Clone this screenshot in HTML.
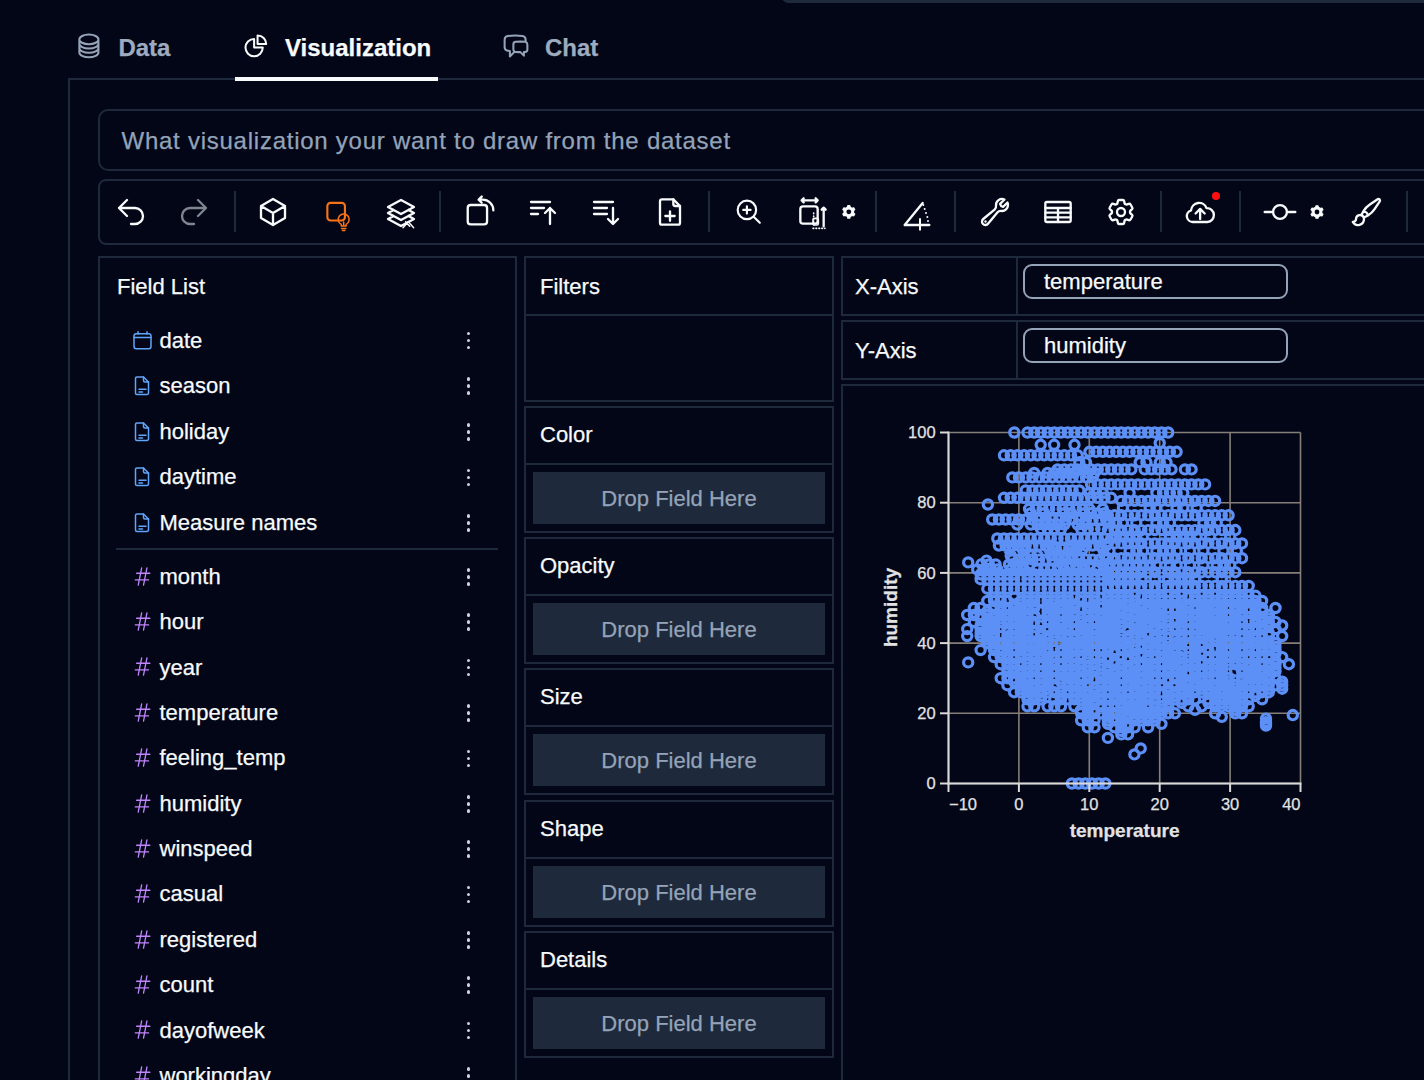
<!DOCTYPE html><html><head><meta charset="utf-8"><style>
html,body{margin:0;padding:0;background:#020617;width:1424px;height:1080px;overflow:hidden;position:relative;font-family:"Liberation Sans",sans-serif}
.t{position:absolute;line-height:1;white-space:nowrap;-webkit-text-stroke:0.25px currentColor}
svg{position:absolute;overflow:visible}
</style></head><body>
<div style="position:absolute;left:780.5px;top:-12px;width:800px;height:15px;box-sizing:border-box;background:#1e293b;border-radius:10px"></div><svg style="left:75.4px;top:32px" width="27.8" height="27.8" viewBox="0 0 24 24" fill="none" stroke="#94a3b8" stroke-width="1.75" stroke-linecap="round" stroke-linejoin="round"><path d="M20.25 6.375c0 2.278-3.694 4.125-8.25 4.125S3.75 8.653 3.75 6.375m16.5 0c0-2.278-3.694-4.125-8.25-4.125S3.75 4.097 3.75 6.375m16.5 0v11.25c0 2.278-3.694 4.125-8.25 4.125s-8.25-1.847-8.25-4.125V6.375m16.5 0v3.75m-16.5-3.75v3.75m16.5 0v3.75C20.25 16.153 16.556 18 12 18s-8.25-1.847-8.25-4.125v-3.75m16.5 0c0 2.278-3.694 4.125-8.25 4.125s-8.25-1.847-8.25-4.125"/></svg><div class="t" style="left:118.4px;top:36.3px;font-size:24px;color:#9eabbf;font-weight:bold;">Data</div><svg style="left:241.9px;top:31.9px" width="27.7" height="27.7" viewBox="0 0 24 24" fill="none" stroke="#f8fafc" stroke-width="1.75" stroke-linejoin="round"><path d="M10.5 6a7.5 7.5 0 1 0 7.5 7.5h-7.5V6Z"/><path d="M13.5 10.5H21A7.5 7.5 0 0 0 13.5 3v7.5Z"/></svg><div class="t" style="left:285px;top:36.3px;font-size:24px;color:#f8fafc;font-weight:bold;">Visualization</div><svg style="left:502.4px;top:31.9px" width="28" height="28" viewBox="0 0 24 24" fill="none" stroke="#94a3b8" stroke-width="1.75" stroke-linecap="round" stroke-linejoin="round"><path d="M20.25 8.511c.884.284 1.5 1.128 1.5 2.097v4.286c0 1.136-.847 2.1-1.98 2.193-.34.027-.68.052-1.02.072v3.091l-3-3c-1.354 0-2.694-.055-4.02-.163a2.115 2.115 0 0 1-.825-.242m9.345-8.334a2.126 2.126 0 0 0-.476-.095 48.64 48.64 0 0 0-8.048 0c-1.131.094-1.976 1.057-1.976 2.192v4.286c0 .837.46 1.58 1.155 1.951m9.345-8.334V6.637c0-1.621-1.152-3.026-2.76-3.235A48.455 48.455 0 0 0 11.25 3c-2.115 0-4.198.137-6.24.402-1.608.209-2.76 1.614-2.76 3.235v6.226c0 1.621 1.152 3.026 2.76 3.235.577.075 1.157.14 1.74.194V21l4.155-4.155"/></svg><div class="t" style="left:545px;top:36.3px;font-size:24px;color:#9eabbf;font-weight:bold;">Chat</div><div style="position:absolute;left:68px;top:78px;width:1400px;height:1100px;box-sizing:border-box;border-left:2px solid #1e293b;border-top:2px solid #1e293b"></div><div style="position:absolute;left:235px;top:77px;width:203px;height:4px;box-sizing:border-box;background:#f8fafc"></div><div style="position:absolute;left:98px;top:109px;width:1400px;height:62px;box-sizing:border-box;border:2px solid #1e293b;border-radius:10px"></div><div class="t" style="left:121.5px;top:128.8px;font-size:24px;color:#94a3b8;font-weight:normal;letter-spacing:0.75px">What visualization your want to draw from the dataset</div><div style="position:absolute;left:98px;top:179px;width:1400px;height:66px;box-sizing:border-box;border:2px solid #1e293b;border-radius:8px"></div><div style="position:absolute;left:98px;top:256px;width:419px;height:900px;box-sizing:border-box;border:2px solid #1e293b"></div><div class="t" style="left:117px;top:275.7px;font-size:22px;color:#f8fafc;font-weight:normal;">Field List</div><div style="position:absolute;left:524px;top:256px;width:310px;height:146px;box-sizing:border-box;border:2px solid #1e293b"></div><div style="position:absolute;left:524px;top:314px;width:310px;height:2px;box-sizing:border-box;background:#1e293b"></div><div class="t" style="left:540px;top:275.7px;font-size:22px;color:#f8fafc;font-weight:normal;">Filters</div><div style="position:absolute;left:524px;top:406px;width:310px;height:127px;box-sizing:border-box;border:2px solid #1e293b"></div><div style="position:absolute;left:524px;top:463px;width:310px;height:2px;box-sizing:border-box;background:#1e293b"></div><div class="t" style="left:540px;top:424.4px;font-size:22px;color:#f8fafc;font-weight:normal;">Color</div><div style="position:absolute;left:533px;top:472px;width:292px;height:52px;box-sizing:border-box;background:#1e293b"></div><div class="t" style="left:533px;top:487.5px;width:292px;text-align:center;font-size:22px;color:#94a3b8">Drop Field Here</div><div style="position:absolute;left:524px;top:537px;width:310px;height:127px;box-sizing:border-box;border:2px solid #1e293b"></div><div style="position:absolute;left:524px;top:594px;width:310px;height:2px;box-sizing:border-box;background:#1e293b"></div><div class="t" style="left:540px;top:555.4px;font-size:22px;color:#f8fafc;font-weight:normal;">Opacity</div><div style="position:absolute;left:533px;top:603px;width:292px;height:52px;box-sizing:border-box;background:#1e293b"></div><div class="t" style="left:533px;top:618.5px;width:292px;text-align:center;font-size:22px;color:#94a3b8">Drop Field Here</div><div style="position:absolute;left:524px;top:668px;width:310px;height:127px;box-sizing:border-box;border:2px solid #1e293b"></div><div style="position:absolute;left:524px;top:725px;width:310px;height:2px;box-sizing:border-box;background:#1e293b"></div><div class="t" style="left:540px;top:686.4px;font-size:22px;color:#f8fafc;font-weight:normal;">Size</div><div style="position:absolute;left:533px;top:734px;width:292px;height:52px;box-sizing:border-box;background:#1e293b"></div><div class="t" style="left:533px;top:749.5px;width:292px;text-align:center;font-size:22px;color:#94a3b8">Drop Field Here</div><div style="position:absolute;left:524px;top:800px;width:310px;height:127px;box-sizing:border-box;border:2px solid #1e293b"></div><div style="position:absolute;left:524px;top:857px;width:310px;height:2px;box-sizing:border-box;background:#1e293b"></div><div class="t" style="left:540px;top:818.4px;font-size:22px;color:#f8fafc;font-weight:normal;">Shape</div><div style="position:absolute;left:533px;top:866px;width:292px;height:52px;box-sizing:border-box;background:#1e293b"></div><div class="t" style="left:533px;top:881.5px;width:292px;text-align:center;font-size:22px;color:#94a3b8">Drop Field Here</div><div style="position:absolute;left:524px;top:931px;width:310px;height:127px;box-sizing:border-box;border:2px solid #1e293b"></div><div style="position:absolute;left:524px;top:988px;width:310px;height:2px;box-sizing:border-box;background:#1e293b"></div><div class="t" style="left:540px;top:949.4px;font-size:22px;color:#f8fafc;font-weight:normal;">Details</div><div style="position:absolute;left:533px;top:997px;width:292px;height:52px;box-sizing:border-box;background:#1e293b"></div><div class="t" style="left:533px;top:1012.5px;width:292px;text-align:center;font-size:22px;color:#94a3b8">Drop Field Here</div><div style="position:absolute;left:841px;top:256px;width:700px;height:60px;box-sizing:border-box;border:2px solid #1e293b"></div><div style="position:absolute;left:1016px;top:256px;width:2px;height:60px;box-sizing:border-box;background:#1e293b"></div><div class="t" style="left:855px;top:276px;font-size:22px;color:#f8fafc;font-weight:normal;">X-Axis</div><div style="position:absolute;left:1023px;top:264px;width:265px;height:35px;box-sizing:border-box;border:2px solid #94a3b8;border-radius:9px"></div><div class="t" style="left:1044px;top:270.5px;font-size:22px;color:#f8fafc;font-weight:normal;">temperature</div><div style="position:absolute;left:841px;top:320px;width:700px;height:60px;box-sizing:border-box;border:2px solid #1e293b"></div><div style="position:absolute;left:1016px;top:320px;width:2px;height:60px;box-sizing:border-box;background:#1e293b"></div><div class="t" style="left:855px;top:340px;font-size:22px;color:#f8fafc;font-weight:normal;">Y-Axis</div><div style="position:absolute;left:1023px;top:328px;width:265px;height:35px;box-sizing:border-box;border:2px solid #94a3b8;border-radius:9px"></div><div class="t" style="left:1044px;top:334.5px;font-size:22px;color:#f8fafc;font-weight:normal;">humidity</div><div style="position:absolute;left:841px;top:384px;width:700px;height:800px;box-sizing:border-box;border:2px solid #1e293b"></div><svg style="left:133px;top:330.5px" width="19" height="19" viewBox="0 0 19 19" fill="none" stroke="#60a5fa" stroke-width="1.5" stroke-linecap="round" stroke-linejoin="round"><rect x="1" y="2.8" width="17" height="15" rx="2.2"/><path d="M1 6.5h17M5 0.8v2.2M14 0.8v2.2"/></svg><div class="t" style="left:159.5px;top:329.5px;font-size:22px;color:#f8fafc;font-weight:normal;">date</div><div style="position:absolute;left:466.6px;top:331.7px;width:3.7px;height:3.7px;border-radius:50%;background:#cbd5e1"></div><div style="position:absolute;left:466.6px;top:338.7px;width:3.7px;height:3.7px;border-radius:50%;background:#cbd5e1"></div><div style="position:absolute;left:466.6px;top:345.7px;width:3.7px;height:3.7px;border-radius:50%;background:#cbd5e1"></div><svg style="left:133.3px;top:376.1px" width="19" height="20" viewBox="0 0 19 20" fill="none" stroke="#60a5fa" stroke-width="1.5" stroke-linecap="round" stroke-linejoin="round"><path d="M4 1h6.5l5 5v11a1.5 1.5 0 0 1-1.5 1.5H4A1.5 1.5 0 0 1 2.5 17V2.5A1.5 1.5 0 0 1 4 1Z"/><path d="M10.5 1v3.5a1.5 1.5 0 0 0 1.5 1.5h3.5M6 13.2h7M6 16h3.5"/></svg><div class="t" style="left:159.5px;top:375.1px;font-size:22px;color:#f8fafc;font-weight:normal;">season</div><div style="position:absolute;left:466.6px;top:377.3px;width:3.7px;height:3.7px;border-radius:50%;background:#cbd5e1"></div><div style="position:absolute;left:466.6px;top:384.3px;width:3.7px;height:3.7px;border-radius:50%;background:#cbd5e1"></div><div style="position:absolute;left:466.6px;top:391.3px;width:3.7px;height:3.7px;border-radius:50%;background:#cbd5e1"></div><svg style="left:133.3px;top:421.7px" width="19" height="20" viewBox="0 0 19 20" fill="none" stroke="#60a5fa" stroke-width="1.5" stroke-linecap="round" stroke-linejoin="round"><path d="M4 1h6.5l5 5v11a1.5 1.5 0 0 1-1.5 1.5H4A1.5 1.5 0 0 1 2.5 17V2.5A1.5 1.5 0 0 1 4 1Z"/><path d="M10.5 1v3.5a1.5 1.5 0 0 0 1.5 1.5h3.5M6 13.2h7M6 16h3.5"/></svg><div class="t" style="left:159.5px;top:420.7px;font-size:22px;color:#f8fafc;font-weight:normal;">holiday</div><div style="position:absolute;left:466.6px;top:422.9px;width:3.7px;height:3.7px;border-radius:50%;background:#cbd5e1"></div><div style="position:absolute;left:466.6px;top:429.9px;width:3.7px;height:3.7px;border-radius:50%;background:#cbd5e1"></div><div style="position:absolute;left:466.6px;top:436.9px;width:3.7px;height:3.7px;border-radius:50%;background:#cbd5e1"></div><svg style="left:133.3px;top:467.3px" width="19" height="20" viewBox="0 0 19 20" fill="none" stroke="#60a5fa" stroke-width="1.5" stroke-linecap="round" stroke-linejoin="round"><path d="M4 1h6.5l5 5v11a1.5 1.5 0 0 1-1.5 1.5H4A1.5 1.5 0 0 1 2.5 17V2.5A1.5 1.5 0 0 1 4 1Z"/><path d="M10.5 1v3.5a1.5 1.5 0 0 0 1.5 1.5h3.5M6 13.2h7M6 16h3.5"/></svg><div class="t" style="left:159.5px;top:466.3px;font-size:22px;color:#f8fafc;font-weight:normal;">daytime</div><div style="position:absolute;left:466.6px;top:468.5px;width:3.7px;height:3.7px;border-radius:50%;background:#cbd5e1"></div><div style="position:absolute;left:466.6px;top:475.5px;width:3.7px;height:3.7px;border-radius:50%;background:#cbd5e1"></div><div style="position:absolute;left:466.6px;top:482.5px;width:3.7px;height:3.7px;border-radius:50%;background:#cbd5e1"></div><svg style="left:133.3px;top:512.9px" width="19" height="20" viewBox="0 0 19 20" fill="none" stroke="#60a5fa" stroke-width="1.5" stroke-linecap="round" stroke-linejoin="round"><path d="M4 1h6.5l5 5v11a1.5 1.5 0 0 1-1.5 1.5H4A1.5 1.5 0 0 1 2.5 17V2.5A1.5 1.5 0 0 1 4 1Z"/><path d="M10.5 1v3.5a1.5 1.5 0 0 0 1.5 1.5h3.5M6 13.2h7M6 16h3.5"/></svg><div class="t" style="left:159.5px;top:511.9px;font-size:22px;color:#f8fafc;font-weight:normal;">Measure names</div><div style="position:absolute;left:466.6px;top:514.0999999999999px;width:3.7px;height:3.7px;border-radius:50%;background:#cbd5e1"></div><div style="position:absolute;left:466.6px;top:521.1px;width:3.7px;height:3.7px;border-radius:50%;background:#cbd5e1"></div><div style="position:absolute;left:466.6px;top:528.1px;width:3.7px;height:3.7px;border-radius:50%;background:#cbd5e1"></div><div style="position:absolute;left:116px;top:548px;width:382px;height:2px;box-sizing:border-box;background:#1e293b"></div><svg style="left:132px;top:565.5999999999999px" width="21.2" height="21.2" viewBox="0 0 24 24" fill="none" stroke="#c084fc" stroke-width="1.5" stroke-linecap="round" stroke-linejoin="round"><path d="M5.25 8.25h15m-16.5 7.5h15m-1.8-13.5-3.9 19.5m-2.1-19.5-3.9 19.5"/></svg><div class="t" style="left:159.5px;top:565.8px;font-size:22px;color:#f8fafc;font-weight:normal;">month</div><div style="position:absolute;left:466.6px;top:568.0px;width:3.7px;height:3.7px;border-radius:50%;background:#cbd5e1"></div><div style="position:absolute;left:466.6px;top:575.0px;width:3.7px;height:3.7px;border-radius:50%;background:#cbd5e1"></div><div style="position:absolute;left:466.6px;top:582.0px;width:3.7px;height:3.7px;border-radius:50%;background:#cbd5e1"></div><svg style="left:132px;top:610.9799999999999px" width="21.2" height="21.2" viewBox="0 0 24 24" fill="none" stroke="#c084fc" stroke-width="1.5" stroke-linecap="round" stroke-linejoin="round"><path d="M5.25 8.25h15m-16.5 7.5h15m-1.8-13.5-3.9 19.5m-2.1-19.5-3.9 19.5"/></svg><div class="t" style="left:159.5px;top:611.18px;font-size:22px;color:#f8fafc;font-weight:normal;">hour</div><div style="position:absolute;left:466.6px;top:613.38px;width:3.7px;height:3.7px;border-radius:50%;background:#cbd5e1"></div><div style="position:absolute;left:466.6px;top:620.38px;width:3.7px;height:3.7px;border-radius:50%;background:#cbd5e1"></div><div style="position:absolute;left:466.6px;top:627.38px;width:3.7px;height:3.7px;border-radius:50%;background:#cbd5e1"></div><svg style="left:132px;top:656.3599999999999px" width="21.2" height="21.2" viewBox="0 0 24 24" fill="none" stroke="#c084fc" stroke-width="1.5" stroke-linecap="round" stroke-linejoin="round"><path d="M5.25 8.25h15m-16.5 7.5h15m-1.8-13.5-3.9 19.5m-2.1-19.5-3.9 19.5"/></svg><div class="t" style="left:159.5px;top:656.56px;font-size:22px;color:#f8fafc;font-weight:normal;">year</div><div style="position:absolute;left:466.6px;top:658.76px;width:3.7px;height:3.7px;border-radius:50%;background:#cbd5e1"></div><div style="position:absolute;left:466.6px;top:665.76px;width:3.7px;height:3.7px;border-radius:50%;background:#cbd5e1"></div><div style="position:absolute;left:466.6px;top:672.76px;width:3.7px;height:3.7px;border-radius:50%;background:#cbd5e1"></div><svg style="left:132px;top:701.7399999999999px" width="21.2" height="21.2" viewBox="0 0 24 24" fill="none" stroke="#c084fc" stroke-width="1.5" stroke-linecap="round" stroke-linejoin="round"><path d="M5.25 8.25h15m-16.5 7.5h15m-1.8-13.5-3.9 19.5m-2.1-19.5-3.9 19.5"/></svg><div class="t" style="left:159.5px;top:701.9399999999999px;font-size:22px;color:#f8fafc;font-weight:normal;">temperature</div><div style="position:absolute;left:466.6px;top:704.14px;width:3.7px;height:3.7px;border-radius:50%;background:#cbd5e1"></div><div style="position:absolute;left:466.6px;top:711.14px;width:3.7px;height:3.7px;border-radius:50%;background:#cbd5e1"></div><div style="position:absolute;left:466.6px;top:718.14px;width:3.7px;height:3.7px;border-radius:50%;background:#cbd5e1"></div><svg style="left:132px;top:747.1199999999999px" width="21.2" height="21.2" viewBox="0 0 24 24" fill="none" stroke="#c084fc" stroke-width="1.5" stroke-linecap="round" stroke-linejoin="round"><path d="M5.25 8.25h15m-16.5 7.5h15m-1.8-13.5-3.9 19.5m-2.1-19.5-3.9 19.5"/></svg><div class="t" style="left:159.5px;top:747.3199999999999px;font-size:22px;color:#f8fafc;font-weight:normal;">feeling_temp</div><div style="position:absolute;left:466.6px;top:749.52px;width:3.7px;height:3.7px;border-radius:50%;background:#cbd5e1"></div><div style="position:absolute;left:466.6px;top:756.52px;width:3.7px;height:3.7px;border-radius:50%;background:#cbd5e1"></div><div style="position:absolute;left:466.6px;top:763.52px;width:3.7px;height:3.7px;border-radius:50%;background:#cbd5e1"></div><svg style="left:132px;top:792.4999999999999px" width="21.2" height="21.2" viewBox="0 0 24 24" fill="none" stroke="#c084fc" stroke-width="1.5" stroke-linecap="round" stroke-linejoin="round"><path d="M5.25 8.25h15m-16.5 7.5h15m-1.8-13.5-3.9 19.5m-2.1-19.5-3.9 19.5"/></svg><div class="t" style="left:159.5px;top:792.6999999999999px;font-size:22px;color:#f8fafc;font-weight:normal;">humidity</div><div style="position:absolute;left:466.6px;top:794.9px;width:3.7px;height:3.7px;border-radius:50%;background:#cbd5e1"></div><div style="position:absolute;left:466.6px;top:801.9px;width:3.7px;height:3.7px;border-radius:50%;background:#cbd5e1"></div><div style="position:absolute;left:466.6px;top:808.9px;width:3.7px;height:3.7px;border-radius:50%;background:#cbd5e1"></div><svg style="left:132px;top:837.8799999999999px" width="21.2" height="21.2" viewBox="0 0 24 24" fill="none" stroke="#c084fc" stroke-width="1.5" stroke-linecap="round" stroke-linejoin="round"><path d="M5.25 8.25h15m-16.5 7.5h15m-1.8-13.5-3.9 19.5m-2.1-19.5-3.9 19.5"/></svg><div class="t" style="left:159.5px;top:838.0799999999999px;font-size:22px;color:#f8fafc;font-weight:normal;">winspeed</div><div style="position:absolute;left:466.6px;top:840.28px;width:3.7px;height:3.7px;border-radius:50%;background:#cbd5e1"></div><div style="position:absolute;left:466.6px;top:847.28px;width:3.7px;height:3.7px;border-radius:50%;background:#cbd5e1"></div><div style="position:absolute;left:466.6px;top:854.28px;width:3.7px;height:3.7px;border-radius:50%;background:#cbd5e1"></div><svg style="left:132px;top:883.26px" width="21.2" height="21.2" viewBox="0 0 24 24" fill="none" stroke="#c084fc" stroke-width="1.5" stroke-linecap="round" stroke-linejoin="round"><path d="M5.25 8.25h15m-16.5 7.5h15m-1.8-13.5-3.9 19.5m-2.1-19.5-3.9 19.5"/></svg><div class="t" style="left:159.5px;top:883.46px;font-size:22px;color:#f8fafc;font-weight:normal;">casual</div><div style="position:absolute;left:466.6px;top:885.6600000000001px;width:3.7px;height:3.7px;border-radius:50%;background:#cbd5e1"></div><div style="position:absolute;left:466.6px;top:892.6600000000001px;width:3.7px;height:3.7px;border-radius:50%;background:#cbd5e1"></div><div style="position:absolute;left:466.6px;top:899.6600000000001px;width:3.7px;height:3.7px;border-radius:50%;background:#cbd5e1"></div><svg style="left:132px;top:928.6399999999999px" width="21.2" height="21.2" viewBox="0 0 24 24" fill="none" stroke="#c084fc" stroke-width="1.5" stroke-linecap="round" stroke-linejoin="round"><path d="M5.25 8.25h15m-16.5 7.5h15m-1.8-13.5-3.9 19.5m-2.1-19.5-3.9 19.5"/></svg><div class="t" style="left:159.5px;top:928.8399999999999px;font-size:22px;color:#f8fafc;font-weight:normal;">registered</div><div style="position:absolute;left:466.6px;top:931.04px;width:3.7px;height:3.7px;border-radius:50%;background:#cbd5e1"></div><div style="position:absolute;left:466.6px;top:938.04px;width:3.7px;height:3.7px;border-radius:50%;background:#cbd5e1"></div><div style="position:absolute;left:466.6px;top:945.04px;width:3.7px;height:3.7px;border-radius:50%;background:#cbd5e1"></div><svg style="left:132px;top:974.02px" width="21.2" height="21.2" viewBox="0 0 24 24" fill="none" stroke="#c084fc" stroke-width="1.5" stroke-linecap="round" stroke-linejoin="round"><path d="M5.25 8.25h15m-16.5 7.5h15m-1.8-13.5-3.9 19.5m-2.1-19.5-3.9 19.5"/></svg><div class="t" style="left:159.5px;top:974.22px;font-size:22px;color:#f8fafc;font-weight:normal;">count</div><div style="position:absolute;left:466.6px;top:976.4200000000001px;width:3.7px;height:3.7px;border-radius:50%;background:#cbd5e1"></div><div style="position:absolute;left:466.6px;top:983.4200000000001px;width:3.7px;height:3.7px;border-radius:50%;background:#cbd5e1"></div><div style="position:absolute;left:466.6px;top:990.4200000000001px;width:3.7px;height:3.7px;border-radius:50%;background:#cbd5e1"></div><svg style="left:132px;top:1019.3999999999999px" width="21.2" height="21.2" viewBox="0 0 24 24" fill="none" stroke="#c084fc" stroke-width="1.5" stroke-linecap="round" stroke-linejoin="round"><path d="M5.25 8.25h15m-16.5 7.5h15m-1.8-13.5-3.9 19.5m-2.1-19.5-3.9 19.5"/></svg><div class="t" style="left:159.5px;top:1019.5999999999999px;font-size:22px;color:#f8fafc;font-weight:normal;">dayofweek</div><div style="position:absolute;left:466.6px;top:1021.8px;width:3.7px;height:3.7px;border-radius:50%;background:#cbd5e1"></div><div style="position:absolute;left:466.6px;top:1028.8px;width:3.7px;height:3.7px;border-radius:50%;background:#cbd5e1"></div><div style="position:absolute;left:466.6px;top:1035.8px;width:3.7px;height:3.7px;border-radius:50%;background:#cbd5e1"></div><svg style="left:132px;top:1064.78px" width="21.2" height="21.2" viewBox="0 0 24 24" fill="none" stroke="#c084fc" stroke-width="1.5" stroke-linecap="round" stroke-linejoin="round"><path d="M5.25 8.25h15m-16.5 7.5h15m-1.8-13.5-3.9 19.5m-2.1-19.5-3.9 19.5"/></svg><div class="t" style="left:159.5px;top:1064.98px;font-size:22px;color:#f8fafc;font-weight:normal;">workingday</div><div style="position:absolute;left:466.6px;top:1067.18px;width:3.7px;height:3.7px;border-radius:50%;background:#cbd5e1"></div><div style="position:absolute;left:466.6px;top:1074.18px;width:3.7px;height:3.7px;border-radius:50%;background:#cbd5e1"></div><div style="position:absolute;left:466.6px;top:1081.18px;width:3.7px;height:3.7px;border-radius:50%;background:#cbd5e1"></div><div style="position:absolute;left:234px;top:191px;width:2px;height:41px;box-sizing:border-box;background:#1e293b"></div><div style="position:absolute;left:439px;top:191px;width:2px;height:41px;box-sizing:border-box;background:#1e293b"></div><div style="position:absolute;left:708px;top:191px;width:2px;height:41px;box-sizing:border-box;background:#1e293b"></div><div style="position:absolute;left:875px;top:191px;width:2px;height:41px;box-sizing:border-box;background:#1e293b"></div><div style="position:absolute;left:954px;top:191px;width:2px;height:41px;box-sizing:border-box;background:#1e293b"></div><div style="position:absolute;left:1160px;top:191px;width:2px;height:41px;box-sizing:border-box;background:#1e293b"></div><div style="position:absolute;left:1239px;top:191px;width:2px;height:41px;box-sizing:border-box;background:#1e293b"></div><div style="position:absolute;left:1406px;top:191px;width:2px;height:41px;box-sizing:border-box;background:#1e293b"></div><svg style="left:115.0px;top:195.9px" width="32" height="32" viewBox="0 0 24 24" fill="none" stroke="#f8fafc" stroke-width="1.75" stroke-linecap="round" stroke-linejoin="round" ><path d="M9 15 3 9m0 0 6-6M3 9h12a6 6 0 0 1 0 12h-3"/></svg><svg style="left:178.0px;top:195.9px" width="32" height="32" viewBox="0 0 24 24" fill="none" stroke="#80868f" stroke-width="1.75" stroke-linecap="round" stroke-linejoin="round" ><path d="m15 15 6-6m0 0-6-6m6 6H9a6 6 0 0 0 0 12h3"/></svg><svg style="left:257.4px;top:195.8px" width="32" height="32" viewBox="0 0 24 24" fill="none" stroke="#f8fafc" stroke-width="1.75" stroke-linecap="round" stroke-linejoin="round" ><path d="m21 7.5-9-5.25L3 7.5m18 0-9 5.25m9-5.25v9l-9 5.25M3 7.5l9 5.25M3 7.5v9l9 5.25m0-9v9"/></svg><svg style="left:322.0px;top:199.0px" width="32" height="32" viewBox="0 0 24 24" fill="none" stroke="#f97316" stroke-width="1.6" stroke-linecap="round" stroke-linejoin="round" ><rect x="4" y="2.9" width="13.2" height="13.2" rx="2.4"/><path d="M14.4 20.3v-1.3a4.1 4.1 0 1 1 3.7 0v1.3ZM14.6 22.2h3.3M15.3 23.6h1.9M16.25 20.3v-3" stroke-width="1.15"/></svg><svg style="left:384.7px;top:197.0px" width="32" height="32" viewBox="0 0 24 24" fill="none" stroke="#f8fafc" stroke-width="1.75" stroke-linecap="round" stroke-linejoin="round" ><path d="M6.429 9.75 2.25 12l4.179 2.25m0-4.5 5.571 3 5.571-3m-11.142 0L2.25 7.5 12 2.25l9.75 5.25-4.179 2.25m0 0L21.75 12l-4.179 2.25m0 0 4.179 2.25L12 21.75 2.25 16.5l4.179-2.25m11.142 0-5.571 3-5.571-3"/><path d="M13.5 23l4-4.5 4 4.5M15.5 18.5l3 3.5" stroke-width="1.1"/></svg><svg style="left:464.0px;top:195.0px" width="32" height="32" viewBox="0 0 24 24" fill="none" stroke="#f8fafc" stroke-width="1.75" stroke-linecap="round" stroke-linejoin="round" ><rect x="2.8" y="7.5" width="14.5" height="14.5" rx="2.2"/><path d="M22 11.5a8 8 0 0 0-8-8h-3m0 0 2.3-2.3m-2.3 2.3 2.3 2.3"/></svg><svg style="left:527.0px;top:196.4px" width="32" height="32" viewBox="0 0 24 24" fill="none" stroke="#f8fafc" stroke-width="1.75" stroke-linecap="round" stroke-linejoin="round" ><path d="M3 4.5h14.25M3 9h9.75M3 13.5h5.25m5.25-.75L17.25 9m0 0L21 12.75M17.25 9v12"/></svg><svg style="left:590.0px;top:196.4px" width="32" height="32" viewBox="0 0 24 24" fill="none" stroke="#f8fafc" stroke-width="1.75" stroke-linecap="round" stroke-linejoin="round" ><path d="M3 4.5h14.25M3 9h9.75M3 13.5h9.75m4.5-4.5v12m0 0-3.75-3.75M17.25 21 21 17.25"/></svg><svg style="left:653.5px;top:195.7px" width="32" height="32" viewBox="0 0 24 24" fill="none" stroke="#f8fafc" stroke-width="1.75" stroke-linecap="round" stroke-linejoin="round" ><path d="M6 2.5h8.5l5 5V20a1.5 1.5 0 0 1-1.5 1.5H6A1.5 1.5 0 0 1 4.5 20V4A1.5 1.5 0 0 1 6 2.5Z"/><path d="M14.5 2.5V6a1.5 1.5 0 0 0 1.5 1.5h3.5M12 11.5v7M8.5 15h7"/></svg><svg style="left:733.65px;top:197.15px" width="29.5" height="29.5" viewBox="0 0 24 24" fill="none" stroke="#f8fafc" stroke-width="1.75" stroke-linecap="round" stroke-linejoin="round" ><path d="m21 21-5.197-5.197m0 0A7.5 7.5 0 1 0 5.196 5.196a7.5 7.5 0 0 0 10.607 10.607ZM10.5 7.5v6m3-3h-6"/></svg><svg style="left:796.7px;top:196.8px" width="32" height="32" viewBox="0 0 24 24" fill="none" stroke="#f8fafc" stroke-width="1.75" stroke-linecap="round" stroke-linejoin="round" ><rect x="2.5" y="7" width="13" height="13" rx="2"/><path d="M3.5 2.5h12M3.5 2.5l1.5-1.5M3.5 2.5 5 4M15.5 2.5 14 1M15.5 2.5 14 4M20 8v14M20 8l-1.5 1.5M20 8l1.5 1.5"/><rect x="12" y="16" width="4" height="5" rx="1" stroke-width="1.2"/><path d="M12 23.5h9M12.5 12v9" stroke-dasharray="0.6 1.6" stroke-width="1.2"/></svg><svg style="left:0;top:0" width="1" height="1"><polygon points="846.47,207.76 847.58,206.91 847.81,205.58 849.79,205.58 850.02,206.91 851.13,207.76 852.43,208.30 853.70,207.84 854.68,209.54 853.64,210.41 853.46,211.80 853.64,213.19 854.68,214.06 853.70,215.76 852.43,215.30 851.13,215.84 850.02,216.69 849.79,218.02 847.81,218.02 847.58,216.69 846.47,215.84 845.17,215.30 843.90,215.76 842.92,214.06 843.96,213.19 844.14,211.80 843.96,210.41 842.92,209.54 843.90,207.84 845.17,208.30" fill="#f8fafc" stroke="#f8fafc" stroke-width="1.3" stroke-linejoin="round"/><circle cx="848.8" cy="211.8" r="2.4" fill="#020617"/></svg><svg style="left:0;top:0" width="1" height="1"><polygon points="1314.67,207.96 1315.78,207.11 1316.01,205.78 1317.99,205.78 1318.22,207.11 1319.33,207.96 1320.63,208.50 1321.90,208.04 1322.88,209.74 1321.84,210.61 1321.66,212.00 1321.84,213.39 1322.88,214.26 1321.90,215.96 1320.63,215.50 1319.33,216.04 1318.22,216.89 1317.99,218.22 1316.01,218.22 1315.78,216.89 1314.67,216.04 1313.37,215.50 1312.10,215.96 1311.12,214.26 1312.16,213.39 1312.34,212.00 1312.16,210.61 1311.12,209.74 1312.10,208.04 1313.37,208.50" fill="#f8fafc" stroke="#f8fafc" stroke-width="1.3" stroke-linejoin="round"/><circle cx="1317" cy="212" r="2.4" fill="#020617"/></svg><svg style="left:900.0px;top:198.8px" width="32" height="32" viewBox="0 0 24 24" fill="none" stroke="#f8fafc" stroke-width="1.75" stroke-linecap="round" stroke-linejoin="round" ><path d="M17 3 3.5 19.5H22" /><path d="M17.5 4.5v0M18.5 7.5v0M19.5 10.5v0M20.5 13.5v0M21 16.5v0M15 15v8" stroke-width="1.5"/></svg><svg style="left:979.3px;top:195.6px" width="32" height="32" viewBox="0 0 24 24" fill="none" stroke="#f8fafc" stroke-width="1.75" stroke-linecap="round" stroke-linejoin="round" ><path d="M21.75 6.75a4.5 4.5 0 0 1-4.884 4.484c-1.076-.091-2.264.071-2.95.904l-7.152 8.684a2.548 2.548 0 1 1-3.586-3.586l8.684-7.152c.833-.686.995-1.874.904-2.95a4.5 4.5 0 0 1 6.336-4.486l-3.276 3.276a3.004 3.004 0 0 0 2.25 2.25l3.276-3.276c.256.565.398 1.192.398 1.852Z"/><path d="M4.867 19.125h.008v.008h-.008v-.008Z"/></svg><svg style="left:1042.3px;top:195.8px" width="32" height="32" viewBox="0 0 24 24" fill="none" stroke="#f8fafc" stroke-width="1.75" stroke-linecap="round" stroke-linejoin="round" ><rect x="2.5" y="4.5" width="19" height="15" rx="1.2"/><path d="M2.5 9h19M2.5 12.5h19M2.5 16h19M12 9v10.5"/></svg><svg style="left:1105.4px;top:195.9px" width="32" height="32" viewBox="0 0 24 24" fill="none" stroke="#f8fafc" stroke-width="1.75" stroke-linecap="round" stroke-linejoin="round" ><path d="M9.594 3.94c.09-.542.56-.94 1.11-.94h2.593c.55 0 1.02.398 1.11.94l.213 1.281c.063.374.313.686.645.87.074.04.147.083.22.127.325.196.72.257 1.075.124l1.217-.456a1.125 1.125 0 0 1 1.37.49l1.296 2.247a1.125 1.125 0 0 1-.26 1.431l-1.003.827c-.293.241-.438.613-.43.992a7.723 7.723 0 0 1 0 .255c-.008.378.137.75.43.991l1.004.827c.424.35.534.955.26 1.43l-1.298 2.247a1.125 1.125 0 0 1-1.369.491l-1.217-.456c-.355-.133-.75-.072-1.076.124a6.47 6.470 0 0 1-.22.128c-.331.183-.581.495-.644.869l-.213 1.281c-.09.543-.56.94-1.11.94h-2.594c-.55 0-1.019-.398-1.11-.94l-.213-1.281c-.062-.374-.312-.686-.644-.87a6.52 6.52 0 0 1-.22-.127c-.325-.196-.72-.257-1.076-.124l-1.217.456a1.125 1.125 0 0 1-1.369-.49l-1.297-2.247a1.125 1.125 0 0 1 .26-1.431l1.004-.827c.292-.24.437-.613.43-.991a6.932 6.932 0 0 1 0-.255c.007-.38-.138-.751-.43-.992l-1.004-.827a1.125 1.125 0 0 1-.26-1.43l1.297-2.247a1.125 1.125 0 0 1 1.37-.491l1.216.456c.356.133.751.072 1.076-.124.072-.044.146-.086.22-.128.332-.183.582-.495.644-.869l.214-1.28Z"/><path d="M15 12a3 3 0 1 1-6 0 3 3 0 0 1 6 0Z"/></svg><svg style="left:1184.4px;top:195.8px" width="32" height="32" viewBox="0 0 24 24" fill="none" stroke="#f8fafc" stroke-width="1.75" stroke-linecap="round" stroke-linejoin="round" ><path d="M6.5 19.5a4.5 4.5 0 0 1-1.2-8.8 6 6 0 0 1 11.6-1.6A5 5 0 0 1 17.5 19.5Z"/><path d="M12.1 17.3V9.8M8.7 13.1l3.4-3.4 3.4 3.4"/></svg><div style="position:absolute;left:1212.3px;top:192.3px;width:8px;height:8px;border-radius:50%;background:#ff1010"></div><svg style="left:1263.8px;top:195.7px" width="32" height="32" viewBox="0 0 24 24" fill="none" stroke="#f8fafc" stroke-width="1.75" stroke-linecap="round" stroke-linejoin="round" ><circle cx="12" cy="12" r="5.2"/><path d="M0.5 12h6.3M17.2 12h6.3"/></svg><svg style="left:1351.3px;top:195.6px" width="32" height="32" viewBox="0 0 24 24" fill="none" stroke="#f8fafc" stroke-width="1.75" stroke-linecap="round" stroke-linejoin="round" ><path d="M9.53 16.122a3 3 0 0 0-5.78 1.128 2.25 2.25 0 0 1-2.4 2.245 4.5 4.5 0 0 0 8.4-2.245c0-.399-.078-.78-.22-1.128Zm0 0a15.998 15.998 0 0 0 3.388-1.62m-5.043-.025a15.994 15.994 0 0 1 1.622-3.395m3.42 3.42a15.995 15.995 0 0 0 4.764-4.648l3.876-5.814a1.151 1.151 0 0 0-1.597-1.597L14.146 6.32a15.996 15.996 0 0 0-4.649 4.763m3.42 3.42a6.776 6.776 0 0 0-3.42-3.42"/></svg><svg style="left:0;top:0" width="1424" height="1080"><line x1="948.5" y1="783.5" x2="1300.5" y2="783.5" stroke="#857f78" stroke-width="1.6"/><line x1="948.5" y1="713.3" x2="1300.5" y2="713.3" stroke="#857f78" stroke-width="1.6"/><line x1="948.5" y1="643.1" x2="1300.5" y2="643.1" stroke="#857f78" stroke-width="1.6"/><line x1="948.5" y1="572.9" x2="1300.5" y2="572.9" stroke="#857f78" stroke-width="1.6"/><line x1="948.5" y1="502.70000000000005" x2="1300.5" y2="502.70000000000005" stroke="#857f78" stroke-width="1.6"/><line x1="948.5" y1="432.5" x2="1300.5" y2="432.5" stroke="#857f78" stroke-width="1.6"/><line x1="948.5" y1="783.5" x2="948.5" y2="432.5" stroke="#857f78" stroke-width="1.6"/><line x1="1018.9" y1="783.5" x2="1018.9" y2="432.5" stroke="#857f78" stroke-width="1.6"/><line x1="1089.3" y1="783.5" x2="1089.3" y2="432.5" stroke="#857f78" stroke-width="1.6"/><line x1="1159.7" y1="783.5" x2="1159.7" y2="432.5" stroke="#857f78" stroke-width="1.6"/><line x1="1230.1" y1="783.5" x2="1230.1" y2="432.5" stroke="#857f78" stroke-width="1.6"/><line x1="1300.5" y1="783.5" x2="1300.5" y2="432.5" stroke="#857f78" stroke-width="1.6"/><path d="M962.6 615.0a4.6 4.6 0 1 0 9.2 0a4.6 4.6 0 1 0-9.2 0M962.6 629.1a4.6 4.6 0 1 0 9.2 0a4.6 4.6 0 1 0-9.2 0M962.6 636.1a4.6 4.6 0 1 0 9.2 0a4.6 4.6 0 1 0-9.2 0M963.6 562.4a4.6 4.6 0 1 0 9.2 0a4.6 4.6 0 1 0-9.2 0M963.6 662.4a4.6 4.6 0 1 0 9.2 0a4.6 4.6 0 1 0-9.2 0M969.3 608.0a4.6 4.6 0 1 0 9.2 0a4.6 4.6 0 1 0-9.2 0M969.3 615.0a4.6 4.6 0 1 0 9.2 0a4.6 4.6 0 1 0-9.2 0M969.3 622.0a4.6 4.6 0 1 0 9.2 0a4.6 4.6 0 1 0-9.2 0M972.6 569.4a4.6 4.6 0 1 0 9.2 0a4.6 4.6 0 1 0-9.2 0M976.0 574.3a4.6 4.6 0 1 0 9.2 0a4.6 4.6 0 1 0-9.2 0M976.0 579.2a4.6 4.6 0 1 0 9.2 0a4.6 4.6 0 1 0-9.2 0M976.0 608.0a4.6 4.6 0 1 0 9.2 0a4.6 4.6 0 1 0-9.2 0M976.0 615.0a4.6 4.6 0 1 0 9.2 0a4.6 4.6 0 1 0-9.2 0M976.0 618.5a4.6 4.6 0 1 0 9.2 0a4.6 4.6 0 1 0-9.2 0M976.0 625.5a4.6 4.6 0 1 0 9.2 0a4.6 4.6 0 1 0-9.2 0M976.0 629.1a4.6 4.6 0 1 0 9.2 0a4.6 4.6 0 1 0-9.2 0M976.0 632.6a4.6 4.6 0 1 0 9.2 0a4.6 4.6 0 1 0-9.2 0M976.0 636.1a4.6 4.6 0 1 0 9.2 0a4.6 4.6 0 1 0-9.2 0M976.0 650.1a4.6 4.6 0 1 0 9.2 0a4.6 4.6 0 1 0-9.2 0M977.0 564.1a4.6 4.6 0 1 0 9.2 0a4.6 4.6 0 1 0-9.2 0M979.3 569.4a4.6 4.6 0 1 0 9.2 0a4.6 4.6 0 1 0-9.2 0M981.9 560.6a4.6 4.6 0 1 0 9.2 0a4.6 4.6 0 1 0-9.2 0M982.7 574.3a4.6 4.6 0 1 0 9.2 0a4.6 4.6 0 1 0-9.2 0M982.7 579.2a4.6 4.6 0 1 0 9.2 0a4.6 4.6 0 1 0-9.2 0M982.7 588.7a4.6 4.6 0 1 0 9.2 0a4.6 4.6 0 1 0-9.2 0M982.7 601.0a4.6 4.6 0 1 0 9.2 0a4.6 4.6 0 1 0-9.2 0M982.7 611.5a4.6 4.6 0 1 0 9.2 0a4.6 4.6 0 1 0-9.2 0M982.7 615.0a4.6 4.6 0 1 0 9.2 0a4.6 4.6 0 1 0-9.2 0M982.7 618.5a4.6 4.6 0 1 0 9.2 0a4.6 4.6 0 1 0-9.2 0M982.7 622.0a4.6 4.6 0 1 0 9.2 0a4.6 4.6 0 1 0-9.2 0M982.7 625.5a4.6 4.6 0 1 0 9.2 0a4.6 4.6 0 1 0-9.2 0M982.7 629.1a4.6 4.6 0 1 0 9.2 0a4.6 4.6 0 1 0-9.2 0M982.7 632.6a4.6 4.6 0 1 0 9.2 0a4.6 4.6 0 1 0-9.2 0M982.7 636.1a4.6 4.6 0 1 0 9.2 0a4.6 4.6 0 1 0-9.2 0M982.7 639.6a4.6 4.6 0 1 0 9.2 0a4.6 4.6 0 1 0-9.2 0M982.7 643.1a4.6 4.6 0 1 0 9.2 0a4.6 4.6 0 1 0-9.2 0M983.3 504.5a4.6 4.6 0 1 0 9.2 0a4.6 4.6 0 1 0-9.2 0M984.3 564.5a4.6 4.6 0 1 0 9.2 0a4.6 4.6 0 1 0-9.2 0M986.0 569.4a4.6 4.6 0 1 0 9.2 0a4.6 4.6 0 1 0-9.2 0M987.6 519.5a4.6 4.6 0 1 0 9.2 0a4.6 4.6 0 1 0-9.2 0M989.4 574.3a4.6 4.6 0 1 0 9.2 0a4.6 4.6 0 1 0-9.2 0M989.4 579.2a4.6 4.6 0 1 0 9.2 0a4.6 4.6 0 1 0-9.2 0M989.4 588.7a4.6 4.6 0 1 0 9.2 0a4.6 4.6 0 1 0-9.2 0M989.4 597.5a4.6 4.6 0 1 0 9.2 0a4.6 4.6 0 1 0-9.2 0M989.4 601.0a4.6 4.6 0 1 0 9.2 0a4.6 4.6 0 1 0-9.2 0M989.4 608.0a4.6 4.6 0 1 0 9.2 0a4.6 4.6 0 1 0-9.2 0M989.4 615.0a4.6 4.6 0 1 0 9.2 0a4.6 4.6 0 1 0-9.2 0M989.4 618.5a4.6 4.6 0 1 0 9.2 0a4.6 4.6 0 1 0-9.2 0M989.4 622.0a4.6 4.6 0 1 0 9.2 0a4.6 4.6 0 1 0-9.2 0M989.4 625.5a4.6 4.6 0 1 0 9.2 0a4.6 4.6 0 1 0-9.2 0M989.4 629.1a4.6 4.6 0 1 0 9.2 0a4.6 4.6 0 1 0-9.2 0M989.4 632.6a4.6 4.6 0 1 0 9.2 0a4.6 4.6 0 1 0-9.2 0M989.4 636.1a4.6 4.6 0 1 0 9.2 0a4.6 4.6 0 1 0-9.2 0M989.4 643.1a4.6 4.6 0 1 0 9.2 0a4.6 4.6 0 1 0-9.2 0M989.4 646.6a4.6 4.6 0 1 0 9.2 0a4.6 4.6 0 1 0-9.2 0M989.4 650.1a4.6 4.6 0 1 0 9.2 0a4.6 4.6 0 1 0-9.2 0M989.4 657.1a4.6 4.6 0 1 0 9.2 0a4.6 4.6 0 1 0-9.2 0M991.0 564.5a4.6 4.6 0 1 0 9.2 0a4.6 4.6 0 1 0-9.2 0M992.7 538.5a4.6 4.6 0 1 0 9.2 0a4.6 4.6 0 1 0-9.2 0M992.7 569.4a4.6 4.6 0 1 0 9.2 0a4.6 4.6 0 1 0-9.2 0M994.3 519.5a4.6 4.6 0 1 0 9.2 0a4.6 4.6 0 1 0-9.2 0M994.3 545.5a4.6 4.6 0 1 0 9.2 0a4.6 4.6 0 1 0-9.2 0M996.1 574.3a4.6 4.6 0 1 0 9.2 0a4.6 4.6 0 1 0-9.2 0M996.1 579.2a4.6 4.6 0 1 0 9.2 0a4.6 4.6 0 1 0-9.2 0M996.1 588.7a4.6 4.6 0 1 0 9.2 0a4.6 4.6 0 1 0-9.2 0M996.1 597.5a4.6 4.6 0 1 0 9.2 0a4.6 4.6 0 1 0-9.2 0M996.1 601.0a4.6 4.6 0 1 0 9.2 0a4.6 4.6 0 1 0-9.2 0M996.1 608.0a4.6 4.6 0 1 0 9.2 0a4.6 4.6 0 1 0-9.2 0M996.1 611.5a4.6 4.6 0 1 0 9.2 0a4.6 4.6 0 1 0-9.2 0M996.1 615.0a4.6 4.6 0 1 0 9.2 0a4.6 4.6 0 1 0-9.2 0M996.1 618.5a4.6 4.6 0 1 0 9.2 0a4.6 4.6 0 1 0-9.2 0M996.1 622.0a4.6 4.6 0 1 0 9.2 0a4.6 4.6 0 1 0-9.2 0M996.1 636.1a4.6 4.6 0 1 0 9.2 0a4.6 4.6 0 1 0-9.2 0M996.1 643.1a4.6 4.6 0 1 0 9.2 0a4.6 4.6 0 1 0-9.2 0M996.1 650.1a4.6 4.6 0 1 0 9.2 0a4.6 4.6 0 1 0-9.2 0M996.1 653.6a4.6 4.6 0 1 0 9.2 0a4.6 4.6 0 1 0-9.2 0M996.1 657.1a4.6 4.6 0 1 0 9.2 0a4.6 4.6 0 1 0-9.2 0M996.1 664.2a4.6 4.6 0 1 0 9.2 0a4.6 4.6 0 1 0-9.2 0M996.1 678.2a4.6 4.6 0 1 0 9.2 0a4.6 4.6 0 1 0-9.2 0M999.4 455.3a4.6 4.6 0 1 0 9.2 0a4.6 4.6 0 1 0-9.2 0M999.4 497.8a4.6 4.6 0 1 0 9.2 0a4.6 4.6 0 1 0-9.2 0M999.4 538.5a4.6 4.6 0 1 0 9.2 0a4.6 4.6 0 1 0-9.2 0M1001.0 519.5a4.6 4.6 0 1 0 9.2 0a4.6 4.6 0 1 0-9.2 0M1001.0 545.5a4.6 4.6 0 1 0 9.2 0a4.6 4.6 0 1 0-9.2 0M1002.8 574.3a4.6 4.6 0 1 0 9.2 0a4.6 4.6 0 1 0-9.2 0M1002.8 579.2a4.6 4.6 0 1 0 9.2 0a4.6 4.6 0 1 0-9.2 0M1002.8 588.7a4.6 4.6 0 1 0 9.2 0a4.6 4.6 0 1 0-9.2 0M1002.8 601.0a4.6 4.6 0 1 0 9.2 0a4.6 4.6 0 1 0-9.2 0M1002.8 608.0a4.6 4.6 0 1 0 9.2 0a4.6 4.6 0 1 0-9.2 0M1002.8 615.0a4.6 4.6 0 1 0 9.2 0a4.6 4.6 0 1 0-9.2 0M1002.8 618.5a4.6 4.6 0 1 0 9.2 0a4.6 4.6 0 1 0-9.2 0M1002.8 622.0a4.6 4.6 0 1 0 9.2 0a4.6 4.6 0 1 0-9.2 0M1002.8 629.1a4.6 4.6 0 1 0 9.2 0a4.6 4.6 0 1 0-9.2 0M1002.8 632.6a4.6 4.6 0 1 0 9.2 0a4.6 4.6 0 1 0-9.2 0M1002.8 636.1a4.6 4.6 0 1 0 9.2 0a4.6 4.6 0 1 0-9.2 0M1002.8 639.6a4.6 4.6 0 1 0 9.2 0a4.6 4.6 0 1 0-9.2 0M1002.8 643.1a4.6 4.6 0 1 0 9.2 0a4.6 4.6 0 1 0-9.2 0M1002.8 646.6a4.6 4.6 0 1 0 9.2 0a4.6 4.6 0 1 0-9.2 0M1002.8 650.1a4.6 4.6 0 1 0 9.2 0a4.6 4.6 0 1 0-9.2 0M1002.8 653.6a4.6 4.6 0 1 0 9.2 0a4.6 4.6 0 1 0-9.2 0M1002.8 657.1a4.6 4.6 0 1 0 9.2 0a4.6 4.6 0 1 0-9.2 0M1002.8 664.2a4.6 4.6 0 1 0 9.2 0a4.6 4.6 0 1 0-9.2 0M1002.8 667.7a4.6 4.6 0 1 0 9.2 0a4.6 4.6 0 1 0-9.2 0M1002.8 671.2a4.6 4.6 0 1 0 9.2 0a4.6 4.6 0 1 0-9.2 0M1002.8 678.2a4.6 4.6 0 1 0 9.2 0a4.6 4.6 0 1 0-9.2 0M1002.8 685.2a4.6 4.6 0 1 0 9.2 0a4.6 4.6 0 1 0-9.2 0M1004.4 549.0a4.6 4.6 0 1 0 9.2 0a4.6 4.6 0 1 0-9.2 0M1004.4 564.5a4.6 4.6 0 1 0 9.2 0a4.6 4.6 0 1 0-9.2 0M1006.1 455.3a4.6 4.6 0 1 0 9.2 0a4.6 4.6 0 1 0-9.2 0M1006.1 497.8a4.6 4.6 0 1 0 9.2 0a4.6 4.6 0 1 0-9.2 0M1006.1 538.5a4.6 4.6 0 1 0 9.2 0a4.6 4.6 0 1 0-9.2 0M1006.1 555.4a4.6 4.6 0 1 0 9.2 0a4.6 4.6 0 1 0-9.2 0M1006.1 569.4a4.6 4.6 0 1 0 9.2 0a4.6 4.6 0 1 0-9.2 0M1007.7 477.4a4.6 4.6 0 1 0 9.2 0a4.6 4.6 0 1 0-9.2 0M1007.7 519.5a4.6 4.6 0 1 0 9.2 0a4.6 4.6 0 1 0-9.2 0M1007.7 545.5a4.6 4.6 0 1 0 9.2 0a4.6 4.6 0 1 0-9.2 0M1007.7 559.6a4.6 4.6 0 1 0 9.2 0a4.6 4.6 0 1 0-9.2 0M1009.5 574.3a4.6 4.6 0 1 0 9.2 0a4.6 4.6 0 1 0-9.2 0M1009.5 579.2a4.6 4.6 0 1 0 9.2 0a4.6 4.6 0 1 0-9.2 0M1009.5 588.7a4.6 4.6 0 1 0 9.2 0a4.6 4.6 0 1 0-9.2 0M1009.5 597.5a4.6 4.6 0 1 0 9.2 0a4.6 4.6 0 1 0-9.2 0M1009.5 604.5a4.6 4.6 0 1 0 9.2 0a4.6 4.6 0 1 0-9.2 0M1009.5 608.0a4.6 4.6 0 1 0 9.2 0a4.6 4.6 0 1 0-9.2 0M1009.5 611.5a4.6 4.6 0 1 0 9.2 0a4.6 4.6 0 1 0-9.2 0M1009.5 615.0a4.6 4.6 0 1 0 9.2 0a4.6 4.6 0 1 0-9.2 0M1009.5 618.5a4.6 4.6 0 1 0 9.2 0a4.6 4.6 0 1 0-9.2 0M1009.5 622.0a4.6 4.6 0 1 0 9.2 0a4.6 4.6 0 1 0-9.2 0M1009.5 629.1a4.6 4.6 0 1 0 9.2 0a4.6 4.6 0 1 0-9.2 0M1009.5 632.6a4.6 4.6 0 1 0 9.2 0a4.6 4.6 0 1 0-9.2 0M1009.5 636.1a4.6 4.6 0 1 0 9.2 0a4.6 4.6 0 1 0-9.2 0M1009.5 643.1a4.6 4.6 0 1 0 9.2 0a4.6 4.6 0 1 0-9.2 0M1009.5 650.1a4.6 4.6 0 1 0 9.2 0a4.6 4.6 0 1 0-9.2 0M1009.5 657.1a4.6 4.6 0 1 0 9.2 0a4.6 4.6 0 1 0-9.2 0M1009.5 664.2a4.6 4.6 0 1 0 9.2 0a4.6 4.6 0 1 0-9.2 0M1009.5 667.7a4.6 4.6 0 1 0 9.2 0a4.6 4.6 0 1 0-9.2 0M1009.5 671.2a4.6 4.6 0 1 0 9.2 0a4.6 4.6 0 1 0-9.2 0M1009.5 678.2a4.6 4.6 0 1 0 9.2 0a4.6 4.6 0 1 0-9.2 0M1009.5 681.7a4.6 4.6 0 1 0 9.2 0a4.6 4.6 0 1 0-9.2 0M1009.5 692.2a4.6 4.6 0 1 0 9.2 0a4.6 4.6 0 1 0-9.2 0M1009.7 432.5a4.6 4.6 0 1 0 9.2 0a4.6 4.6 0 1 0-9.2 0M1011.1 564.5a4.6 4.6 0 1 0 9.2 0a4.6 4.6 0 1 0-9.2 0M1012.8 455.3a4.6 4.6 0 1 0 9.2 0a4.6 4.6 0 1 0-9.2 0M1012.8 497.8a4.6 4.6 0 1 0 9.2 0a4.6 4.6 0 1 0-9.2 0M1012.8 524.5a4.6 4.6 0 1 0 9.2 0a4.6 4.6 0 1 0-9.2 0M1012.8 538.5a4.6 4.6 0 1 0 9.2 0a4.6 4.6 0 1 0-9.2 0M1012.8 569.4a4.6 4.6 0 1 0 9.2 0a4.6 4.6 0 1 0-9.2 0M1014.4 477.4a4.6 4.6 0 1 0 9.2 0a4.6 4.6 0 1 0-9.2 0M1014.4 519.5a4.6 4.6 0 1 0 9.2 0a4.6 4.6 0 1 0-9.2 0M1014.4 545.5a4.6 4.6 0 1 0 9.2 0a4.6 4.6 0 1 0-9.2 0M1014.4 559.6a4.6 4.6 0 1 0 9.2 0a4.6 4.6 0 1 0-9.2 0M1016.2 579.2a4.6 4.6 0 1 0 9.2 0a4.6 4.6 0 1 0-9.2 0M1016.2 588.7a4.6 4.6 0 1 0 9.2 0a4.6 4.6 0 1 0-9.2 0M1016.2 601.0a4.6 4.6 0 1 0 9.2 0a4.6 4.6 0 1 0-9.2 0M1016.2 604.5a4.6 4.6 0 1 0 9.2 0a4.6 4.6 0 1 0-9.2 0M1016.2 608.0a4.6 4.6 0 1 0 9.2 0a4.6 4.6 0 1 0-9.2 0M1016.2 611.5a4.6 4.6 0 1 0 9.2 0a4.6 4.6 0 1 0-9.2 0M1016.2 615.0a4.6 4.6 0 1 0 9.2 0a4.6 4.6 0 1 0-9.2 0M1016.2 618.5a4.6 4.6 0 1 0 9.2 0a4.6 4.6 0 1 0-9.2 0M1016.2 622.0a4.6 4.6 0 1 0 9.2 0a4.6 4.6 0 1 0-9.2 0M1016.2 625.5a4.6 4.6 0 1 0 9.2 0a4.6 4.6 0 1 0-9.2 0M1016.2 629.1a4.6 4.6 0 1 0 9.2 0a4.6 4.6 0 1 0-9.2 0M1016.2 632.6a4.6 4.6 0 1 0 9.2 0a4.6 4.6 0 1 0-9.2 0M1016.2 636.1a4.6 4.6 0 1 0 9.2 0a4.6 4.6 0 1 0-9.2 0M1016.2 639.6a4.6 4.6 0 1 0 9.2 0a4.6 4.6 0 1 0-9.2 0M1016.2 643.1a4.6 4.6 0 1 0 9.2 0a4.6 4.6 0 1 0-9.2 0M1016.2 646.6a4.6 4.6 0 1 0 9.2 0a4.6 4.6 0 1 0-9.2 0M1016.2 650.1a4.6 4.6 0 1 0 9.2 0a4.6 4.6 0 1 0-9.2 0M1016.2 653.6a4.6 4.6 0 1 0 9.2 0a4.6 4.6 0 1 0-9.2 0M1016.2 657.1a4.6 4.6 0 1 0 9.2 0a4.6 4.6 0 1 0-9.2 0M1016.2 664.2a4.6 4.6 0 1 0 9.2 0a4.6 4.6 0 1 0-9.2 0M1016.2 671.2a4.6 4.6 0 1 0 9.2 0a4.6 4.6 0 1 0-9.2 0M1016.2 674.7a4.6 4.6 0 1 0 9.2 0a4.6 4.6 0 1 0-9.2 0M1016.2 678.2a4.6 4.6 0 1 0 9.2 0a4.6 4.6 0 1 0-9.2 0M1016.2 681.7a4.6 4.6 0 1 0 9.2 0a4.6 4.6 0 1 0-9.2 0M1016.2 685.2a4.6 4.6 0 1 0 9.2 0a4.6 4.6 0 1 0-9.2 0M1016.2 688.7a4.6 4.6 0 1 0 9.2 0a4.6 4.6 0 1 0-9.2 0M1016.2 692.2a4.6 4.6 0 1 0 9.2 0a4.6 4.6 0 1 0-9.2 0M1017.8 549.0a4.6 4.6 0 1 0 9.2 0a4.6 4.6 0 1 0-9.2 0M1017.8 564.5a4.6 4.6 0 1 0 9.2 0a4.6 4.6 0 1 0-9.2 0M1019.5 455.3a4.6 4.6 0 1 0 9.2 0a4.6 4.6 0 1 0-9.2 0M1019.5 497.8a4.6 4.6 0 1 0 9.2 0a4.6 4.6 0 1 0-9.2 0M1019.5 538.5a4.6 4.6 0 1 0 9.2 0a4.6 4.6 0 1 0-9.2 0M1019.5 555.4a4.6 4.6 0 1 0 9.2 0a4.6 4.6 0 1 0-9.2 0M1019.5 569.4a4.6 4.6 0 1 0 9.2 0a4.6 4.6 0 1 0-9.2 0M1021.1 477.4a4.6 4.6 0 1 0 9.2 0a4.6 4.6 0 1 0-9.2 0M1021.1 490.4a4.6 4.6 0 1 0 9.2 0a4.6 4.6 0 1 0-9.2 0M1021.1 519.5a4.6 4.6 0 1 0 9.2 0a4.6 4.6 0 1 0-9.2 0M1021.1 545.5a4.6 4.6 0 1 0 9.2 0a4.6 4.6 0 1 0-9.2 0M1021.1 559.6a4.6 4.6 0 1 0 9.2 0a4.6 4.6 0 1 0-9.2 0M1022.9 432.5a4.6 4.6 0 1 0 9.2 0a4.6 4.6 0 1 0-9.2 0M1022.9 574.3a4.6 4.6 0 1 0 9.2 0a4.6 4.6 0 1 0-9.2 0M1022.9 579.2a4.6 4.6 0 1 0 9.2 0a4.6 4.6 0 1 0-9.2 0M1022.9 588.7a4.6 4.6 0 1 0 9.2 0a4.6 4.6 0 1 0-9.2 0M1022.9 597.5a4.6 4.6 0 1 0 9.2 0a4.6 4.6 0 1 0-9.2 0M1022.9 601.0a4.6 4.6 0 1 0 9.2 0a4.6 4.6 0 1 0-9.2 0M1022.9 604.5a4.6 4.6 0 1 0 9.2 0a4.6 4.6 0 1 0-9.2 0M1022.9 608.0a4.6 4.6 0 1 0 9.2 0a4.6 4.6 0 1 0-9.2 0M1022.9 615.0a4.6 4.6 0 1 0 9.2 0a4.6 4.6 0 1 0-9.2 0M1022.9 618.5a4.6 4.6 0 1 0 9.2 0a4.6 4.6 0 1 0-9.2 0M1022.9 622.0a4.6 4.6 0 1 0 9.2 0a4.6 4.6 0 1 0-9.2 0M1022.9 625.5a4.6 4.6 0 1 0 9.2 0a4.6 4.6 0 1 0-9.2 0M1022.9 629.1a4.6 4.6 0 1 0 9.2 0a4.6 4.6 0 1 0-9.2 0M1022.9 632.6a4.6 4.6 0 1 0 9.2 0a4.6 4.6 0 1 0-9.2 0M1022.9 636.1a4.6 4.6 0 1 0 9.2 0a4.6 4.6 0 1 0-9.2 0M1022.9 643.1a4.6 4.6 0 1 0 9.2 0a4.6 4.6 0 1 0-9.2 0M1022.9 646.6a4.6 4.6 0 1 0 9.2 0a4.6 4.6 0 1 0-9.2 0M1022.9 650.1a4.6 4.6 0 1 0 9.2 0a4.6 4.6 0 1 0-9.2 0M1022.9 653.6a4.6 4.6 0 1 0 9.2 0a4.6 4.6 0 1 0-9.2 0M1022.9 664.2a4.6 4.6 0 1 0 9.2 0a4.6 4.6 0 1 0-9.2 0M1022.9 667.7a4.6 4.6 0 1 0 9.2 0a4.6 4.6 0 1 0-9.2 0M1022.9 671.2a4.6 4.6 0 1 0 9.2 0a4.6 4.6 0 1 0-9.2 0M1022.9 678.2a4.6 4.6 0 1 0 9.2 0a4.6 4.6 0 1 0-9.2 0M1022.9 681.7a4.6 4.6 0 1 0 9.2 0a4.6 4.6 0 1 0-9.2 0M1022.9 685.2a4.6 4.6 0 1 0 9.2 0a4.6 4.6 0 1 0-9.2 0M1022.9 688.7a4.6 4.6 0 1 0 9.2 0a4.6 4.6 0 1 0-9.2 0M1022.9 692.2a4.6 4.6 0 1 0 9.2 0a4.6 4.6 0 1 0-9.2 0M1022.9 695.8a4.6 4.6 0 1 0 9.2 0a4.6 4.6 0 1 0-9.2 0M1022.9 699.3a4.6 4.6 0 1 0 9.2 0a4.6 4.6 0 1 0-9.2 0M1022.9 706.3a4.6 4.6 0 1 0 9.2 0a4.6 4.6 0 1 0-9.2 0M1024.5 509.0a4.6 4.6 0 1 0 9.2 0a4.6 4.6 0 1 0-9.2 0M1024.5 564.5a4.6 4.6 0 1 0 9.2 0a4.6 4.6 0 1 0-9.2 0M1026.2 455.3a4.6 4.6 0 1 0 9.2 0a4.6 4.6 0 1 0-9.2 0M1026.2 497.8a4.6 4.6 0 1 0 9.2 0a4.6 4.6 0 1 0-9.2 0M1026.2 513.2a4.6 4.6 0 1 0 9.2 0a4.6 4.6 0 1 0-9.2 0M1026.2 524.5a4.6 4.6 0 1 0 9.2 0a4.6 4.6 0 1 0-9.2 0M1026.2 538.5a4.6 4.6 0 1 0 9.2 0a4.6 4.6 0 1 0-9.2 0M1026.2 555.4a4.6 4.6 0 1 0 9.2 0a4.6 4.6 0 1 0-9.2 0M1027.8 477.4a4.6 4.6 0 1 0 9.2 0a4.6 4.6 0 1 0-9.2 0M1027.8 490.4a4.6 4.6 0 1 0 9.2 0a4.6 4.6 0 1 0-9.2 0M1027.8 519.5a4.6 4.6 0 1 0 9.2 0a4.6 4.6 0 1 0-9.2 0M1027.8 545.5a4.6 4.6 0 1 0 9.2 0a4.6 4.6 0 1 0-9.2 0M1027.8 559.6a4.6 4.6 0 1 0 9.2 0a4.6 4.6 0 1 0-9.2 0M1029.6 432.5a4.6 4.6 0 1 0 9.2 0a4.6 4.6 0 1 0-9.2 0M1029.6 472.9a4.6 4.6 0 1 0 9.2 0a4.6 4.6 0 1 0-9.2 0M1029.6 574.3a4.6 4.6 0 1 0 9.2 0a4.6 4.6 0 1 0-9.2 0M1029.6 579.2a4.6 4.6 0 1 0 9.2 0a4.6 4.6 0 1 0-9.2 0M1029.6 588.7a4.6 4.6 0 1 0 9.2 0a4.6 4.6 0 1 0-9.2 0M1029.6 597.5a4.6 4.6 0 1 0 9.2 0a4.6 4.6 0 1 0-9.2 0M1029.6 601.0a4.6 4.6 0 1 0 9.2 0a4.6 4.6 0 1 0-9.2 0M1029.6 604.5a4.6 4.6 0 1 0 9.2 0a4.6 4.6 0 1 0-9.2 0M1029.6 608.0a4.6 4.6 0 1 0 9.2 0a4.6 4.6 0 1 0-9.2 0M1029.6 615.0a4.6 4.6 0 1 0 9.2 0a4.6 4.6 0 1 0-9.2 0M1029.6 622.0a4.6 4.6 0 1 0 9.2 0a4.6 4.6 0 1 0-9.2 0M1029.6 632.6a4.6 4.6 0 1 0 9.2 0a4.6 4.6 0 1 0-9.2 0M1029.6 636.1a4.6 4.6 0 1 0 9.2 0a4.6 4.6 0 1 0-9.2 0M1029.6 643.1a4.6 4.6 0 1 0 9.2 0a4.6 4.6 0 1 0-9.2 0M1029.6 646.6a4.6 4.6 0 1 0 9.2 0a4.6 4.6 0 1 0-9.2 0M1029.6 650.1a4.6 4.6 0 1 0 9.2 0a4.6 4.6 0 1 0-9.2 0M1029.6 653.6a4.6 4.6 0 1 0 9.2 0a4.6 4.6 0 1 0-9.2 0M1029.6 657.1a4.6 4.6 0 1 0 9.2 0a4.6 4.6 0 1 0-9.2 0M1029.6 664.2a4.6 4.6 0 1 0 9.2 0a4.6 4.6 0 1 0-9.2 0M1029.6 667.7a4.6 4.6 0 1 0 9.2 0a4.6 4.6 0 1 0-9.2 0M1029.6 671.2a4.6 4.6 0 1 0 9.2 0a4.6 4.6 0 1 0-9.2 0M1029.6 678.2a4.6 4.6 0 1 0 9.2 0a4.6 4.6 0 1 0-9.2 0M1029.6 685.2a4.6 4.6 0 1 0 9.2 0a4.6 4.6 0 1 0-9.2 0M1029.6 688.7a4.6 4.6 0 1 0 9.2 0a4.6 4.6 0 1 0-9.2 0M1029.6 692.2a4.6 4.6 0 1 0 9.2 0a4.6 4.6 0 1 0-9.2 0M1029.6 695.8a4.6 4.6 0 1 0 9.2 0a4.6 4.6 0 1 0-9.2 0M1029.6 699.3a4.6 4.6 0 1 0 9.2 0a4.6 4.6 0 1 0-9.2 0M1029.6 706.3a4.6 4.6 0 1 0 9.2 0a4.6 4.6 0 1 0-9.2 0M1031.2 509.0a4.6 4.6 0 1 0 9.2 0a4.6 4.6 0 1 0-9.2 0M1032.9 455.3a4.6 4.6 0 1 0 9.2 0a4.6 4.6 0 1 0-9.2 0M1032.9 497.8a4.6 4.6 0 1 0 9.2 0a4.6 4.6 0 1 0-9.2 0M1032.9 524.5a4.6 4.6 0 1 0 9.2 0a4.6 4.6 0 1 0-9.2 0M1032.9 538.5a4.6 4.6 0 1 0 9.2 0a4.6 4.6 0 1 0-9.2 0M1032.9 555.4a4.6 4.6 0 1 0 9.2 0a4.6 4.6 0 1 0-9.2 0M1032.9 569.4a4.6 4.6 0 1 0 9.2 0a4.6 4.6 0 1 0-9.2 0M1034.5 477.4a4.6 4.6 0 1 0 9.2 0a4.6 4.6 0 1 0-9.2 0M1034.5 490.4a4.6 4.6 0 1 0 9.2 0a4.6 4.6 0 1 0-9.2 0M1034.5 519.5a4.6 4.6 0 1 0 9.2 0a4.6 4.6 0 1 0-9.2 0M1034.5 545.5a4.6 4.6 0 1 0 9.2 0a4.6 4.6 0 1 0-9.2 0M1034.5 559.6a4.6 4.6 0 1 0 9.2 0a4.6 4.6 0 1 0-9.2 0M1036.1 444.8a4.6 4.6 0 1 0 9.2 0a4.6 4.6 0 1 0-9.2 0M1036.3 432.5a4.6 4.6 0 1 0 9.2 0a4.6 4.6 0 1 0-9.2 0M1036.3 529.0a4.6 4.6 0 1 0 9.2 0a4.6 4.6 0 1 0-9.2 0M1036.3 574.3a4.6 4.6 0 1 0 9.2 0a4.6 4.6 0 1 0-9.2 0M1036.3 579.2a4.6 4.6 0 1 0 9.2 0a4.6 4.6 0 1 0-9.2 0M1036.3 588.7a4.6 4.6 0 1 0 9.2 0a4.6 4.6 0 1 0-9.2 0M1036.3 601.0a4.6 4.6 0 1 0 9.2 0a4.6 4.6 0 1 0-9.2 0M1036.3 611.5a4.6 4.6 0 1 0 9.2 0a4.6 4.6 0 1 0-9.2 0M1036.3 622.0a4.6 4.6 0 1 0 9.2 0a4.6 4.6 0 1 0-9.2 0M1036.3 625.5a4.6 4.6 0 1 0 9.2 0a4.6 4.6 0 1 0-9.2 0M1036.3 632.6a4.6 4.6 0 1 0 9.2 0a4.6 4.6 0 1 0-9.2 0M1036.3 636.1a4.6 4.6 0 1 0 9.2 0a4.6 4.6 0 1 0-9.2 0M1036.3 639.6a4.6 4.6 0 1 0 9.2 0a4.6 4.6 0 1 0-9.2 0M1036.3 643.1a4.6 4.6 0 1 0 9.2 0a4.6 4.6 0 1 0-9.2 0M1036.3 646.6a4.6 4.6 0 1 0 9.2 0a4.6 4.6 0 1 0-9.2 0M1036.3 650.1a4.6 4.6 0 1 0 9.2 0a4.6 4.6 0 1 0-9.2 0M1036.3 653.6a4.6 4.6 0 1 0 9.2 0a4.6 4.6 0 1 0-9.2 0M1036.3 657.1a4.6 4.6 0 1 0 9.2 0a4.6 4.6 0 1 0-9.2 0M1036.3 664.2a4.6 4.6 0 1 0 9.2 0a4.6 4.6 0 1 0-9.2 0M1036.3 671.2a4.6 4.6 0 1 0 9.2 0a4.6 4.6 0 1 0-9.2 0M1036.3 678.2a4.6 4.6 0 1 0 9.2 0a4.6 4.6 0 1 0-9.2 0M1036.3 681.7a4.6 4.6 0 1 0 9.2 0a4.6 4.6 0 1 0-9.2 0M1036.3 685.2a4.6 4.6 0 1 0 9.2 0a4.6 4.6 0 1 0-9.2 0M1036.3 692.2a4.6 4.6 0 1 0 9.2 0a4.6 4.6 0 1 0-9.2 0M1036.3 695.8a4.6 4.6 0 1 0 9.2 0a4.6 4.6 0 1 0-9.2 0M1036.3 699.3a4.6 4.6 0 1 0 9.2 0a4.6 4.6 0 1 0-9.2 0M1037.9 509.0a4.6 4.6 0 1 0 9.2 0a4.6 4.6 0 1 0-9.2 0M1039.6 455.3a4.6 4.6 0 1 0 9.2 0a4.6 4.6 0 1 0-9.2 0M1039.6 497.8a4.6 4.6 0 1 0 9.2 0a4.6 4.6 0 1 0-9.2 0M1039.6 513.2a4.6 4.6 0 1 0 9.2 0a4.6 4.6 0 1 0-9.2 0M1039.6 524.5a4.6 4.6 0 1 0 9.2 0a4.6 4.6 0 1 0-9.2 0M1039.6 538.5a4.6 4.6 0 1 0 9.2 0a4.6 4.6 0 1 0-9.2 0M1039.6 569.4a4.6 4.6 0 1 0 9.2 0a4.6 4.6 0 1 0-9.2 0M1041.2 477.4a4.6 4.6 0 1 0 9.2 0a4.6 4.6 0 1 0-9.2 0M1041.2 490.4a4.6 4.6 0 1 0 9.2 0a4.6 4.6 0 1 0-9.2 0M1041.2 519.5a4.6 4.6 0 1 0 9.2 0a4.6 4.6 0 1 0-9.2 0M1041.2 545.5a4.6 4.6 0 1 0 9.2 0a4.6 4.6 0 1 0-9.2 0M1041.2 559.6a4.6 4.6 0 1 0 9.2 0a4.6 4.6 0 1 0-9.2 0M1043.0 432.5a4.6 4.6 0 1 0 9.2 0a4.6 4.6 0 1 0-9.2 0M1043.0 472.9a4.6 4.6 0 1 0 9.2 0a4.6 4.6 0 1 0-9.2 0M1043.0 529.0a4.6 4.6 0 1 0 9.2 0a4.6 4.6 0 1 0-9.2 0M1043.0 574.3a4.6 4.6 0 1 0 9.2 0a4.6 4.6 0 1 0-9.2 0M1043.0 579.2a4.6 4.6 0 1 0 9.2 0a4.6 4.6 0 1 0-9.2 0M1043.0 588.7a4.6 4.6 0 1 0 9.2 0a4.6 4.6 0 1 0-9.2 0M1043.0 597.5a4.6 4.6 0 1 0 9.2 0a4.6 4.6 0 1 0-9.2 0M1043.0 601.0a4.6 4.6 0 1 0 9.2 0a4.6 4.6 0 1 0-9.2 0M1043.0 604.5a4.6 4.6 0 1 0 9.2 0a4.6 4.6 0 1 0-9.2 0M1043.0 608.0a4.6 4.6 0 1 0 9.2 0a4.6 4.6 0 1 0-9.2 0M1043.0 611.5a4.6 4.6 0 1 0 9.2 0a4.6 4.6 0 1 0-9.2 0M1043.0 615.0a4.6 4.6 0 1 0 9.2 0a4.6 4.6 0 1 0-9.2 0M1043.0 622.0a4.6 4.6 0 1 0 9.2 0a4.6 4.6 0 1 0-9.2 0M1043.0 629.1a4.6 4.6 0 1 0 9.2 0a4.6 4.6 0 1 0-9.2 0M1043.0 636.1a4.6 4.6 0 1 0 9.2 0a4.6 4.6 0 1 0-9.2 0M1043.0 639.6a4.6 4.6 0 1 0 9.2 0a4.6 4.6 0 1 0-9.2 0M1043.0 643.1a4.6 4.6 0 1 0 9.2 0a4.6 4.6 0 1 0-9.2 0M1043.0 650.1a4.6 4.6 0 1 0 9.2 0a4.6 4.6 0 1 0-9.2 0M1043.0 653.6a4.6 4.6 0 1 0 9.2 0a4.6 4.6 0 1 0-9.2 0M1043.0 657.1a4.6 4.6 0 1 0 9.2 0a4.6 4.6 0 1 0-9.2 0M1043.0 660.6a4.6 4.6 0 1 0 9.2 0a4.6 4.6 0 1 0-9.2 0M1043.0 664.2a4.6 4.6 0 1 0 9.2 0a4.6 4.6 0 1 0-9.2 0M1043.0 667.7a4.6 4.6 0 1 0 9.2 0a4.6 4.6 0 1 0-9.2 0M1043.0 671.2a4.6 4.6 0 1 0 9.2 0a4.6 4.6 0 1 0-9.2 0M1043.0 674.7a4.6 4.6 0 1 0 9.2 0a4.6 4.6 0 1 0-9.2 0M1043.0 678.2a4.6 4.6 0 1 0 9.2 0a4.6 4.6 0 1 0-9.2 0M1043.0 681.7a4.6 4.6 0 1 0 9.2 0a4.6 4.6 0 1 0-9.2 0M1043.0 685.2a4.6 4.6 0 1 0 9.2 0a4.6 4.6 0 1 0-9.2 0M1043.0 688.7a4.6 4.6 0 1 0 9.2 0a4.6 4.6 0 1 0-9.2 0M1043.0 692.2a4.6 4.6 0 1 0 9.2 0a4.6 4.6 0 1 0-9.2 0M1043.0 706.3a4.6 4.6 0 1 0 9.2 0a4.6 4.6 0 1 0-9.2 0M1044.6 509.0a4.6 4.6 0 1 0 9.2 0a4.6 4.6 0 1 0-9.2 0M1044.6 549.0a4.6 4.6 0 1 0 9.2 0a4.6 4.6 0 1 0-9.2 0M1046.3 455.3a4.6 4.6 0 1 0 9.2 0a4.6 4.6 0 1 0-9.2 0M1046.3 497.8a4.6 4.6 0 1 0 9.2 0a4.6 4.6 0 1 0-9.2 0M1046.3 524.5a4.6 4.6 0 1 0 9.2 0a4.6 4.6 0 1 0-9.2 0M1046.3 538.5a4.6 4.6 0 1 0 9.2 0a4.6 4.6 0 1 0-9.2 0M1046.3 555.4a4.6 4.6 0 1 0 9.2 0a4.6 4.6 0 1 0-9.2 0M1046.3 569.4a4.6 4.6 0 1 0 9.2 0a4.6 4.6 0 1 0-9.2 0M1047.9 477.4a4.6 4.6 0 1 0 9.2 0a4.6 4.6 0 1 0-9.2 0M1047.9 490.4a4.6 4.6 0 1 0 9.2 0a4.6 4.6 0 1 0-9.2 0M1047.9 519.5a4.6 4.6 0 1 0 9.2 0a4.6 4.6 0 1 0-9.2 0M1047.9 545.5a4.6 4.6 0 1 0 9.2 0a4.6 4.6 0 1 0-9.2 0M1047.9 559.6a4.6 4.6 0 1 0 9.2 0a4.6 4.6 0 1 0-9.2 0M1049.5 444.8a4.6 4.6 0 1 0 9.2 0a4.6 4.6 0 1 0-9.2 0M1049.7 432.5a4.6 4.6 0 1 0 9.2 0a4.6 4.6 0 1 0-9.2 0M1049.7 472.9a4.6 4.6 0 1 0 9.2 0a4.6 4.6 0 1 0-9.2 0M1049.7 529.0a4.6 4.6 0 1 0 9.2 0a4.6 4.6 0 1 0-9.2 0M1049.7 574.3a4.6 4.6 0 1 0 9.2 0a4.6 4.6 0 1 0-9.2 0M1049.7 579.2a4.6 4.6 0 1 0 9.2 0a4.6 4.6 0 1 0-9.2 0M1049.7 588.7a4.6 4.6 0 1 0 9.2 0a4.6 4.6 0 1 0-9.2 0M1049.7 601.0a4.6 4.6 0 1 0 9.2 0a4.6 4.6 0 1 0-9.2 0M1049.7 604.5a4.6 4.6 0 1 0 9.2 0a4.6 4.6 0 1 0-9.2 0M1049.7 608.0a4.6 4.6 0 1 0 9.2 0a4.6 4.6 0 1 0-9.2 0M1049.7 611.5a4.6 4.6 0 1 0 9.2 0a4.6 4.6 0 1 0-9.2 0M1049.7 615.0a4.6 4.6 0 1 0 9.2 0a4.6 4.6 0 1 0-9.2 0M1049.7 618.5a4.6 4.6 0 1 0 9.2 0a4.6 4.6 0 1 0-9.2 0M1049.7 622.0a4.6 4.6 0 1 0 9.2 0a4.6 4.6 0 1 0-9.2 0M1049.7 625.5a4.6 4.6 0 1 0 9.2 0a4.6 4.6 0 1 0-9.2 0M1049.7 629.1a4.6 4.6 0 1 0 9.2 0a4.6 4.6 0 1 0-9.2 0M1049.7 632.6a4.6 4.6 0 1 0 9.2 0a4.6 4.6 0 1 0-9.2 0M1049.7 636.1a4.6 4.6 0 1 0 9.2 0a4.6 4.6 0 1 0-9.2 0M1049.7 650.1a4.6 4.6 0 1 0 9.2 0a4.6 4.6 0 1 0-9.2 0M1049.7 657.1a4.6 4.6 0 1 0 9.2 0a4.6 4.6 0 1 0-9.2 0M1049.7 660.6a4.6 4.6 0 1 0 9.2 0a4.6 4.6 0 1 0-9.2 0M1049.7 664.2a4.6 4.6 0 1 0 9.2 0a4.6 4.6 0 1 0-9.2 0M1049.7 671.2a4.6 4.6 0 1 0 9.2 0a4.6 4.6 0 1 0-9.2 0M1049.7 678.2a4.6 4.6 0 1 0 9.2 0a4.6 4.6 0 1 0-9.2 0M1049.7 685.2a4.6 4.6 0 1 0 9.2 0a4.6 4.6 0 1 0-9.2 0M1049.7 692.2a4.6 4.6 0 1 0 9.2 0a4.6 4.6 0 1 0-9.2 0M1049.7 699.3a4.6 4.6 0 1 0 9.2 0a4.6 4.6 0 1 0-9.2 0M1049.7 706.3a4.6 4.6 0 1 0 9.2 0a4.6 4.6 0 1 0-9.2 0M1051.3 509.0a4.6 4.6 0 1 0 9.2 0a4.6 4.6 0 1 0-9.2 0M1051.3 549.0a4.6 4.6 0 1 0 9.2 0a4.6 4.6 0 1 0-9.2 0M1053.0 455.3a4.6 4.6 0 1 0 9.2 0a4.6 4.6 0 1 0-9.2 0M1053.0 469.4a4.6 4.6 0 1 0 9.2 0a4.6 4.6 0 1 0-9.2 0M1053.0 497.8a4.6 4.6 0 1 0 9.2 0a4.6 4.6 0 1 0-9.2 0M1053.0 524.5a4.6 4.6 0 1 0 9.2 0a4.6 4.6 0 1 0-9.2 0M1053.0 538.5a4.6 4.6 0 1 0 9.2 0a4.6 4.6 0 1 0-9.2 0M1053.0 555.4a4.6 4.6 0 1 0 9.2 0a4.6 4.6 0 1 0-9.2 0M1053.0 569.4a4.6 4.6 0 1 0 9.2 0a4.6 4.6 0 1 0-9.2 0M1054.6 477.4a4.6 4.6 0 1 0 9.2 0a4.6 4.6 0 1 0-9.2 0M1054.6 490.4a4.6 4.6 0 1 0 9.2 0a4.6 4.6 0 1 0-9.2 0M1054.6 519.5a4.6 4.6 0 1 0 9.2 0a4.6 4.6 0 1 0-9.2 0M1054.6 559.6a4.6 4.6 0 1 0 9.2 0a4.6 4.6 0 1 0-9.2 0M1056.4 432.5a4.6 4.6 0 1 0 9.2 0a4.6 4.6 0 1 0-9.2 0M1056.4 472.9a4.6 4.6 0 1 0 9.2 0a4.6 4.6 0 1 0-9.2 0M1056.4 529.0a4.6 4.6 0 1 0 9.2 0a4.6 4.6 0 1 0-9.2 0M1056.4 574.3a4.6 4.6 0 1 0 9.2 0a4.6 4.6 0 1 0-9.2 0M1056.4 579.2a4.6 4.6 0 1 0 9.2 0a4.6 4.6 0 1 0-9.2 0M1056.4 588.7a4.6 4.6 0 1 0 9.2 0a4.6 4.6 0 1 0-9.2 0M1056.4 597.5a4.6 4.6 0 1 0 9.2 0a4.6 4.6 0 1 0-9.2 0M1056.4 601.0a4.6 4.6 0 1 0 9.2 0a4.6 4.6 0 1 0-9.2 0M1056.4 604.5a4.6 4.6 0 1 0 9.2 0a4.6 4.6 0 1 0-9.2 0M1056.4 608.0a4.6 4.6 0 1 0 9.2 0a4.6 4.6 0 1 0-9.2 0M1056.4 615.0a4.6 4.6 0 1 0 9.2 0a4.6 4.6 0 1 0-9.2 0M1056.4 622.0a4.6 4.6 0 1 0 9.2 0a4.6 4.6 0 1 0-9.2 0M1056.4 625.5a4.6 4.6 0 1 0 9.2 0a4.6 4.6 0 1 0-9.2 0M1056.4 629.1a4.6 4.6 0 1 0 9.2 0a4.6 4.6 0 1 0-9.2 0M1056.4 632.6a4.6 4.6 0 1 0 9.2 0a4.6 4.6 0 1 0-9.2 0M1056.4 636.1a4.6 4.6 0 1 0 9.2 0a4.6 4.6 0 1 0-9.2 0M1056.4 643.1a4.6 4.6 0 1 0 9.2 0a4.6 4.6 0 1 0-9.2 0M1056.4 650.1a4.6 4.6 0 1 0 9.2 0a4.6 4.6 0 1 0-9.2 0M1056.4 657.1a4.6 4.6 0 1 0 9.2 0a4.6 4.6 0 1 0-9.2 0M1056.4 664.2a4.6 4.6 0 1 0 9.2 0a4.6 4.6 0 1 0-9.2 0M1056.4 671.2a4.6 4.6 0 1 0 9.2 0a4.6 4.6 0 1 0-9.2 0M1056.4 674.7a4.6 4.6 0 1 0 9.2 0a4.6 4.6 0 1 0-9.2 0M1056.4 678.2a4.6 4.6 0 1 0 9.2 0a4.6 4.6 0 1 0-9.2 0M1056.4 681.7a4.6 4.6 0 1 0 9.2 0a4.6 4.6 0 1 0-9.2 0M1056.4 692.2a4.6 4.6 0 1 0 9.2 0a4.6 4.6 0 1 0-9.2 0M1056.4 695.8a4.6 4.6 0 1 0 9.2 0a4.6 4.6 0 1 0-9.2 0M1056.4 699.3a4.6 4.6 0 1 0 9.2 0a4.6 4.6 0 1 0-9.2 0M1056.4 706.3a4.6 4.6 0 1 0 9.2 0a4.6 4.6 0 1 0-9.2 0M1058.0 509.0a4.6 4.6 0 1 0 9.2 0a4.6 4.6 0 1 0-9.2 0M1058.0 549.0a4.6 4.6 0 1 0 9.2 0a4.6 4.6 0 1 0-9.2 0M1058.0 564.5a4.6 4.6 0 1 0 9.2 0a4.6 4.6 0 1 0-9.2 0M1059.7 455.3a4.6 4.6 0 1 0 9.2 0a4.6 4.6 0 1 0-9.2 0M1059.7 469.4a4.6 4.6 0 1 0 9.2 0a4.6 4.6 0 1 0-9.2 0M1059.7 497.8a4.6 4.6 0 1 0 9.2 0a4.6 4.6 0 1 0-9.2 0M1059.7 513.2a4.6 4.6 0 1 0 9.2 0a4.6 4.6 0 1 0-9.2 0M1059.7 524.5a4.6 4.6 0 1 0 9.2 0a4.6 4.6 0 1 0-9.2 0M1059.7 538.5a4.6 4.6 0 1 0 9.2 0a4.6 4.6 0 1 0-9.2 0M1059.7 555.4a4.6 4.6 0 1 0 9.2 0a4.6 4.6 0 1 0-9.2 0M1059.7 569.4a4.6 4.6 0 1 0 9.2 0a4.6 4.6 0 1 0-9.2 0M1061.3 477.4a4.6 4.6 0 1 0 9.2 0a4.6 4.6 0 1 0-9.2 0M1061.3 490.4a4.6 4.6 0 1 0 9.2 0a4.6 4.6 0 1 0-9.2 0M1061.3 519.5a4.6 4.6 0 1 0 9.2 0a4.6 4.6 0 1 0-9.2 0M1061.3 559.6a4.6 4.6 0 1 0 9.2 0a4.6 4.6 0 1 0-9.2 0M1063.1 432.5a4.6 4.6 0 1 0 9.2 0a4.6 4.6 0 1 0-9.2 0M1063.1 472.9a4.6 4.6 0 1 0 9.2 0a4.6 4.6 0 1 0-9.2 0M1063.1 574.3a4.6 4.6 0 1 0 9.2 0a4.6 4.6 0 1 0-9.2 0M1063.1 579.2a4.6 4.6 0 1 0 9.2 0a4.6 4.6 0 1 0-9.2 0M1063.1 588.7a4.6 4.6 0 1 0 9.2 0a4.6 4.6 0 1 0-9.2 0M1063.1 597.5a4.6 4.6 0 1 0 9.2 0a4.6 4.6 0 1 0-9.2 0M1063.1 601.0a4.6 4.6 0 1 0 9.2 0a4.6 4.6 0 1 0-9.2 0M1063.1 604.5a4.6 4.6 0 1 0 9.2 0a4.6 4.6 0 1 0-9.2 0M1063.1 608.0a4.6 4.6 0 1 0 9.2 0a4.6 4.6 0 1 0-9.2 0M1063.1 611.5a4.6 4.6 0 1 0 9.2 0a4.6 4.6 0 1 0-9.2 0M1063.1 615.0a4.6 4.6 0 1 0 9.2 0a4.6 4.6 0 1 0-9.2 0M1063.1 618.5a4.6 4.6 0 1 0 9.2 0a4.6 4.6 0 1 0-9.2 0M1063.1 622.0a4.6 4.6 0 1 0 9.2 0a4.6 4.6 0 1 0-9.2 0M1063.1 625.5a4.6 4.6 0 1 0 9.2 0a4.6 4.6 0 1 0-9.2 0M1063.1 629.1a4.6 4.6 0 1 0 9.2 0a4.6 4.6 0 1 0-9.2 0M1063.1 636.1a4.6 4.6 0 1 0 9.2 0a4.6 4.6 0 1 0-9.2 0M1063.1 639.6a4.6 4.6 0 1 0 9.2 0a4.6 4.6 0 1 0-9.2 0M1063.1 643.1a4.6 4.6 0 1 0 9.2 0a4.6 4.6 0 1 0-9.2 0M1063.1 646.6a4.6 4.6 0 1 0 9.2 0a4.6 4.6 0 1 0-9.2 0M1063.1 650.1a4.6 4.6 0 1 0 9.2 0a4.6 4.6 0 1 0-9.2 0M1063.1 653.6a4.6 4.6 0 1 0 9.2 0a4.6 4.6 0 1 0-9.2 0M1063.1 657.1a4.6 4.6 0 1 0 9.2 0a4.6 4.6 0 1 0-9.2 0M1063.1 660.6a4.6 4.6 0 1 0 9.2 0a4.6 4.6 0 1 0-9.2 0M1063.1 664.2a4.6 4.6 0 1 0 9.2 0a4.6 4.6 0 1 0-9.2 0M1063.1 671.2a4.6 4.6 0 1 0 9.2 0a4.6 4.6 0 1 0-9.2 0M1063.1 674.7a4.6 4.6 0 1 0 9.2 0a4.6 4.6 0 1 0-9.2 0M1063.1 678.2a4.6 4.6 0 1 0 9.2 0a4.6 4.6 0 1 0-9.2 0M1063.1 681.7a4.6 4.6 0 1 0 9.2 0a4.6 4.6 0 1 0-9.2 0M1063.1 685.2a4.6 4.6 0 1 0 9.2 0a4.6 4.6 0 1 0-9.2 0M1063.1 692.2a4.6 4.6 0 1 0 9.2 0a4.6 4.6 0 1 0-9.2 0M1063.1 699.3a4.6 4.6 0 1 0 9.2 0a4.6 4.6 0 1 0-9.2 0M1064.7 509.0a4.6 4.6 0 1 0 9.2 0a4.6 4.6 0 1 0-9.2 0M1064.7 549.0a4.6 4.6 0 1 0 9.2 0a4.6 4.6 0 1 0-9.2 0M1064.7 564.5a4.6 4.6 0 1 0 9.2 0a4.6 4.6 0 1 0-9.2 0M1066.4 455.3a4.6 4.6 0 1 0 9.2 0a4.6 4.6 0 1 0-9.2 0M1066.4 469.4a4.6 4.6 0 1 0 9.2 0a4.6 4.6 0 1 0-9.2 0M1066.4 497.8a4.6 4.6 0 1 0 9.2 0a4.6 4.6 0 1 0-9.2 0M1066.4 513.2a4.6 4.6 0 1 0 9.2 0a4.6 4.6 0 1 0-9.2 0M1066.4 538.5a4.6 4.6 0 1 0 9.2 0a4.6 4.6 0 1 0-9.2 0M1066.4 555.4a4.6 4.6 0 1 0 9.2 0a4.6 4.6 0 1 0-9.2 0M1067.3 783.5a4.6 4.6 0 1 0 9.2 0a4.6 4.6 0 1 0-9.2 0M1068.0 477.4a4.6 4.6 0 1 0 9.2 0a4.6 4.6 0 1 0-9.2 0M1068.0 490.4a4.6 4.6 0 1 0 9.2 0a4.6 4.6 0 1 0-9.2 0M1068.0 519.5a4.6 4.6 0 1 0 9.2 0a4.6 4.6 0 1 0-9.2 0M1068.0 545.5a4.6 4.6 0 1 0 9.2 0a4.6 4.6 0 1 0-9.2 0M1068.0 559.6a4.6 4.6 0 1 0 9.2 0a4.6 4.6 0 1 0-9.2 0M1069.8 432.5a4.6 4.6 0 1 0 9.2 0a4.6 4.6 0 1 0-9.2 0M1069.8 472.9a4.6 4.6 0 1 0 9.2 0a4.6 4.6 0 1 0-9.2 0M1069.8 574.3a4.6 4.6 0 1 0 9.2 0a4.6 4.6 0 1 0-9.2 0M1069.8 579.2a4.6 4.6 0 1 0 9.2 0a4.6 4.6 0 1 0-9.2 0M1069.8 588.7a4.6 4.6 0 1 0 9.2 0a4.6 4.6 0 1 0-9.2 0M1069.8 597.5a4.6 4.6 0 1 0 9.2 0a4.6 4.6 0 1 0-9.2 0M1069.8 604.5a4.6 4.6 0 1 0 9.2 0a4.6 4.6 0 1 0-9.2 0M1069.8 608.0a4.6 4.6 0 1 0 9.2 0a4.6 4.6 0 1 0-9.2 0M1069.8 611.5a4.6 4.6 0 1 0 9.2 0a4.6 4.6 0 1 0-9.2 0M1069.8 615.0a4.6 4.6 0 1 0 9.2 0a4.6 4.6 0 1 0-9.2 0M1069.8 622.0a4.6 4.6 0 1 0 9.2 0a4.6 4.6 0 1 0-9.2 0M1069.8 629.1a4.6 4.6 0 1 0 9.2 0a4.6 4.6 0 1 0-9.2 0M1069.8 636.1a4.6 4.6 0 1 0 9.2 0a4.6 4.6 0 1 0-9.2 0M1069.8 639.6a4.6 4.6 0 1 0 9.2 0a4.6 4.6 0 1 0-9.2 0M1069.8 643.1a4.6 4.6 0 1 0 9.2 0a4.6 4.6 0 1 0-9.2 0M1069.8 646.6a4.6 4.6 0 1 0 9.2 0a4.6 4.6 0 1 0-9.2 0M1069.8 650.1a4.6 4.6 0 1 0 9.2 0a4.6 4.6 0 1 0-9.2 0M1069.8 657.1a4.6 4.6 0 1 0 9.2 0a4.6 4.6 0 1 0-9.2 0M1069.8 660.6a4.6 4.6 0 1 0 9.2 0a4.6 4.6 0 1 0-9.2 0M1069.8 664.2a4.6 4.6 0 1 0 9.2 0a4.6 4.6 0 1 0-9.2 0M1069.8 671.2a4.6 4.6 0 1 0 9.2 0a4.6 4.6 0 1 0-9.2 0M1069.8 674.7a4.6 4.6 0 1 0 9.2 0a4.6 4.6 0 1 0-9.2 0M1069.8 678.2a4.6 4.6 0 1 0 9.2 0a4.6 4.6 0 1 0-9.2 0M1069.8 681.7a4.6 4.6 0 1 0 9.2 0a4.6 4.6 0 1 0-9.2 0M1069.8 685.2a4.6 4.6 0 1 0 9.2 0a4.6 4.6 0 1 0-9.2 0M1069.8 692.2a4.6 4.6 0 1 0 9.2 0a4.6 4.6 0 1 0-9.2 0M1069.8 695.8a4.6 4.6 0 1 0 9.2 0a4.6 4.6 0 1 0-9.2 0M1069.8 699.3a4.6 4.6 0 1 0 9.2 0a4.6 4.6 0 1 0-9.2 0M1069.8 706.3a4.6 4.6 0 1 0 9.2 0a4.6 4.6 0 1 0-9.2 0M1069.9 444.8a4.6 4.6 0 1 0 9.2 0a4.6 4.6 0 1 0-9.2 0M1071.4 509.0a4.6 4.6 0 1 0 9.2 0a4.6 4.6 0 1 0-9.2 0M1071.4 549.0a4.6 4.6 0 1 0 9.2 0a4.6 4.6 0 1 0-9.2 0M1071.4 564.5a4.6 4.6 0 1 0 9.2 0a4.6 4.6 0 1 0-9.2 0M1073.1 455.3a4.6 4.6 0 1 0 9.2 0a4.6 4.6 0 1 0-9.2 0M1073.1 469.4a4.6 4.6 0 1 0 9.2 0a4.6 4.6 0 1 0-9.2 0M1073.1 497.8a4.6 4.6 0 1 0 9.2 0a4.6 4.6 0 1 0-9.2 0M1073.1 524.5a4.6 4.6 0 1 0 9.2 0a4.6 4.6 0 1 0-9.2 0M1073.1 538.5a4.6 4.6 0 1 0 9.2 0a4.6 4.6 0 1 0-9.2 0M1073.1 555.4a4.6 4.6 0 1 0 9.2 0a4.6 4.6 0 1 0-9.2 0M1073.1 569.4a4.6 4.6 0 1 0 9.2 0a4.6 4.6 0 1 0-9.2 0M1074.0 783.5a4.6 4.6 0 1 0 9.2 0a4.6 4.6 0 1 0-9.2 0M1074.7 462.3a4.6 4.6 0 1 0 9.2 0a4.6 4.6 0 1 0-9.2 0M1074.7 477.4a4.6 4.6 0 1 0 9.2 0a4.6 4.6 0 1 0-9.2 0M1074.7 490.4a4.6 4.6 0 1 0 9.2 0a4.6 4.6 0 1 0-9.2 0M1074.7 519.5a4.6 4.6 0 1 0 9.2 0a4.6 4.6 0 1 0-9.2 0M1074.7 545.5a4.6 4.6 0 1 0 9.2 0a4.6 4.6 0 1 0-9.2 0M1074.7 559.6a4.6 4.6 0 1 0 9.2 0a4.6 4.6 0 1 0-9.2 0M1076.5 432.5a4.6 4.6 0 1 0 9.2 0a4.6 4.6 0 1 0-9.2 0M1076.5 529.0a4.6 4.6 0 1 0 9.2 0a4.6 4.6 0 1 0-9.2 0M1076.5 574.3a4.6 4.6 0 1 0 9.2 0a4.6 4.6 0 1 0-9.2 0M1076.5 579.2a4.6 4.6 0 1 0 9.2 0a4.6 4.6 0 1 0-9.2 0M1076.5 588.7a4.6 4.6 0 1 0 9.2 0a4.6 4.6 0 1 0-9.2 0M1076.5 597.5a4.6 4.6 0 1 0 9.2 0a4.6 4.6 0 1 0-9.2 0M1076.5 601.0a4.6 4.6 0 1 0 9.2 0a4.6 4.6 0 1 0-9.2 0M1076.5 608.0a4.6 4.6 0 1 0 9.2 0a4.6 4.6 0 1 0-9.2 0M1076.5 618.5a4.6 4.6 0 1 0 9.2 0a4.6 4.6 0 1 0-9.2 0M1076.5 622.0a4.6 4.6 0 1 0 9.2 0a4.6 4.6 0 1 0-9.2 0M1076.5 625.5a4.6 4.6 0 1 0 9.2 0a4.6 4.6 0 1 0-9.2 0M1076.5 629.1a4.6 4.6 0 1 0 9.2 0a4.6 4.6 0 1 0-9.2 0M1076.5 632.6a4.6 4.6 0 1 0 9.2 0a4.6 4.6 0 1 0-9.2 0M1076.5 636.1a4.6 4.6 0 1 0 9.2 0a4.6 4.6 0 1 0-9.2 0M1076.5 643.1a4.6 4.6 0 1 0 9.2 0a4.6 4.6 0 1 0-9.2 0M1076.5 646.6a4.6 4.6 0 1 0 9.2 0a4.6 4.6 0 1 0-9.2 0M1076.5 650.1a4.6 4.6 0 1 0 9.2 0a4.6 4.6 0 1 0-9.2 0M1076.5 657.1a4.6 4.6 0 1 0 9.2 0a4.6 4.6 0 1 0-9.2 0M1076.5 664.2a4.6 4.6 0 1 0 9.2 0a4.6 4.6 0 1 0-9.2 0M1076.5 667.7a4.6 4.6 0 1 0 9.2 0a4.6 4.6 0 1 0-9.2 0M1076.5 671.2a4.6 4.6 0 1 0 9.2 0a4.6 4.6 0 1 0-9.2 0M1076.5 678.2a4.6 4.6 0 1 0 9.2 0a4.6 4.6 0 1 0-9.2 0M1076.5 685.2a4.6 4.6 0 1 0 9.2 0a4.6 4.6 0 1 0-9.2 0M1076.5 688.7a4.6 4.6 0 1 0 9.2 0a4.6 4.6 0 1 0-9.2 0M1076.5 692.2a4.6 4.6 0 1 0 9.2 0a4.6 4.6 0 1 0-9.2 0M1076.5 695.8a4.6 4.6 0 1 0 9.2 0a4.6 4.6 0 1 0-9.2 0M1076.5 699.3a4.6 4.6 0 1 0 9.2 0a4.6 4.6 0 1 0-9.2 0M1076.5 709.8a4.6 4.6 0 1 0 9.2 0a4.6 4.6 0 1 0-9.2 0M1076.5 713.3a4.6 4.6 0 1 0 9.2 0a4.6 4.6 0 1 0-9.2 0M1076.5 720.3a4.6 4.6 0 1 0 9.2 0a4.6 4.6 0 1 0-9.2 0M1078.1 509.0a4.6 4.6 0 1 0 9.2 0a4.6 4.6 0 1 0-9.2 0M1078.1 549.0a4.6 4.6 0 1 0 9.2 0a4.6 4.6 0 1 0-9.2 0M1078.1 564.5a4.6 4.6 0 1 0 9.2 0a4.6 4.6 0 1 0-9.2 0M1079.8 469.4a4.6 4.6 0 1 0 9.2 0a4.6 4.6 0 1 0-9.2 0M1079.8 497.8a4.6 4.6 0 1 0 9.2 0a4.6 4.6 0 1 0-9.2 0M1079.8 513.2a4.6 4.6 0 1 0 9.2 0a4.6 4.6 0 1 0-9.2 0M1079.8 524.5a4.6 4.6 0 1 0 9.2 0a4.6 4.6 0 1 0-9.2 0M1079.8 538.5a4.6 4.6 0 1 0 9.2 0a4.6 4.6 0 1 0-9.2 0M1079.8 569.4a4.6 4.6 0 1 0 9.2 0a4.6 4.6 0 1 0-9.2 0M1080.7 783.5a4.6 4.6 0 1 0 9.2 0a4.6 4.6 0 1 0-9.2 0M1081.4 462.3a4.6 4.6 0 1 0 9.2 0a4.6 4.6 0 1 0-9.2 0M1081.4 477.4a4.6 4.6 0 1 0 9.2 0a4.6 4.6 0 1 0-9.2 0M1081.4 519.5a4.6 4.6 0 1 0 9.2 0a4.6 4.6 0 1 0-9.2 0M1081.4 545.5a4.6 4.6 0 1 0 9.2 0a4.6 4.6 0 1 0-9.2 0M1081.4 559.6a4.6 4.6 0 1 0 9.2 0a4.6 4.6 0 1 0-9.2 0M1083.2 432.5a4.6 4.6 0 1 0 9.2 0a4.6 4.6 0 1 0-9.2 0M1083.2 472.9a4.6 4.6 0 1 0 9.2 0a4.6 4.6 0 1 0-9.2 0M1083.2 529.0a4.6 4.6 0 1 0 9.2 0a4.6 4.6 0 1 0-9.2 0M1083.2 574.3a4.6 4.6 0 1 0 9.2 0a4.6 4.6 0 1 0-9.2 0M1083.2 579.2a4.6 4.6 0 1 0 9.2 0a4.6 4.6 0 1 0-9.2 0M1083.2 588.7a4.6 4.6 0 1 0 9.2 0a4.6 4.6 0 1 0-9.2 0M1083.2 601.0a4.6 4.6 0 1 0 9.2 0a4.6 4.6 0 1 0-9.2 0M1083.2 608.0a4.6 4.6 0 1 0 9.2 0a4.6 4.6 0 1 0-9.2 0M1083.2 611.5a4.6 4.6 0 1 0 9.2 0a4.6 4.6 0 1 0-9.2 0M1083.2 615.0a4.6 4.6 0 1 0 9.2 0a4.6 4.6 0 1 0-9.2 0M1083.2 622.0a4.6 4.6 0 1 0 9.2 0a4.6 4.6 0 1 0-9.2 0M1083.2 625.5a4.6 4.6 0 1 0 9.2 0a4.6 4.6 0 1 0-9.2 0M1083.2 629.1a4.6 4.6 0 1 0 9.2 0a4.6 4.6 0 1 0-9.2 0M1083.2 632.6a4.6 4.6 0 1 0 9.2 0a4.6 4.6 0 1 0-9.2 0M1083.2 636.1a4.6 4.6 0 1 0 9.2 0a4.6 4.6 0 1 0-9.2 0M1083.2 639.6a4.6 4.6 0 1 0 9.2 0a4.6 4.6 0 1 0-9.2 0M1083.2 643.1a4.6 4.6 0 1 0 9.2 0a4.6 4.6 0 1 0-9.2 0M1083.2 646.6a4.6 4.6 0 1 0 9.2 0a4.6 4.6 0 1 0-9.2 0M1083.2 650.1a4.6 4.6 0 1 0 9.2 0a4.6 4.6 0 1 0-9.2 0M1083.2 653.6a4.6 4.6 0 1 0 9.2 0a4.6 4.6 0 1 0-9.2 0M1083.2 657.1a4.6 4.6 0 1 0 9.2 0a4.6 4.6 0 1 0-9.2 0M1083.2 667.7a4.6 4.6 0 1 0 9.2 0a4.6 4.6 0 1 0-9.2 0M1083.2 671.2a4.6 4.6 0 1 0 9.2 0a4.6 4.6 0 1 0-9.2 0M1083.2 674.7a4.6 4.6 0 1 0 9.2 0a4.6 4.6 0 1 0-9.2 0M1083.2 678.2a4.6 4.6 0 1 0 9.2 0a4.6 4.6 0 1 0-9.2 0M1083.2 685.2a4.6 4.6 0 1 0 9.2 0a4.6 4.6 0 1 0-9.2 0M1083.2 692.2a4.6 4.6 0 1 0 9.2 0a4.6 4.6 0 1 0-9.2 0M1083.2 695.8a4.6 4.6 0 1 0 9.2 0a4.6 4.6 0 1 0-9.2 0M1083.2 699.3a4.6 4.6 0 1 0 9.2 0a4.6 4.6 0 1 0-9.2 0M1083.2 702.8a4.6 4.6 0 1 0 9.2 0a4.6 4.6 0 1 0-9.2 0M1083.2 706.3a4.6 4.6 0 1 0 9.2 0a4.6 4.6 0 1 0-9.2 0M1083.2 709.8a4.6 4.6 0 1 0 9.2 0a4.6 4.6 0 1 0-9.2 0M1083.2 713.3a4.6 4.6 0 1 0 9.2 0a4.6 4.6 0 1 0-9.2 0M1083.2 716.8a4.6 4.6 0 1 0 9.2 0a4.6 4.6 0 1 0-9.2 0M1083.2 720.3a4.6 4.6 0 1 0 9.2 0a4.6 4.6 0 1 0-9.2 0M1083.2 727.3a4.6 4.6 0 1 0 9.2 0a4.6 4.6 0 1 0-9.2 0M1084.8 451.8a4.6 4.6 0 1 0 9.2 0a4.6 4.6 0 1 0-9.2 0M1084.8 492.9a4.6 4.6 0 1 0 9.2 0a4.6 4.6 0 1 0-9.2 0M1084.8 509.0a4.6 4.6 0 1 0 9.2 0a4.6 4.6 0 1 0-9.2 0M1084.8 564.5a4.6 4.6 0 1 0 9.2 0a4.6 4.6 0 1 0-9.2 0M1086.5 469.4a4.6 4.6 0 1 0 9.2 0a4.6 4.6 0 1 0-9.2 0M1086.5 484.4a4.6 4.6 0 1 0 9.2 0a4.6 4.6 0 1 0-9.2 0M1086.5 497.8a4.6 4.6 0 1 0 9.2 0a4.6 4.6 0 1 0-9.2 0M1086.5 513.2a4.6 4.6 0 1 0 9.2 0a4.6 4.6 0 1 0-9.2 0M1086.5 538.5a4.6 4.6 0 1 0 9.2 0a4.6 4.6 0 1 0-9.2 0M1087.4 783.5a4.6 4.6 0 1 0 9.2 0a4.6 4.6 0 1 0-9.2 0M1088.1 477.4a4.6 4.6 0 1 0 9.2 0a4.6 4.6 0 1 0-9.2 0M1088.1 519.5a4.6 4.6 0 1 0 9.2 0a4.6 4.6 0 1 0-9.2 0M1088.1 545.5a4.6 4.6 0 1 0 9.2 0a4.6 4.6 0 1 0-9.2 0M1088.1 559.6a4.6 4.6 0 1 0 9.2 0a4.6 4.6 0 1 0-9.2 0M1089.9 432.5a4.6 4.6 0 1 0 9.2 0a4.6 4.6 0 1 0-9.2 0M1089.9 472.9a4.6 4.6 0 1 0 9.2 0a4.6 4.6 0 1 0-9.2 0M1089.9 529.0a4.6 4.6 0 1 0 9.2 0a4.6 4.6 0 1 0-9.2 0M1089.9 574.3a4.6 4.6 0 1 0 9.2 0a4.6 4.6 0 1 0-9.2 0M1089.9 579.2a4.6 4.6 0 1 0 9.2 0a4.6 4.6 0 1 0-9.2 0M1089.9 588.7a4.6 4.6 0 1 0 9.2 0a4.6 4.6 0 1 0-9.2 0M1089.9 597.5a4.6 4.6 0 1 0 9.2 0a4.6 4.6 0 1 0-9.2 0M1089.9 601.0a4.6 4.6 0 1 0 9.2 0a4.6 4.6 0 1 0-9.2 0M1089.9 604.5a4.6 4.6 0 1 0 9.2 0a4.6 4.6 0 1 0-9.2 0M1089.9 608.0a4.6 4.6 0 1 0 9.2 0a4.6 4.6 0 1 0-9.2 0M1089.9 611.5a4.6 4.6 0 1 0 9.2 0a4.6 4.6 0 1 0-9.2 0M1089.9 615.0a4.6 4.6 0 1 0 9.2 0a4.6 4.6 0 1 0-9.2 0M1089.9 622.0a4.6 4.6 0 1 0 9.2 0a4.6 4.6 0 1 0-9.2 0M1089.9 629.1a4.6 4.6 0 1 0 9.2 0a4.6 4.6 0 1 0-9.2 0M1089.9 632.6a4.6 4.6 0 1 0 9.2 0a4.6 4.6 0 1 0-9.2 0M1089.9 636.1a4.6 4.6 0 1 0 9.2 0a4.6 4.6 0 1 0-9.2 0M1089.9 643.1a4.6 4.6 0 1 0 9.2 0a4.6 4.6 0 1 0-9.2 0M1089.9 650.1a4.6 4.6 0 1 0 9.2 0a4.6 4.6 0 1 0-9.2 0M1089.9 657.1a4.6 4.6 0 1 0 9.2 0a4.6 4.6 0 1 0-9.2 0M1089.9 664.2a4.6 4.6 0 1 0 9.2 0a4.6 4.6 0 1 0-9.2 0M1089.9 667.7a4.6 4.6 0 1 0 9.2 0a4.6 4.6 0 1 0-9.2 0M1089.9 671.2a4.6 4.6 0 1 0 9.2 0a4.6 4.6 0 1 0-9.2 0M1089.9 678.2a4.6 4.6 0 1 0 9.2 0a4.6 4.6 0 1 0-9.2 0M1089.9 688.7a4.6 4.6 0 1 0 9.2 0a4.6 4.6 0 1 0-9.2 0M1089.9 692.2a4.6 4.6 0 1 0 9.2 0a4.6 4.6 0 1 0-9.2 0M1089.9 695.8a4.6 4.6 0 1 0 9.2 0a4.6 4.6 0 1 0-9.2 0M1089.9 699.3a4.6 4.6 0 1 0 9.2 0a4.6 4.6 0 1 0-9.2 0M1089.9 702.8a4.6 4.6 0 1 0 9.2 0a4.6 4.6 0 1 0-9.2 0M1089.9 709.8a4.6 4.6 0 1 0 9.2 0a4.6 4.6 0 1 0-9.2 0M1089.9 713.3a4.6 4.6 0 1 0 9.2 0a4.6 4.6 0 1 0-9.2 0M1089.9 720.3a4.6 4.6 0 1 0 9.2 0a4.6 4.6 0 1 0-9.2 0M1089.9 727.3a4.6 4.6 0 1 0 9.2 0a4.6 4.6 0 1 0-9.2 0M1091.5 451.8a4.6 4.6 0 1 0 9.2 0a4.6 4.6 0 1 0-9.2 0M1091.5 492.9a4.6 4.6 0 1 0 9.2 0a4.6 4.6 0 1 0-9.2 0M1093.2 469.4a4.6 4.6 0 1 0 9.2 0a4.6 4.6 0 1 0-9.2 0M1093.2 484.4a4.6 4.6 0 1 0 9.2 0a4.6 4.6 0 1 0-9.2 0M1093.2 497.8a4.6 4.6 0 1 0 9.2 0a4.6 4.6 0 1 0-9.2 0M1093.2 513.2a4.6 4.6 0 1 0 9.2 0a4.6 4.6 0 1 0-9.2 0M1093.2 538.5a4.6 4.6 0 1 0 9.2 0a4.6 4.6 0 1 0-9.2 0M1093.2 569.4a4.6 4.6 0 1 0 9.2 0a4.6 4.6 0 1 0-9.2 0M1094.1 783.5a4.6 4.6 0 1 0 9.2 0a4.6 4.6 0 1 0-9.2 0M1094.8 519.5a4.6 4.6 0 1 0 9.2 0a4.6 4.6 0 1 0-9.2 0M1094.8 545.5a4.6 4.6 0 1 0 9.2 0a4.6 4.6 0 1 0-9.2 0M1094.8 559.6a4.6 4.6 0 1 0 9.2 0a4.6 4.6 0 1 0-9.2 0M1096.6 432.5a4.6 4.6 0 1 0 9.2 0a4.6 4.6 0 1 0-9.2 0M1096.6 529.0a4.6 4.6 0 1 0 9.2 0a4.6 4.6 0 1 0-9.2 0M1096.6 574.3a4.6 4.6 0 1 0 9.2 0a4.6 4.6 0 1 0-9.2 0M1096.6 579.2a4.6 4.6 0 1 0 9.2 0a4.6 4.6 0 1 0-9.2 0M1096.6 588.7a4.6 4.6 0 1 0 9.2 0a4.6 4.6 0 1 0-9.2 0M1096.6 604.5a4.6 4.6 0 1 0 9.2 0a4.6 4.6 0 1 0-9.2 0M1096.6 608.0a4.6 4.6 0 1 0 9.2 0a4.6 4.6 0 1 0-9.2 0M1096.6 615.0a4.6 4.6 0 1 0 9.2 0a4.6 4.6 0 1 0-9.2 0M1096.6 618.5a4.6 4.6 0 1 0 9.2 0a4.6 4.6 0 1 0-9.2 0M1096.6 622.0a4.6 4.6 0 1 0 9.2 0a4.6 4.6 0 1 0-9.2 0M1096.6 625.5a4.6 4.6 0 1 0 9.2 0a4.6 4.6 0 1 0-9.2 0M1096.6 629.1a4.6 4.6 0 1 0 9.2 0a4.6 4.6 0 1 0-9.2 0M1096.6 632.6a4.6 4.6 0 1 0 9.2 0a4.6 4.6 0 1 0-9.2 0M1096.6 636.1a4.6 4.6 0 1 0 9.2 0a4.6 4.6 0 1 0-9.2 0M1096.6 639.6a4.6 4.6 0 1 0 9.2 0a4.6 4.6 0 1 0-9.2 0M1096.6 643.1a4.6 4.6 0 1 0 9.2 0a4.6 4.6 0 1 0-9.2 0M1096.6 650.1a4.6 4.6 0 1 0 9.2 0a4.6 4.6 0 1 0-9.2 0M1096.6 657.1a4.6 4.6 0 1 0 9.2 0a4.6 4.6 0 1 0-9.2 0M1096.6 660.6a4.6 4.6 0 1 0 9.2 0a4.6 4.6 0 1 0-9.2 0M1096.6 664.2a4.6 4.6 0 1 0 9.2 0a4.6 4.6 0 1 0-9.2 0M1096.6 674.7a4.6 4.6 0 1 0 9.2 0a4.6 4.6 0 1 0-9.2 0M1096.6 678.2a4.6 4.6 0 1 0 9.2 0a4.6 4.6 0 1 0-9.2 0M1096.6 681.7a4.6 4.6 0 1 0 9.2 0a4.6 4.6 0 1 0-9.2 0M1096.6 685.2a4.6 4.6 0 1 0 9.2 0a4.6 4.6 0 1 0-9.2 0M1096.6 692.2a4.6 4.6 0 1 0 9.2 0a4.6 4.6 0 1 0-9.2 0M1096.6 695.8a4.6 4.6 0 1 0 9.2 0a4.6 4.6 0 1 0-9.2 0M1096.6 699.3a4.6 4.6 0 1 0 9.2 0a4.6 4.6 0 1 0-9.2 0M1096.6 706.3a4.6 4.6 0 1 0 9.2 0a4.6 4.6 0 1 0-9.2 0M1096.6 713.3a4.6 4.6 0 1 0 9.2 0a4.6 4.6 0 1 0-9.2 0M1098.2 451.8a4.6 4.6 0 1 0 9.2 0a4.6 4.6 0 1 0-9.2 0M1098.2 492.9a4.6 4.6 0 1 0 9.2 0a4.6 4.6 0 1 0-9.2 0M1098.2 509.0a4.6 4.6 0 1 0 9.2 0a4.6 4.6 0 1 0-9.2 0M1098.2 549.0a4.6 4.6 0 1 0 9.2 0a4.6 4.6 0 1 0-9.2 0M1098.2 564.5a4.6 4.6 0 1 0 9.2 0a4.6 4.6 0 1 0-9.2 0M1099.9 469.4a4.6 4.6 0 1 0 9.2 0a4.6 4.6 0 1 0-9.2 0M1099.9 484.4a4.6 4.6 0 1 0 9.2 0a4.6 4.6 0 1 0-9.2 0M1099.9 497.8a4.6 4.6 0 1 0 9.2 0a4.6 4.6 0 1 0-9.2 0M1099.9 513.2a4.6 4.6 0 1 0 9.2 0a4.6 4.6 0 1 0-9.2 0M1099.9 538.5a4.6 4.6 0 1 0 9.2 0a4.6 4.6 0 1 0-9.2 0M1099.9 555.4a4.6 4.6 0 1 0 9.2 0a4.6 4.6 0 1 0-9.2 0M1099.9 569.4a4.6 4.6 0 1 0 9.2 0a4.6 4.6 0 1 0-9.2 0M1100.8 783.5a4.6 4.6 0 1 0 9.2 0a4.6 4.6 0 1 0-9.2 0M1101.5 519.5a4.6 4.6 0 1 0 9.2 0a4.6 4.6 0 1 0-9.2 0M1101.5 545.5a4.6 4.6 0 1 0 9.2 0a4.6 4.6 0 1 0-9.2 0M1101.5 559.6a4.6 4.6 0 1 0 9.2 0a4.6 4.6 0 1 0-9.2 0M1103.3 432.5a4.6 4.6 0 1 0 9.2 0a4.6 4.6 0 1 0-9.2 0M1103.3 515.3a4.6 4.6 0 1 0 9.2 0a4.6 4.6 0 1 0-9.2 0M1103.3 530.1a4.6 4.6 0 1 0 9.2 0a4.6 4.6 0 1 0-9.2 0M1103.3 543.4a4.6 4.6 0 1 0 9.2 0a4.6 4.6 0 1 0-9.2 0M1103.3 558.2a4.6 4.6 0 1 0 9.2 0a4.6 4.6 0 1 0-9.2 0M1103.3 572.2a4.6 4.6 0 1 0 9.2 0a4.6 4.6 0 1 0-9.2 0M1103.3 574.3a4.6 4.6 0 1 0 9.2 0a4.6 4.6 0 1 0-9.2 0M1103.3 579.2a4.6 4.6 0 1 0 9.2 0a4.6 4.6 0 1 0-9.2 0M1103.3 585.9a4.6 4.6 0 1 0 9.2 0a4.6 4.6 0 1 0-9.2 0M1103.3 588.7a4.6 4.6 0 1 0 9.2 0a4.6 4.6 0 1 0-9.2 0M1103.3 595.7a4.6 4.6 0 1 0 9.2 0a4.6 4.6 0 1 0-9.2 0M1103.3 597.5a4.6 4.6 0 1 0 9.2 0a4.6 4.6 0 1 0-9.2 0M1103.3 601.0a4.6 4.6 0 1 0 9.2 0a4.6 4.6 0 1 0-9.2 0M1103.3 604.5a4.6 4.6 0 1 0 9.2 0a4.6 4.6 0 1 0-9.2 0M1103.3 608.0a4.6 4.6 0 1 0 9.2 0a4.6 4.6 0 1 0-9.2 0M1103.3 611.5a4.6 4.6 0 1 0 9.2 0a4.6 4.6 0 1 0-9.2 0M1103.3 615.0a4.6 4.6 0 1 0 9.2 0a4.6 4.6 0 1 0-9.2 0M1103.3 618.5a4.6 4.6 0 1 0 9.2 0a4.6 4.6 0 1 0-9.2 0M1103.3 622.0a4.6 4.6 0 1 0 9.2 0a4.6 4.6 0 1 0-9.2 0M1103.3 625.5a4.6 4.6 0 1 0 9.2 0a4.6 4.6 0 1 0-9.2 0M1103.3 629.1a4.6 4.6 0 1 0 9.2 0a4.6 4.6 0 1 0-9.2 0M1103.3 632.6a4.6 4.6 0 1 0 9.2 0a4.6 4.6 0 1 0-9.2 0M1103.3 636.1a4.6 4.6 0 1 0 9.2 0a4.6 4.6 0 1 0-9.2 0M1103.3 639.6a4.6 4.6 0 1 0 9.2 0a4.6 4.6 0 1 0-9.2 0M1103.3 643.1a4.6 4.6 0 1 0 9.2 0a4.6 4.6 0 1 0-9.2 0M1103.3 646.6a4.6 4.6 0 1 0 9.2 0a4.6 4.6 0 1 0-9.2 0M1103.3 650.1a4.6 4.6 0 1 0 9.2 0a4.6 4.6 0 1 0-9.2 0M1103.3 657.1a4.6 4.6 0 1 0 9.2 0a4.6 4.6 0 1 0-9.2 0M1103.3 660.6a4.6 4.6 0 1 0 9.2 0a4.6 4.6 0 1 0-9.2 0M1103.3 667.7a4.6 4.6 0 1 0 9.2 0a4.6 4.6 0 1 0-9.2 0M1103.3 671.2a4.6 4.6 0 1 0 9.2 0a4.6 4.6 0 1 0-9.2 0M1103.3 674.7a4.6 4.6 0 1 0 9.2 0a4.6 4.6 0 1 0-9.2 0M1103.3 678.2a4.6 4.6 0 1 0 9.2 0a4.6 4.6 0 1 0-9.2 0M1103.3 681.7a4.6 4.6 0 1 0 9.2 0a4.6 4.6 0 1 0-9.2 0M1103.3 685.2a4.6 4.6 0 1 0 9.2 0a4.6 4.6 0 1 0-9.2 0M1103.3 692.2a4.6 4.6 0 1 0 9.2 0a4.6 4.6 0 1 0-9.2 0M1103.3 699.3a4.6 4.6 0 1 0 9.2 0a4.6 4.6 0 1 0-9.2 0M1103.3 706.3a4.6 4.6 0 1 0 9.2 0a4.6 4.6 0 1 0-9.2 0M1103.3 713.3a4.6 4.6 0 1 0 9.2 0a4.6 4.6 0 1 0-9.2 0M1103.3 716.8a4.6 4.6 0 1 0 9.2 0a4.6 4.6 0 1 0-9.2 0M1103.3 720.3a4.6 4.6 0 1 0 9.2 0a4.6 4.6 0 1 0-9.2 0M1103.3 723.8a4.6 4.6 0 1 0 9.2 0a4.6 4.6 0 1 0-9.2 0M1103.3 737.9a4.6 4.6 0 1 0 9.2 0a4.6 4.6 0 1 0-9.2 0M1104.9 451.8a4.6 4.6 0 1 0 9.2 0a4.6 4.6 0 1 0-9.2 0M1104.9 522.7a4.6 4.6 0 1 0 9.2 0a4.6 4.6 0 1 0-9.2 0M1104.9 550.8a4.6 4.6 0 1 0 9.2 0a4.6 4.6 0 1 0-9.2 0M1104.9 564.5a4.6 4.6 0 1 0 9.2 0a4.6 4.6 0 1 0-9.2 0M1104.9 565.2a4.6 4.6 0 1 0 9.2 0a4.6 4.6 0 1 0-9.2 0M1106.6 469.4a4.6 4.6 0 1 0 9.2 0a4.6 4.6 0 1 0-9.2 0M1106.6 484.4a4.6 4.6 0 1 0 9.2 0a4.6 4.6 0 1 0-9.2 0M1106.6 497.8a4.6 4.6 0 1 0 9.2 0a4.6 4.6 0 1 0-9.2 0M1106.6 538.5a4.6 4.6 0 1 0 9.2 0a4.6 4.6 0 1 0-9.2 0M1108.2 559.6a4.6 4.6 0 1 0 9.2 0a4.6 4.6 0 1 0-9.2 0M1110.0 432.5a4.6 4.6 0 1 0 9.2 0a4.6 4.6 0 1 0-9.2 0M1110.0 515.3a4.6 4.6 0 1 0 9.2 0a4.6 4.6 0 1 0-9.2 0M1110.0 530.1a4.6 4.6 0 1 0 9.2 0a4.6 4.6 0 1 0-9.2 0M1110.0 543.4a4.6 4.6 0 1 0 9.2 0a4.6 4.6 0 1 0-9.2 0M1110.0 558.2a4.6 4.6 0 1 0 9.2 0a4.6 4.6 0 1 0-9.2 0M1110.0 572.2a4.6 4.6 0 1 0 9.2 0a4.6 4.6 0 1 0-9.2 0M1110.0 579.2a4.6 4.6 0 1 0 9.2 0a4.6 4.6 0 1 0-9.2 0M1110.0 585.9a4.6 4.6 0 1 0 9.2 0a4.6 4.6 0 1 0-9.2 0M1110.0 595.7a4.6 4.6 0 1 0 9.2 0a4.6 4.6 0 1 0-9.2 0M1110.0 597.5a4.6 4.6 0 1 0 9.2 0a4.6 4.6 0 1 0-9.2 0M1110.0 601.0a4.6 4.6 0 1 0 9.2 0a4.6 4.6 0 1 0-9.2 0M1110.0 604.5a4.6 4.6 0 1 0 9.2 0a4.6 4.6 0 1 0-9.2 0M1110.0 608.0a4.6 4.6 0 1 0 9.2 0a4.6 4.6 0 1 0-9.2 0M1110.0 611.5a4.6 4.6 0 1 0 9.2 0a4.6 4.6 0 1 0-9.2 0M1110.0 615.0a4.6 4.6 0 1 0 9.2 0a4.6 4.6 0 1 0-9.2 0M1110.0 618.5a4.6 4.6 0 1 0 9.2 0a4.6 4.6 0 1 0-9.2 0M1110.0 622.0a4.6 4.6 0 1 0 9.2 0a4.6 4.6 0 1 0-9.2 0M1110.0 625.5a4.6 4.6 0 1 0 9.2 0a4.6 4.6 0 1 0-9.2 0M1110.0 629.1a4.6 4.6 0 1 0 9.2 0a4.6 4.6 0 1 0-9.2 0M1110.0 632.6a4.6 4.6 0 1 0 9.2 0a4.6 4.6 0 1 0-9.2 0M1110.0 636.1a4.6 4.6 0 1 0 9.2 0a4.6 4.6 0 1 0-9.2 0M1110.0 639.6a4.6 4.6 0 1 0 9.2 0a4.6 4.6 0 1 0-9.2 0M1110.0 643.1a4.6 4.6 0 1 0 9.2 0a4.6 4.6 0 1 0-9.2 0M1110.0 650.1a4.6 4.6 0 1 0 9.2 0a4.6 4.6 0 1 0-9.2 0M1110.0 653.6a4.6 4.6 0 1 0 9.2 0a4.6 4.6 0 1 0-9.2 0M1110.0 660.6a4.6 4.6 0 1 0 9.2 0a4.6 4.6 0 1 0-9.2 0M1110.0 664.2a4.6 4.6 0 1 0 9.2 0a4.6 4.6 0 1 0-9.2 0M1110.0 671.2a4.6 4.6 0 1 0 9.2 0a4.6 4.6 0 1 0-9.2 0M1110.0 674.7a4.6 4.6 0 1 0 9.2 0a4.6 4.6 0 1 0-9.2 0M1110.0 678.2a4.6 4.6 0 1 0 9.2 0a4.6 4.6 0 1 0-9.2 0M1110.0 681.7a4.6 4.6 0 1 0 9.2 0a4.6 4.6 0 1 0-9.2 0M1110.0 685.2a4.6 4.6 0 1 0 9.2 0a4.6 4.6 0 1 0-9.2 0M1110.0 688.7a4.6 4.6 0 1 0 9.2 0a4.6 4.6 0 1 0-9.2 0M1110.0 692.2a4.6 4.6 0 1 0 9.2 0a4.6 4.6 0 1 0-9.2 0M1110.0 695.8a4.6 4.6 0 1 0 9.2 0a4.6 4.6 0 1 0-9.2 0M1110.0 699.3a4.6 4.6 0 1 0 9.2 0a4.6 4.6 0 1 0-9.2 0M1110.0 706.3a4.6 4.6 0 1 0 9.2 0a4.6 4.6 0 1 0-9.2 0M1110.0 713.3a4.6 4.6 0 1 0 9.2 0a4.6 4.6 0 1 0-9.2 0M1110.0 720.3a4.6 4.6 0 1 0 9.2 0a4.6 4.6 0 1 0-9.2 0M1110.0 727.3a4.6 4.6 0 1 0 9.2 0a4.6 4.6 0 1 0-9.2 0M1111.6 451.8a4.6 4.6 0 1 0 9.2 0a4.6 4.6 0 1 0-9.2 0M1111.6 522.7a4.6 4.6 0 1 0 9.2 0a4.6 4.6 0 1 0-9.2 0M1111.6 536.7a4.6 4.6 0 1 0 9.2 0a4.6 4.6 0 1 0-9.2 0M1111.6 565.2a4.6 4.6 0 1 0 9.2 0a4.6 4.6 0 1 0-9.2 0M1113.3 469.4a4.6 4.6 0 1 0 9.2 0a4.6 4.6 0 1 0-9.2 0M1113.3 484.4a4.6 4.6 0 1 0 9.2 0a4.6 4.6 0 1 0-9.2 0M1116.7 432.5a4.6 4.6 0 1 0 9.2 0a4.6 4.6 0 1 0-9.2 0M1116.7 500.9a4.6 4.6 0 1 0 9.2 0a4.6 4.6 0 1 0-9.2 0M1116.7 515.3a4.6 4.6 0 1 0 9.2 0a4.6 4.6 0 1 0-9.2 0M1116.7 530.1a4.6 4.6 0 1 0 9.2 0a4.6 4.6 0 1 0-9.2 0M1116.7 543.4a4.6 4.6 0 1 0 9.2 0a4.6 4.6 0 1 0-9.2 0M1116.7 558.2a4.6 4.6 0 1 0 9.2 0a4.6 4.6 0 1 0-9.2 0M1116.7 572.2a4.6 4.6 0 1 0 9.2 0a4.6 4.6 0 1 0-9.2 0M1116.7 579.2a4.6 4.6 0 1 0 9.2 0a4.6 4.6 0 1 0-9.2 0M1116.7 585.9a4.6 4.6 0 1 0 9.2 0a4.6 4.6 0 1 0-9.2 0M1116.7 595.7a4.6 4.6 0 1 0 9.2 0a4.6 4.6 0 1 0-9.2 0M1116.7 597.5a4.6 4.6 0 1 0 9.2 0a4.6 4.6 0 1 0-9.2 0M1116.7 601.0a4.6 4.6 0 1 0 9.2 0a4.6 4.6 0 1 0-9.2 0M1116.7 604.5a4.6 4.6 0 1 0 9.2 0a4.6 4.6 0 1 0-9.2 0M1116.7 608.0a4.6 4.6 0 1 0 9.2 0a4.6 4.6 0 1 0-9.2 0M1116.7 611.5a4.6 4.6 0 1 0 9.2 0a4.6 4.6 0 1 0-9.2 0M1116.7 618.5a4.6 4.6 0 1 0 9.2 0a4.6 4.6 0 1 0-9.2 0M1116.7 622.0a4.6 4.6 0 1 0 9.2 0a4.6 4.6 0 1 0-9.2 0M1116.7 625.5a4.6 4.6 0 1 0 9.2 0a4.6 4.6 0 1 0-9.2 0M1116.7 636.1a4.6 4.6 0 1 0 9.2 0a4.6 4.6 0 1 0-9.2 0M1116.7 639.6a4.6 4.6 0 1 0 9.2 0a4.6 4.6 0 1 0-9.2 0M1116.7 643.1a4.6 4.6 0 1 0 9.2 0a4.6 4.6 0 1 0-9.2 0M1116.7 650.1a4.6 4.6 0 1 0 9.2 0a4.6 4.6 0 1 0-9.2 0M1116.7 657.1a4.6 4.6 0 1 0 9.2 0a4.6 4.6 0 1 0-9.2 0M1116.7 664.2a4.6 4.6 0 1 0 9.2 0a4.6 4.6 0 1 0-9.2 0M1116.7 667.7a4.6 4.6 0 1 0 9.2 0a4.6 4.6 0 1 0-9.2 0M1116.7 671.2a4.6 4.6 0 1 0 9.2 0a4.6 4.6 0 1 0-9.2 0M1116.7 678.2a4.6 4.6 0 1 0 9.2 0a4.6 4.6 0 1 0-9.2 0M1116.7 685.2a4.6 4.6 0 1 0 9.2 0a4.6 4.6 0 1 0-9.2 0M1116.7 692.2a4.6 4.6 0 1 0 9.2 0a4.6 4.6 0 1 0-9.2 0M1116.7 695.8a4.6 4.6 0 1 0 9.2 0a4.6 4.6 0 1 0-9.2 0M1116.7 699.3a4.6 4.6 0 1 0 9.2 0a4.6 4.6 0 1 0-9.2 0M1116.7 702.8a4.6 4.6 0 1 0 9.2 0a4.6 4.6 0 1 0-9.2 0M1116.7 706.3a4.6 4.6 0 1 0 9.2 0a4.6 4.6 0 1 0-9.2 0M1116.7 713.3a4.6 4.6 0 1 0 9.2 0a4.6 4.6 0 1 0-9.2 0M1116.7 716.8a4.6 4.6 0 1 0 9.2 0a4.6 4.6 0 1 0-9.2 0M1116.7 720.3a4.6 4.6 0 1 0 9.2 0a4.6 4.6 0 1 0-9.2 0M1116.7 723.8a4.6 4.6 0 1 0 9.2 0a4.6 4.6 0 1 0-9.2 0M1116.7 727.3a4.6 4.6 0 1 0 9.2 0a4.6 4.6 0 1 0-9.2 0M1116.7 730.9a4.6 4.6 0 1 0 9.2 0a4.6 4.6 0 1 0-9.2 0M1116.7 734.4a4.6 4.6 0 1 0 9.2 0a4.6 4.6 0 1 0-9.2 0M1118.3 451.8a4.6 4.6 0 1 0 9.2 0a4.6 4.6 0 1 0-9.2 0M1118.3 507.6a4.6 4.6 0 1 0 9.2 0a4.6 4.6 0 1 0-9.2 0M1118.3 522.7a4.6 4.6 0 1 0 9.2 0a4.6 4.6 0 1 0-9.2 0M1118.3 536.7a4.6 4.6 0 1 0 9.2 0a4.6 4.6 0 1 0-9.2 0M1118.3 565.2a4.6 4.6 0 1 0 9.2 0a4.6 4.6 0 1 0-9.2 0M1120.0 469.4a4.6 4.6 0 1 0 9.2 0a4.6 4.6 0 1 0-9.2 0M1120.0 484.4a4.6 4.6 0 1 0 9.2 0a4.6 4.6 0 1 0-9.2 0M1123.4 432.5a4.6 4.6 0 1 0 9.2 0a4.6 4.6 0 1 0-9.2 0M1123.4 500.9a4.6 4.6 0 1 0 9.2 0a4.6 4.6 0 1 0-9.2 0M1123.4 515.3a4.6 4.6 0 1 0 9.2 0a4.6 4.6 0 1 0-9.2 0M1123.4 530.1a4.6 4.6 0 1 0 9.2 0a4.6 4.6 0 1 0-9.2 0M1123.4 543.4a4.6 4.6 0 1 0 9.2 0a4.6 4.6 0 1 0-9.2 0M1123.4 558.2a4.6 4.6 0 1 0 9.2 0a4.6 4.6 0 1 0-9.2 0M1123.4 572.2a4.6 4.6 0 1 0 9.2 0a4.6 4.6 0 1 0-9.2 0M1123.4 579.2a4.6 4.6 0 1 0 9.2 0a4.6 4.6 0 1 0-9.2 0M1123.4 585.9a4.6 4.6 0 1 0 9.2 0a4.6 4.6 0 1 0-9.2 0M1123.4 595.7a4.6 4.6 0 1 0 9.2 0a4.6 4.6 0 1 0-9.2 0M1123.4 597.5a4.6 4.6 0 1 0 9.2 0a4.6 4.6 0 1 0-9.2 0M1123.4 601.0a4.6 4.6 0 1 0 9.2 0a4.6 4.6 0 1 0-9.2 0M1123.4 604.5a4.6 4.6 0 1 0 9.2 0a4.6 4.6 0 1 0-9.2 0M1123.4 611.5a4.6 4.6 0 1 0 9.2 0a4.6 4.6 0 1 0-9.2 0M1123.4 615.0a4.6 4.6 0 1 0 9.2 0a4.6 4.6 0 1 0-9.2 0M1123.4 618.5a4.6 4.6 0 1 0 9.2 0a4.6 4.6 0 1 0-9.2 0M1123.4 622.0a4.6 4.6 0 1 0 9.2 0a4.6 4.6 0 1 0-9.2 0M1123.4 629.1a4.6 4.6 0 1 0 9.2 0a4.6 4.6 0 1 0-9.2 0M1123.4 636.1a4.6 4.6 0 1 0 9.2 0a4.6 4.6 0 1 0-9.2 0M1123.4 639.6a4.6 4.6 0 1 0 9.2 0a4.6 4.6 0 1 0-9.2 0M1123.4 643.1a4.6 4.6 0 1 0 9.2 0a4.6 4.6 0 1 0-9.2 0M1123.4 646.6a4.6 4.6 0 1 0 9.2 0a4.6 4.6 0 1 0-9.2 0M1123.4 650.1a4.6 4.6 0 1 0 9.2 0a4.6 4.6 0 1 0-9.2 0M1123.4 657.1a4.6 4.6 0 1 0 9.2 0a4.6 4.6 0 1 0-9.2 0M1123.4 660.6a4.6 4.6 0 1 0 9.2 0a4.6 4.6 0 1 0-9.2 0M1123.4 667.7a4.6 4.6 0 1 0 9.2 0a4.6 4.6 0 1 0-9.2 0M1123.4 671.2a4.6 4.6 0 1 0 9.2 0a4.6 4.6 0 1 0-9.2 0M1123.4 674.7a4.6 4.6 0 1 0 9.2 0a4.6 4.6 0 1 0-9.2 0M1123.4 678.2a4.6 4.6 0 1 0 9.2 0a4.6 4.6 0 1 0-9.2 0M1123.4 681.7a4.6 4.6 0 1 0 9.2 0a4.6 4.6 0 1 0-9.2 0M1123.4 685.2a4.6 4.6 0 1 0 9.2 0a4.6 4.6 0 1 0-9.2 0M1123.4 692.2a4.6 4.6 0 1 0 9.2 0a4.6 4.6 0 1 0-9.2 0M1123.4 699.3a4.6 4.6 0 1 0 9.2 0a4.6 4.6 0 1 0-9.2 0M1123.4 702.8a4.6 4.6 0 1 0 9.2 0a4.6 4.6 0 1 0-9.2 0M1123.4 706.3a4.6 4.6 0 1 0 9.2 0a4.6 4.6 0 1 0-9.2 0M1123.4 709.8a4.6 4.6 0 1 0 9.2 0a4.6 4.6 0 1 0-9.2 0M1123.4 713.3a4.6 4.6 0 1 0 9.2 0a4.6 4.6 0 1 0-9.2 0M1123.4 716.8a4.6 4.6 0 1 0 9.2 0a4.6 4.6 0 1 0-9.2 0M1123.4 723.8a4.6 4.6 0 1 0 9.2 0a4.6 4.6 0 1 0-9.2 0M1123.4 727.3a4.6 4.6 0 1 0 9.2 0a4.6 4.6 0 1 0-9.2 0M1123.4 734.4a4.6 4.6 0 1 0 9.2 0a4.6 4.6 0 1 0-9.2 0M1125.0 451.8a4.6 4.6 0 1 0 9.2 0a4.6 4.6 0 1 0-9.2 0M1125.0 492.9a4.6 4.6 0 1 0 9.2 0a4.6 4.6 0 1 0-9.2 0M1125.0 536.7a4.6 4.6 0 1 0 9.2 0a4.6 4.6 0 1 0-9.2 0M1125.0 550.8a4.6 4.6 0 1 0 9.2 0a4.6 4.6 0 1 0-9.2 0M1125.0 565.2a4.6 4.6 0 1 0 9.2 0a4.6 4.6 0 1 0-9.2 0M1126.7 469.4a4.6 4.6 0 1 0 9.2 0a4.6 4.6 0 1 0-9.2 0M1126.7 484.4a4.6 4.6 0 1 0 9.2 0a4.6 4.6 0 1 0-9.2 0M1129.8 754.4a4.6 4.6 0 1 0 9.2 0a4.6 4.6 0 1 0-9.2 0M1130.1 432.5a4.6 4.6 0 1 0 9.2 0a4.6 4.6 0 1 0-9.2 0M1130.1 500.9a4.6 4.6 0 1 0 9.2 0a4.6 4.6 0 1 0-9.2 0M1130.1 515.3a4.6 4.6 0 1 0 9.2 0a4.6 4.6 0 1 0-9.2 0M1130.1 530.1a4.6 4.6 0 1 0 9.2 0a4.6 4.6 0 1 0-9.2 0M1130.1 543.4a4.6 4.6 0 1 0 9.2 0a4.6 4.6 0 1 0-9.2 0M1130.1 558.2a4.6 4.6 0 1 0 9.2 0a4.6 4.6 0 1 0-9.2 0M1130.1 572.2a4.6 4.6 0 1 0 9.2 0a4.6 4.6 0 1 0-9.2 0M1130.1 579.2a4.6 4.6 0 1 0 9.2 0a4.6 4.6 0 1 0-9.2 0M1130.1 585.9a4.6 4.6 0 1 0 9.2 0a4.6 4.6 0 1 0-9.2 0M1130.1 595.7a4.6 4.6 0 1 0 9.2 0a4.6 4.6 0 1 0-9.2 0M1130.1 601.0a4.6 4.6 0 1 0 9.2 0a4.6 4.6 0 1 0-9.2 0M1130.1 604.5a4.6 4.6 0 1 0 9.2 0a4.6 4.6 0 1 0-9.2 0M1130.1 608.0a4.6 4.6 0 1 0 9.2 0a4.6 4.6 0 1 0-9.2 0M1130.1 611.5a4.6 4.6 0 1 0 9.2 0a4.6 4.6 0 1 0-9.2 0M1130.1 615.0a4.6 4.6 0 1 0 9.2 0a4.6 4.6 0 1 0-9.2 0M1130.1 622.0a4.6 4.6 0 1 0 9.2 0a4.6 4.6 0 1 0-9.2 0M1130.1 625.5a4.6 4.6 0 1 0 9.2 0a4.6 4.6 0 1 0-9.2 0M1130.1 629.1a4.6 4.6 0 1 0 9.2 0a4.6 4.6 0 1 0-9.2 0M1130.1 632.6a4.6 4.6 0 1 0 9.2 0a4.6 4.6 0 1 0-9.2 0M1130.1 636.1a4.6 4.6 0 1 0 9.2 0a4.6 4.6 0 1 0-9.2 0M1130.1 646.6a4.6 4.6 0 1 0 9.2 0a4.6 4.6 0 1 0-9.2 0M1130.1 650.1a4.6 4.6 0 1 0 9.2 0a4.6 4.6 0 1 0-9.2 0M1130.1 653.6a4.6 4.6 0 1 0 9.2 0a4.6 4.6 0 1 0-9.2 0M1130.1 657.1a4.6 4.6 0 1 0 9.2 0a4.6 4.6 0 1 0-9.2 0M1130.1 664.2a4.6 4.6 0 1 0 9.2 0a4.6 4.6 0 1 0-9.2 0M1130.1 667.7a4.6 4.6 0 1 0 9.2 0a4.6 4.6 0 1 0-9.2 0M1130.1 671.2a4.6 4.6 0 1 0 9.2 0a4.6 4.6 0 1 0-9.2 0M1130.1 674.7a4.6 4.6 0 1 0 9.2 0a4.6 4.6 0 1 0-9.2 0M1130.1 678.2a4.6 4.6 0 1 0 9.2 0a4.6 4.6 0 1 0-9.2 0M1130.1 681.7a4.6 4.6 0 1 0 9.2 0a4.6 4.6 0 1 0-9.2 0M1130.1 685.2a4.6 4.6 0 1 0 9.2 0a4.6 4.6 0 1 0-9.2 0M1130.1 688.7a4.6 4.6 0 1 0 9.2 0a4.6 4.6 0 1 0-9.2 0M1130.1 692.2a4.6 4.6 0 1 0 9.2 0a4.6 4.6 0 1 0-9.2 0M1130.1 699.3a4.6 4.6 0 1 0 9.2 0a4.6 4.6 0 1 0-9.2 0M1130.1 702.8a4.6 4.6 0 1 0 9.2 0a4.6 4.6 0 1 0-9.2 0M1130.1 706.3a4.6 4.6 0 1 0 9.2 0a4.6 4.6 0 1 0-9.2 0M1130.1 709.8a4.6 4.6 0 1 0 9.2 0a4.6 4.6 0 1 0-9.2 0M1130.1 713.3a4.6 4.6 0 1 0 9.2 0a4.6 4.6 0 1 0-9.2 0M1130.1 716.8a4.6 4.6 0 1 0 9.2 0a4.6 4.6 0 1 0-9.2 0M1130.1 720.3a4.6 4.6 0 1 0 9.2 0a4.6 4.6 0 1 0-9.2 0M1130.1 727.3a4.6 4.6 0 1 0 9.2 0a4.6 4.6 0 1 0-9.2 0M1131.7 451.8a4.6 4.6 0 1 0 9.2 0a4.6 4.6 0 1 0-9.2 0M1131.7 522.7a4.6 4.6 0 1 0 9.2 0a4.6 4.6 0 1 0-9.2 0M1131.7 536.7a4.6 4.6 0 1 0 9.2 0a4.6 4.6 0 1 0-9.2 0M1131.7 550.8a4.6 4.6 0 1 0 9.2 0a4.6 4.6 0 1 0-9.2 0M1131.7 565.2a4.6 4.6 0 1 0 9.2 0a4.6 4.6 0 1 0-9.2 0M1133.4 484.4a4.6 4.6 0 1 0 9.2 0a4.6 4.6 0 1 0-9.2 0M1135.1 462.3a4.6 4.6 0 1 0 9.2 0a4.6 4.6 0 1 0-9.2 0M1136.1 748.4a4.6 4.6 0 1 0 9.2 0a4.6 4.6 0 1 0-9.2 0M1136.8 432.5a4.6 4.6 0 1 0 9.2 0a4.6 4.6 0 1 0-9.2 0M1136.8 500.9a4.6 4.6 0 1 0 9.2 0a4.6 4.6 0 1 0-9.2 0M1136.8 515.3a4.6 4.6 0 1 0 9.2 0a4.6 4.6 0 1 0-9.2 0M1136.8 530.1a4.6 4.6 0 1 0 9.2 0a4.6 4.6 0 1 0-9.2 0M1136.8 543.4a4.6 4.6 0 1 0 9.2 0a4.6 4.6 0 1 0-9.2 0M1136.8 558.2a4.6 4.6 0 1 0 9.2 0a4.6 4.6 0 1 0-9.2 0M1136.8 572.2a4.6 4.6 0 1 0 9.2 0a4.6 4.6 0 1 0-9.2 0M1136.8 579.2a4.6 4.6 0 1 0 9.2 0a4.6 4.6 0 1 0-9.2 0M1136.8 585.9a4.6 4.6 0 1 0 9.2 0a4.6 4.6 0 1 0-9.2 0M1136.8 595.7a4.6 4.6 0 1 0 9.2 0a4.6 4.6 0 1 0-9.2 0M1136.8 597.5a4.6 4.6 0 1 0 9.2 0a4.6 4.6 0 1 0-9.2 0M1136.8 604.5a4.6 4.6 0 1 0 9.2 0a4.6 4.6 0 1 0-9.2 0M1136.8 608.0a4.6 4.6 0 1 0 9.2 0a4.6 4.6 0 1 0-9.2 0M1136.8 611.5a4.6 4.6 0 1 0 9.2 0a4.6 4.6 0 1 0-9.2 0M1136.8 615.0a4.6 4.6 0 1 0 9.2 0a4.6 4.6 0 1 0-9.2 0M1136.8 618.5a4.6 4.6 0 1 0 9.2 0a4.6 4.6 0 1 0-9.2 0M1136.8 622.0a4.6 4.6 0 1 0 9.2 0a4.6 4.6 0 1 0-9.2 0M1136.8 625.5a4.6 4.6 0 1 0 9.2 0a4.6 4.6 0 1 0-9.2 0M1136.8 629.1a4.6 4.6 0 1 0 9.2 0a4.6 4.6 0 1 0-9.2 0M1136.8 632.6a4.6 4.6 0 1 0 9.2 0a4.6 4.6 0 1 0-9.2 0M1136.8 636.1a4.6 4.6 0 1 0 9.2 0a4.6 4.6 0 1 0-9.2 0M1136.8 639.6a4.6 4.6 0 1 0 9.2 0a4.6 4.6 0 1 0-9.2 0M1136.8 646.6a4.6 4.6 0 1 0 9.2 0a4.6 4.6 0 1 0-9.2 0M1136.8 653.6a4.6 4.6 0 1 0 9.2 0a4.6 4.6 0 1 0-9.2 0M1136.8 657.1a4.6 4.6 0 1 0 9.2 0a4.6 4.6 0 1 0-9.2 0M1136.8 664.2a4.6 4.6 0 1 0 9.2 0a4.6 4.6 0 1 0-9.2 0M1136.8 671.2a4.6 4.6 0 1 0 9.2 0a4.6 4.6 0 1 0-9.2 0M1136.8 674.7a4.6 4.6 0 1 0 9.2 0a4.6 4.6 0 1 0-9.2 0M1136.8 678.2a4.6 4.6 0 1 0 9.2 0a4.6 4.6 0 1 0-9.2 0M1136.8 685.2a4.6 4.6 0 1 0 9.2 0a4.6 4.6 0 1 0-9.2 0M1136.8 688.7a4.6 4.6 0 1 0 9.2 0a4.6 4.6 0 1 0-9.2 0M1136.8 692.2a4.6 4.6 0 1 0 9.2 0a4.6 4.6 0 1 0-9.2 0M1136.8 695.8a4.6 4.6 0 1 0 9.2 0a4.6 4.6 0 1 0-9.2 0M1136.8 699.3a4.6 4.6 0 1 0 9.2 0a4.6 4.6 0 1 0-9.2 0M1136.8 702.8a4.6 4.6 0 1 0 9.2 0a4.6 4.6 0 1 0-9.2 0M1136.8 706.3a4.6 4.6 0 1 0 9.2 0a4.6 4.6 0 1 0-9.2 0M1136.8 709.8a4.6 4.6 0 1 0 9.2 0a4.6 4.6 0 1 0-9.2 0M1136.8 713.3a4.6 4.6 0 1 0 9.2 0a4.6 4.6 0 1 0-9.2 0M1136.8 716.8a4.6 4.6 0 1 0 9.2 0a4.6 4.6 0 1 0-9.2 0M1136.8 720.3a4.6 4.6 0 1 0 9.2 0a4.6 4.6 0 1 0-9.2 0M1138.4 451.8a4.6 4.6 0 1 0 9.2 0a4.6 4.6 0 1 0-9.2 0M1138.4 536.7a4.6 4.6 0 1 0 9.2 0a4.6 4.6 0 1 0-9.2 0M1138.4 550.8a4.6 4.6 0 1 0 9.2 0a4.6 4.6 0 1 0-9.2 0M1138.4 565.2a4.6 4.6 0 1 0 9.2 0a4.6 4.6 0 1 0-9.2 0M1140.1 469.4a4.6 4.6 0 1 0 9.2 0a4.6 4.6 0 1 0-9.2 0M1140.1 484.4a4.6 4.6 0 1 0 9.2 0a4.6 4.6 0 1 0-9.2 0M1141.8 462.3a4.6 4.6 0 1 0 9.2 0a4.6 4.6 0 1 0-9.2 0M1143.5 432.5a4.6 4.6 0 1 0 9.2 0a4.6 4.6 0 1 0-9.2 0M1143.5 500.9a4.6 4.6 0 1 0 9.2 0a4.6 4.6 0 1 0-9.2 0M1143.5 515.3a4.6 4.6 0 1 0 9.2 0a4.6 4.6 0 1 0-9.2 0M1143.5 530.1a4.6 4.6 0 1 0 9.2 0a4.6 4.6 0 1 0-9.2 0M1143.5 543.4a4.6 4.6 0 1 0 9.2 0a4.6 4.6 0 1 0-9.2 0M1143.5 558.2a4.6 4.6 0 1 0 9.2 0a4.6 4.6 0 1 0-9.2 0M1143.5 572.2a4.6 4.6 0 1 0 9.2 0a4.6 4.6 0 1 0-9.2 0M1143.5 585.9a4.6 4.6 0 1 0 9.2 0a4.6 4.6 0 1 0-9.2 0M1143.5 595.7a4.6 4.6 0 1 0 9.2 0a4.6 4.6 0 1 0-9.2 0M1143.5 597.5a4.6 4.6 0 1 0 9.2 0a4.6 4.6 0 1 0-9.2 0M1143.5 601.0a4.6 4.6 0 1 0 9.2 0a4.6 4.6 0 1 0-9.2 0M1143.5 608.0a4.6 4.6 0 1 0 9.2 0a4.6 4.6 0 1 0-9.2 0M1143.5 611.5a4.6 4.6 0 1 0 9.2 0a4.6 4.6 0 1 0-9.2 0M1143.5 615.0a4.6 4.6 0 1 0 9.2 0a4.6 4.6 0 1 0-9.2 0M1143.5 618.5a4.6 4.6 0 1 0 9.2 0a4.6 4.6 0 1 0-9.2 0M1143.5 622.0a4.6 4.6 0 1 0 9.2 0a4.6 4.6 0 1 0-9.2 0M1143.5 625.5a4.6 4.6 0 1 0 9.2 0a4.6 4.6 0 1 0-9.2 0M1143.5 632.6a4.6 4.6 0 1 0 9.2 0a4.6 4.6 0 1 0-9.2 0M1143.5 636.1a4.6 4.6 0 1 0 9.2 0a4.6 4.6 0 1 0-9.2 0M1143.5 643.1a4.6 4.6 0 1 0 9.2 0a4.6 4.6 0 1 0-9.2 0M1143.5 646.6a4.6 4.6 0 1 0 9.2 0a4.6 4.6 0 1 0-9.2 0M1143.5 650.1a4.6 4.6 0 1 0 9.2 0a4.6 4.6 0 1 0-9.2 0M1143.5 657.1a4.6 4.6 0 1 0 9.2 0a4.6 4.6 0 1 0-9.2 0M1143.5 660.6a4.6 4.6 0 1 0 9.2 0a4.6 4.6 0 1 0-9.2 0M1143.5 664.2a4.6 4.6 0 1 0 9.2 0a4.6 4.6 0 1 0-9.2 0M1143.5 667.7a4.6 4.6 0 1 0 9.2 0a4.6 4.6 0 1 0-9.2 0M1143.5 671.2a4.6 4.6 0 1 0 9.2 0a4.6 4.6 0 1 0-9.2 0M1143.5 674.7a4.6 4.6 0 1 0 9.2 0a4.6 4.6 0 1 0-9.2 0M1143.5 678.2a4.6 4.6 0 1 0 9.2 0a4.6 4.6 0 1 0-9.2 0M1143.5 681.7a4.6 4.6 0 1 0 9.2 0a4.6 4.6 0 1 0-9.2 0M1143.5 685.2a4.6 4.6 0 1 0 9.2 0a4.6 4.6 0 1 0-9.2 0M1143.5 692.2a4.6 4.6 0 1 0 9.2 0a4.6 4.6 0 1 0-9.2 0M1143.5 695.8a4.6 4.6 0 1 0 9.2 0a4.6 4.6 0 1 0-9.2 0M1143.5 699.3a4.6 4.6 0 1 0 9.2 0a4.6 4.6 0 1 0-9.2 0M1143.5 706.3a4.6 4.6 0 1 0 9.2 0a4.6 4.6 0 1 0-9.2 0M1143.5 713.3a4.6 4.6 0 1 0 9.2 0a4.6 4.6 0 1 0-9.2 0M1143.5 716.8a4.6 4.6 0 1 0 9.2 0a4.6 4.6 0 1 0-9.2 0M1143.5 720.3a4.6 4.6 0 1 0 9.2 0a4.6 4.6 0 1 0-9.2 0M1143.5 727.3a4.6 4.6 0 1 0 9.2 0a4.6 4.6 0 1 0-9.2 0M1145.1 451.8a4.6 4.6 0 1 0 9.2 0a4.6 4.6 0 1 0-9.2 0M1145.1 507.6a4.6 4.6 0 1 0 9.2 0a4.6 4.6 0 1 0-9.2 0M1145.1 565.2a4.6 4.6 0 1 0 9.2 0a4.6 4.6 0 1 0-9.2 0M1146.8 469.4a4.6 4.6 0 1 0 9.2 0a4.6 4.6 0 1 0-9.2 0M1146.8 484.4a4.6 4.6 0 1 0 9.2 0a4.6 4.6 0 1 0-9.2 0M1150.2 432.5a4.6 4.6 0 1 0 9.2 0a4.6 4.6 0 1 0-9.2 0M1150.2 500.9a4.6 4.6 0 1 0 9.2 0a4.6 4.6 0 1 0-9.2 0M1150.2 515.3a4.6 4.6 0 1 0 9.2 0a4.6 4.6 0 1 0-9.2 0M1150.2 530.1a4.6 4.6 0 1 0 9.2 0a4.6 4.6 0 1 0-9.2 0M1150.2 543.4a4.6 4.6 0 1 0 9.2 0a4.6 4.6 0 1 0-9.2 0M1150.2 558.2a4.6 4.6 0 1 0 9.2 0a4.6 4.6 0 1 0-9.2 0M1150.2 572.2a4.6 4.6 0 1 0 9.2 0a4.6 4.6 0 1 0-9.2 0M1150.2 579.2a4.6 4.6 0 1 0 9.2 0a4.6 4.6 0 1 0-9.2 0M1150.2 585.9a4.6 4.6 0 1 0 9.2 0a4.6 4.6 0 1 0-9.2 0M1150.2 595.7a4.6 4.6 0 1 0 9.2 0a4.6 4.6 0 1 0-9.2 0M1150.2 597.5a4.6 4.6 0 1 0 9.2 0a4.6 4.6 0 1 0-9.2 0M1150.2 601.0a4.6 4.6 0 1 0 9.2 0a4.6 4.6 0 1 0-9.2 0M1150.2 604.5a4.6 4.6 0 1 0 9.2 0a4.6 4.6 0 1 0-9.2 0M1150.2 608.0a4.6 4.6 0 1 0 9.2 0a4.6 4.6 0 1 0-9.2 0M1150.2 611.5a4.6 4.6 0 1 0 9.2 0a4.6 4.6 0 1 0-9.2 0M1150.2 615.0a4.6 4.6 0 1 0 9.2 0a4.6 4.6 0 1 0-9.2 0M1150.2 618.5a4.6 4.6 0 1 0 9.2 0a4.6 4.6 0 1 0-9.2 0M1150.2 622.0a4.6 4.6 0 1 0 9.2 0a4.6 4.6 0 1 0-9.2 0M1150.2 625.5a4.6 4.6 0 1 0 9.2 0a4.6 4.6 0 1 0-9.2 0M1150.2 629.1a4.6 4.6 0 1 0 9.2 0a4.6 4.6 0 1 0-9.2 0M1150.2 636.1a4.6 4.6 0 1 0 9.2 0a4.6 4.6 0 1 0-9.2 0M1150.2 639.6a4.6 4.6 0 1 0 9.2 0a4.6 4.6 0 1 0-9.2 0M1150.2 643.1a4.6 4.6 0 1 0 9.2 0a4.6 4.6 0 1 0-9.2 0M1150.2 646.6a4.6 4.6 0 1 0 9.2 0a4.6 4.6 0 1 0-9.2 0M1150.2 650.1a4.6 4.6 0 1 0 9.2 0a4.6 4.6 0 1 0-9.2 0M1150.2 657.1a4.6 4.6 0 1 0 9.2 0a4.6 4.6 0 1 0-9.2 0M1150.2 664.2a4.6 4.6 0 1 0 9.2 0a4.6 4.6 0 1 0-9.2 0M1150.2 667.7a4.6 4.6 0 1 0 9.2 0a4.6 4.6 0 1 0-9.2 0M1150.2 671.2a4.6 4.6 0 1 0 9.2 0a4.6 4.6 0 1 0-9.2 0M1150.2 678.2a4.6 4.6 0 1 0 9.2 0a4.6 4.6 0 1 0-9.2 0M1150.2 685.2a4.6 4.6 0 1 0 9.2 0a4.6 4.6 0 1 0-9.2 0M1150.2 688.7a4.6 4.6 0 1 0 9.2 0a4.6 4.6 0 1 0-9.2 0M1150.2 692.2a4.6 4.6 0 1 0 9.2 0a4.6 4.6 0 1 0-9.2 0M1150.2 699.3a4.6 4.6 0 1 0 9.2 0a4.6 4.6 0 1 0-9.2 0M1150.2 702.8a4.6 4.6 0 1 0 9.2 0a4.6 4.6 0 1 0-9.2 0M1150.2 706.3a4.6 4.6 0 1 0 9.2 0a4.6 4.6 0 1 0-9.2 0M1150.2 713.3a4.6 4.6 0 1 0 9.2 0a4.6 4.6 0 1 0-9.2 0M1150.2 716.8a4.6 4.6 0 1 0 9.2 0a4.6 4.6 0 1 0-9.2 0M1150.2 720.3a4.6 4.6 0 1 0 9.2 0a4.6 4.6 0 1 0-9.2 0M1151.8 451.8a4.6 4.6 0 1 0 9.2 0a4.6 4.6 0 1 0-9.2 0M1151.8 492.9a4.6 4.6 0 1 0 9.2 0a4.6 4.6 0 1 0-9.2 0M1151.8 507.6a4.6 4.6 0 1 0 9.2 0a4.6 4.6 0 1 0-9.2 0M1151.8 522.7a4.6 4.6 0 1 0 9.2 0a4.6 4.6 0 1 0-9.2 0M1151.8 550.8a4.6 4.6 0 1 0 9.2 0a4.6 4.6 0 1 0-9.2 0M1151.8 565.2a4.6 4.6 0 1 0 9.2 0a4.6 4.6 0 1 0-9.2 0M1153.5 469.4a4.6 4.6 0 1 0 9.2 0a4.6 4.6 0 1 0-9.2 0M1153.5 484.4a4.6 4.6 0 1 0 9.2 0a4.6 4.6 0 1 0-9.2 0M1155.1 443.0a4.6 4.6 0 1 0 9.2 0a4.6 4.6 0 1 0-9.2 0M1155.2 462.3a4.6 4.6 0 1 0 9.2 0a4.6 4.6 0 1 0-9.2 0M1156.9 432.5a4.6 4.6 0 1 0 9.2 0a4.6 4.6 0 1 0-9.2 0M1156.9 500.9a4.6 4.6 0 1 0 9.2 0a4.6 4.6 0 1 0-9.2 0M1156.9 515.3a4.6 4.6 0 1 0 9.2 0a4.6 4.6 0 1 0-9.2 0M1156.9 530.1a4.6 4.6 0 1 0 9.2 0a4.6 4.6 0 1 0-9.2 0M1156.9 543.4a4.6 4.6 0 1 0 9.2 0a4.6 4.6 0 1 0-9.2 0M1156.9 558.2a4.6 4.6 0 1 0 9.2 0a4.6 4.6 0 1 0-9.2 0M1156.9 572.2a4.6 4.6 0 1 0 9.2 0a4.6 4.6 0 1 0-9.2 0M1156.9 585.9a4.6 4.6 0 1 0 9.2 0a4.6 4.6 0 1 0-9.2 0M1156.9 595.7a4.6 4.6 0 1 0 9.2 0a4.6 4.6 0 1 0-9.2 0M1156.9 597.5a4.6 4.6 0 1 0 9.2 0a4.6 4.6 0 1 0-9.2 0M1156.9 601.0a4.6 4.6 0 1 0 9.2 0a4.6 4.6 0 1 0-9.2 0M1156.9 608.0a4.6 4.6 0 1 0 9.2 0a4.6 4.6 0 1 0-9.2 0M1156.9 611.5a4.6 4.6 0 1 0 9.2 0a4.6 4.6 0 1 0-9.2 0M1156.9 615.0a4.6 4.6 0 1 0 9.2 0a4.6 4.6 0 1 0-9.2 0M1156.9 618.5a4.6 4.6 0 1 0 9.2 0a4.6 4.6 0 1 0-9.2 0M1156.9 622.0a4.6 4.6 0 1 0 9.2 0a4.6 4.6 0 1 0-9.2 0M1156.9 629.1a4.6 4.6 0 1 0 9.2 0a4.6 4.6 0 1 0-9.2 0M1156.9 632.6a4.6 4.6 0 1 0 9.2 0a4.6 4.6 0 1 0-9.2 0M1156.9 636.1a4.6 4.6 0 1 0 9.2 0a4.6 4.6 0 1 0-9.2 0M1156.9 643.1a4.6 4.6 0 1 0 9.2 0a4.6 4.6 0 1 0-9.2 0M1156.9 650.1a4.6 4.6 0 1 0 9.2 0a4.6 4.6 0 1 0-9.2 0M1156.9 653.6a4.6 4.6 0 1 0 9.2 0a4.6 4.6 0 1 0-9.2 0M1156.9 657.1a4.6 4.6 0 1 0 9.2 0a4.6 4.6 0 1 0-9.2 0M1156.9 664.2a4.6 4.6 0 1 0 9.2 0a4.6 4.6 0 1 0-9.2 0M1156.9 671.2a4.6 4.6 0 1 0 9.2 0a4.6 4.6 0 1 0-9.2 0M1156.9 678.2a4.6 4.6 0 1 0 9.2 0a4.6 4.6 0 1 0-9.2 0M1156.9 685.2a4.6 4.6 0 1 0 9.2 0a4.6 4.6 0 1 0-9.2 0M1156.9 692.2a4.6 4.6 0 1 0 9.2 0a4.6 4.6 0 1 0-9.2 0M1156.9 706.3a4.6 4.6 0 1 0 9.2 0a4.6 4.6 0 1 0-9.2 0M1156.9 709.8a4.6 4.6 0 1 0 9.2 0a4.6 4.6 0 1 0-9.2 0M1156.9 713.3a4.6 4.6 0 1 0 9.2 0a4.6 4.6 0 1 0-9.2 0M1156.9 723.8a4.6 4.6 0 1 0 9.2 0a4.6 4.6 0 1 0-9.2 0M1158.5 451.8a4.6 4.6 0 1 0 9.2 0a4.6 4.6 0 1 0-9.2 0M1158.5 492.9a4.6 4.6 0 1 0 9.2 0a4.6 4.6 0 1 0-9.2 0M1158.5 522.7a4.6 4.6 0 1 0 9.2 0a4.6 4.6 0 1 0-9.2 0M1158.5 550.8a4.6 4.6 0 1 0 9.2 0a4.6 4.6 0 1 0-9.2 0M1160.2 469.4a4.6 4.6 0 1 0 9.2 0a4.6 4.6 0 1 0-9.2 0M1160.2 484.4a4.6 4.6 0 1 0 9.2 0a4.6 4.6 0 1 0-9.2 0M1161.9 462.3a4.6 4.6 0 1 0 9.2 0a4.6 4.6 0 1 0-9.2 0M1163.6 432.5a4.6 4.6 0 1 0 9.2 0a4.6 4.6 0 1 0-9.2 0M1163.6 500.9a4.6 4.6 0 1 0 9.2 0a4.6 4.6 0 1 0-9.2 0M1163.6 515.3a4.6 4.6 0 1 0 9.2 0a4.6 4.6 0 1 0-9.2 0M1163.6 530.1a4.6 4.6 0 1 0 9.2 0a4.6 4.6 0 1 0-9.2 0M1163.6 543.4a4.6 4.6 0 1 0 9.2 0a4.6 4.6 0 1 0-9.2 0M1163.6 558.2a4.6 4.6 0 1 0 9.2 0a4.6 4.6 0 1 0-9.2 0M1163.6 572.2a4.6 4.6 0 1 0 9.2 0a4.6 4.6 0 1 0-9.2 0M1163.6 579.2a4.6 4.6 0 1 0 9.2 0a4.6 4.6 0 1 0-9.2 0M1163.6 585.9a4.6 4.6 0 1 0 9.2 0a4.6 4.6 0 1 0-9.2 0M1163.6 595.7a4.6 4.6 0 1 0 9.2 0a4.6 4.6 0 1 0-9.2 0M1163.6 601.0a4.6 4.6 0 1 0 9.2 0a4.6 4.6 0 1 0-9.2 0M1163.6 608.0a4.6 4.6 0 1 0 9.2 0a4.6 4.6 0 1 0-9.2 0M1163.6 611.5a4.6 4.6 0 1 0 9.2 0a4.6 4.6 0 1 0-9.2 0M1163.6 622.0a4.6 4.6 0 1 0 9.2 0a4.6 4.6 0 1 0-9.2 0M1163.6 625.5a4.6 4.6 0 1 0 9.2 0a4.6 4.6 0 1 0-9.2 0M1163.6 629.1a4.6 4.6 0 1 0 9.2 0a4.6 4.6 0 1 0-9.2 0M1163.6 643.1a4.6 4.6 0 1 0 9.2 0a4.6 4.6 0 1 0-9.2 0M1163.6 646.6a4.6 4.6 0 1 0 9.2 0a4.6 4.6 0 1 0-9.2 0M1163.6 650.1a4.6 4.6 0 1 0 9.2 0a4.6 4.6 0 1 0-9.2 0M1163.6 653.6a4.6 4.6 0 1 0 9.2 0a4.6 4.6 0 1 0-9.2 0M1163.6 657.1a4.6 4.6 0 1 0 9.2 0a4.6 4.6 0 1 0-9.2 0M1163.6 660.6a4.6 4.6 0 1 0 9.2 0a4.6 4.6 0 1 0-9.2 0M1163.6 664.2a4.6 4.6 0 1 0 9.2 0a4.6 4.6 0 1 0-9.2 0M1163.6 667.7a4.6 4.6 0 1 0 9.2 0a4.6 4.6 0 1 0-9.2 0M1163.6 671.2a4.6 4.6 0 1 0 9.2 0a4.6 4.6 0 1 0-9.2 0M1163.6 678.2a4.6 4.6 0 1 0 9.2 0a4.6 4.6 0 1 0-9.2 0M1163.6 681.7a4.6 4.6 0 1 0 9.2 0a4.6 4.6 0 1 0-9.2 0M1163.6 688.7a4.6 4.6 0 1 0 9.2 0a4.6 4.6 0 1 0-9.2 0M1163.6 692.2a4.6 4.6 0 1 0 9.2 0a4.6 4.6 0 1 0-9.2 0M1163.6 695.8a4.6 4.6 0 1 0 9.2 0a4.6 4.6 0 1 0-9.2 0M1163.6 699.3a4.6 4.6 0 1 0 9.2 0a4.6 4.6 0 1 0-9.2 0M1163.6 702.8a4.6 4.6 0 1 0 9.2 0a4.6 4.6 0 1 0-9.2 0M1163.6 706.3a4.6 4.6 0 1 0 9.2 0a4.6 4.6 0 1 0-9.2 0M1163.6 713.3a4.6 4.6 0 1 0 9.2 0a4.6 4.6 0 1 0-9.2 0M1165.3 451.8a4.6 4.6 0 1 0 9.2 0a4.6 4.6 0 1 0-9.2 0M1165.3 492.9a4.6 4.6 0 1 0 9.2 0a4.6 4.6 0 1 0-9.2 0M1165.3 522.7a4.6 4.6 0 1 0 9.2 0a4.6 4.6 0 1 0-9.2 0M1165.3 536.7a4.6 4.6 0 1 0 9.2 0a4.6 4.6 0 1 0-9.2 0M1165.3 550.8a4.6 4.6 0 1 0 9.2 0a4.6 4.6 0 1 0-9.2 0M1165.3 565.2a4.6 4.6 0 1 0 9.2 0a4.6 4.6 0 1 0-9.2 0M1166.9 469.4a4.6 4.6 0 1 0 9.2 0a4.6 4.6 0 1 0-9.2 0M1166.9 484.4a4.6 4.6 0 1 0 9.2 0a4.6 4.6 0 1 0-9.2 0M1170.3 500.9a4.6 4.6 0 1 0 9.2 0a4.6 4.6 0 1 0-9.2 0M1170.3 515.3a4.6 4.6 0 1 0 9.2 0a4.6 4.6 0 1 0-9.2 0M1170.3 530.1a4.6 4.6 0 1 0 9.2 0a4.6 4.6 0 1 0-9.2 0M1170.3 543.4a4.6 4.6 0 1 0 9.2 0a4.6 4.6 0 1 0-9.2 0M1170.3 558.2a4.6 4.6 0 1 0 9.2 0a4.6 4.6 0 1 0-9.2 0M1170.3 572.2a4.6 4.6 0 1 0 9.2 0a4.6 4.6 0 1 0-9.2 0M1170.3 579.2a4.6 4.6 0 1 0 9.2 0a4.6 4.6 0 1 0-9.2 0M1170.3 585.9a4.6 4.6 0 1 0 9.2 0a4.6 4.6 0 1 0-9.2 0M1170.3 595.7a4.6 4.6 0 1 0 9.2 0a4.6 4.6 0 1 0-9.2 0M1170.3 597.5a4.6 4.6 0 1 0 9.2 0a4.6 4.6 0 1 0-9.2 0M1170.3 601.0a4.6 4.6 0 1 0 9.2 0a4.6 4.6 0 1 0-9.2 0M1170.3 608.0a4.6 4.6 0 1 0 9.2 0a4.6 4.6 0 1 0-9.2 0M1170.3 611.5a4.6 4.6 0 1 0 9.2 0a4.6 4.6 0 1 0-9.2 0M1170.3 618.5a4.6 4.6 0 1 0 9.2 0a4.6 4.6 0 1 0-9.2 0M1170.3 622.0a4.6 4.6 0 1 0 9.2 0a4.6 4.6 0 1 0-9.2 0M1170.3 629.1a4.6 4.6 0 1 0 9.2 0a4.6 4.6 0 1 0-9.2 0M1170.3 636.1a4.6 4.6 0 1 0 9.2 0a4.6 4.6 0 1 0-9.2 0M1170.3 639.6a4.6 4.6 0 1 0 9.2 0a4.6 4.6 0 1 0-9.2 0M1170.3 643.1a4.6 4.6 0 1 0 9.2 0a4.6 4.6 0 1 0-9.2 0M1170.3 650.1a4.6 4.6 0 1 0 9.2 0a4.6 4.6 0 1 0-9.2 0M1170.3 653.6a4.6 4.6 0 1 0 9.2 0a4.6 4.6 0 1 0-9.2 0M1170.3 657.1a4.6 4.6 0 1 0 9.2 0a4.6 4.6 0 1 0-9.2 0M1170.3 660.6a4.6 4.6 0 1 0 9.2 0a4.6 4.6 0 1 0-9.2 0M1170.3 664.2a4.6 4.6 0 1 0 9.2 0a4.6 4.6 0 1 0-9.2 0M1170.3 667.7a4.6 4.6 0 1 0 9.2 0a4.6 4.6 0 1 0-9.2 0M1170.3 671.2a4.6 4.6 0 1 0 9.2 0a4.6 4.6 0 1 0-9.2 0M1170.3 678.2a4.6 4.6 0 1 0 9.2 0a4.6 4.6 0 1 0-9.2 0M1170.3 685.2a4.6 4.6 0 1 0 9.2 0a4.6 4.6 0 1 0-9.2 0M1170.3 692.2a4.6 4.6 0 1 0 9.2 0a4.6 4.6 0 1 0-9.2 0M1170.3 695.8a4.6 4.6 0 1 0 9.2 0a4.6 4.6 0 1 0-9.2 0M1170.3 699.3a4.6 4.6 0 1 0 9.2 0a4.6 4.6 0 1 0-9.2 0M1170.3 713.3a4.6 4.6 0 1 0 9.2 0a4.6 4.6 0 1 0-9.2 0M1172.0 451.8a4.6 4.6 0 1 0 9.2 0a4.6 4.6 0 1 0-9.2 0M1172.0 492.9a4.6 4.6 0 1 0 9.2 0a4.6 4.6 0 1 0-9.2 0M1172.0 507.6a4.6 4.6 0 1 0 9.2 0a4.6 4.6 0 1 0-9.2 0M1172.0 536.7a4.6 4.6 0 1 0 9.2 0a4.6 4.6 0 1 0-9.2 0M1172.0 550.8a4.6 4.6 0 1 0 9.2 0a4.6 4.6 0 1 0-9.2 0M1172.0 565.2a4.6 4.6 0 1 0 9.2 0a4.6 4.6 0 1 0-9.2 0M1173.6 484.4a4.6 4.6 0 1 0 9.2 0a4.6 4.6 0 1 0-9.2 0M1177.0 500.9a4.6 4.6 0 1 0 9.2 0a4.6 4.6 0 1 0-9.2 0M1177.0 515.3a4.6 4.6 0 1 0 9.2 0a4.6 4.6 0 1 0-9.2 0M1177.0 530.1a4.6 4.6 0 1 0 9.2 0a4.6 4.6 0 1 0-9.2 0M1177.0 543.4a4.6 4.6 0 1 0 9.2 0a4.6 4.6 0 1 0-9.2 0M1177.0 558.2a4.6 4.6 0 1 0 9.2 0a4.6 4.6 0 1 0-9.2 0M1177.0 572.2a4.6 4.6 0 1 0 9.2 0a4.6 4.6 0 1 0-9.2 0M1177.0 579.2a4.6 4.6 0 1 0 9.2 0a4.6 4.6 0 1 0-9.2 0M1177.0 585.9a4.6 4.6 0 1 0 9.2 0a4.6 4.6 0 1 0-9.2 0M1177.0 595.7a4.6 4.6 0 1 0 9.2 0a4.6 4.6 0 1 0-9.2 0M1177.0 601.0a4.6 4.6 0 1 0 9.2 0a4.6 4.6 0 1 0-9.2 0M1177.0 604.5a4.6 4.6 0 1 0 9.2 0a4.6 4.6 0 1 0-9.2 0M1177.0 608.0a4.6 4.6 0 1 0 9.2 0a4.6 4.6 0 1 0-9.2 0M1177.0 611.5a4.6 4.6 0 1 0 9.2 0a4.6 4.6 0 1 0-9.2 0M1177.0 615.0a4.6 4.6 0 1 0 9.2 0a4.6 4.6 0 1 0-9.2 0M1177.0 618.5a4.6 4.6 0 1 0 9.2 0a4.6 4.6 0 1 0-9.2 0M1177.0 622.0a4.6 4.6 0 1 0 9.2 0a4.6 4.6 0 1 0-9.2 0M1177.0 625.5a4.6 4.6 0 1 0 9.2 0a4.6 4.6 0 1 0-9.2 0M1177.0 629.1a4.6 4.6 0 1 0 9.2 0a4.6 4.6 0 1 0-9.2 0M1177.0 636.1a4.6 4.6 0 1 0 9.2 0a4.6 4.6 0 1 0-9.2 0M1177.0 639.6a4.6 4.6 0 1 0 9.2 0a4.6 4.6 0 1 0-9.2 0M1177.0 643.1a4.6 4.6 0 1 0 9.2 0a4.6 4.6 0 1 0-9.2 0M1177.0 650.1a4.6 4.6 0 1 0 9.2 0a4.6 4.6 0 1 0-9.2 0M1177.0 653.6a4.6 4.6 0 1 0 9.2 0a4.6 4.6 0 1 0-9.2 0M1177.0 657.1a4.6 4.6 0 1 0 9.2 0a4.6 4.6 0 1 0-9.2 0M1177.0 664.2a4.6 4.6 0 1 0 9.2 0a4.6 4.6 0 1 0-9.2 0M1177.0 667.7a4.6 4.6 0 1 0 9.2 0a4.6 4.6 0 1 0-9.2 0M1177.0 671.2a4.6 4.6 0 1 0 9.2 0a4.6 4.6 0 1 0-9.2 0M1177.0 674.7a4.6 4.6 0 1 0 9.2 0a4.6 4.6 0 1 0-9.2 0M1177.0 678.2a4.6 4.6 0 1 0 9.2 0a4.6 4.6 0 1 0-9.2 0M1177.0 681.7a4.6 4.6 0 1 0 9.2 0a4.6 4.6 0 1 0-9.2 0M1177.0 685.2a4.6 4.6 0 1 0 9.2 0a4.6 4.6 0 1 0-9.2 0M1177.0 688.7a4.6 4.6 0 1 0 9.2 0a4.6 4.6 0 1 0-9.2 0M1177.0 692.2a4.6 4.6 0 1 0 9.2 0a4.6 4.6 0 1 0-9.2 0M1177.0 699.3a4.6 4.6 0 1 0 9.2 0a4.6 4.6 0 1 0-9.2 0M1177.0 702.8a4.6 4.6 0 1 0 9.2 0a4.6 4.6 0 1 0-9.2 0M1178.7 492.9a4.6 4.6 0 1 0 9.2 0a4.6 4.6 0 1 0-9.2 0M1178.7 507.6a4.6 4.6 0 1 0 9.2 0a4.6 4.6 0 1 0-9.2 0M1178.7 536.7a4.6 4.6 0 1 0 9.2 0a4.6 4.6 0 1 0-9.2 0M1180.3 469.4a4.6 4.6 0 1 0 9.2 0a4.6 4.6 0 1 0-9.2 0M1180.3 484.4a4.6 4.6 0 1 0 9.2 0a4.6 4.6 0 1 0-9.2 0M1183.7 500.9a4.6 4.6 0 1 0 9.2 0a4.6 4.6 0 1 0-9.2 0M1183.7 515.3a4.6 4.6 0 1 0 9.2 0a4.6 4.6 0 1 0-9.2 0M1183.7 530.1a4.6 4.6 0 1 0 9.2 0a4.6 4.6 0 1 0-9.2 0M1183.7 543.4a4.6 4.6 0 1 0 9.2 0a4.6 4.6 0 1 0-9.2 0M1183.7 558.2a4.6 4.6 0 1 0 9.2 0a4.6 4.6 0 1 0-9.2 0M1183.7 572.2a4.6 4.6 0 1 0 9.2 0a4.6 4.6 0 1 0-9.2 0M1183.7 579.2a4.6 4.6 0 1 0 9.2 0a4.6 4.6 0 1 0-9.2 0M1183.7 585.9a4.6 4.6 0 1 0 9.2 0a4.6 4.6 0 1 0-9.2 0M1183.7 595.7a4.6 4.6 0 1 0 9.2 0a4.6 4.6 0 1 0-9.2 0M1183.7 597.5a4.6 4.6 0 1 0 9.2 0a4.6 4.6 0 1 0-9.2 0M1183.7 604.5a4.6 4.6 0 1 0 9.2 0a4.6 4.6 0 1 0-9.2 0M1183.7 608.0a4.6 4.6 0 1 0 9.2 0a4.6 4.6 0 1 0-9.2 0M1183.7 611.5a4.6 4.6 0 1 0 9.2 0a4.6 4.6 0 1 0-9.2 0M1183.7 615.0a4.6 4.6 0 1 0 9.2 0a4.6 4.6 0 1 0-9.2 0M1183.7 622.0a4.6 4.6 0 1 0 9.2 0a4.6 4.6 0 1 0-9.2 0M1183.7 629.1a4.6 4.6 0 1 0 9.2 0a4.6 4.6 0 1 0-9.2 0M1183.7 636.1a4.6 4.6 0 1 0 9.2 0a4.6 4.6 0 1 0-9.2 0M1183.7 643.1a4.6 4.6 0 1 0 9.2 0a4.6 4.6 0 1 0-9.2 0M1183.7 657.1a4.6 4.6 0 1 0 9.2 0a4.6 4.6 0 1 0-9.2 0M1183.7 660.6a4.6 4.6 0 1 0 9.2 0a4.6 4.6 0 1 0-9.2 0M1183.7 664.2a4.6 4.6 0 1 0 9.2 0a4.6 4.6 0 1 0-9.2 0M1183.7 671.2a4.6 4.6 0 1 0 9.2 0a4.6 4.6 0 1 0-9.2 0M1183.7 674.7a4.6 4.6 0 1 0 9.2 0a4.6 4.6 0 1 0-9.2 0M1183.7 681.7a4.6 4.6 0 1 0 9.2 0a4.6 4.6 0 1 0-9.2 0M1183.7 685.2a4.6 4.6 0 1 0 9.2 0a4.6 4.6 0 1 0-9.2 0M1183.7 688.7a4.6 4.6 0 1 0 9.2 0a4.6 4.6 0 1 0-9.2 0M1183.7 692.2a4.6 4.6 0 1 0 9.2 0a4.6 4.6 0 1 0-9.2 0M1183.7 695.8a4.6 4.6 0 1 0 9.2 0a4.6 4.6 0 1 0-9.2 0M1183.7 699.3a4.6 4.6 0 1 0 9.2 0a4.6 4.6 0 1 0-9.2 0M1183.7 706.3a4.6 4.6 0 1 0 9.2 0a4.6 4.6 0 1 0-9.2 0M1185.4 536.7a4.6 4.6 0 1 0 9.2 0a4.6 4.6 0 1 0-9.2 0M1185.4 550.8a4.6 4.6 0 1 0 9.2 0a4.6 4.6 0 1 0-9.2 0M1185.4 565.2a4.6 4.6 0 1 0 9.2 0a4.6 4.6 0 1 0-9.2 0M1187.0 469.4a4.6 4.6 0 1 0 9.2 0a4.6 4.6 0 1 0-9.2 0M1187.0 484.4a4.6 4.6 0 1 0 9.2 0a4.6 4.6 0 1 0-9.2 0M1190.4 500.9a4.6 4.6 0 1 0 9.2 0a4.6 4.6 0 1 0-9.2 0M1190.4 515.3a4.6 4.6 0 1 0 9.2 0a4.6 4.6 0 1 0-9.2 0M1190.4 530.1a4.6 4.6 0 1 0 9.2 0a4.6 4.6 0 1 0-9.2 0M1190.4 543.4a4.6 4.6 0 1 0 9.2 0a4.6 4.6 0 1 0-9.2 0M1190.4 558.2a4.6 4.6 0 1 0 9.2 0a4.6 4.6 0 1 0-9.2 0M1190.4 572.2a4.6 4.6 0 1 0 9.2 0a4.6 4.6 0 1 0-9.2 0M1190.4 579.2a4.6 4.6 0 1 0 9.2 0a4.6 4.6 0 1 0-9.2 0M1190.4 585.9a4.6 4.6 0 1 0 9.2 0a4.6 4.6 0 1 0-9.2 0M1190.4 595.7a4.6 4.6 0 1 0 9.2 0a4.6 4.6 0 1 0-9.2 0M1190.4 597.5a4.6 4.6 0 1 0 9.2 0a4.6 4.6 0 1 0-9.2 0M1190.4 601.0a4.6 4.6 0 1 0 9.2 0a4.6 4.6 0 1 0-9.2 0M1190.4 608.0a4.6 4.6 0 1 0 9.2 0a4.6 4.6 0 1 0-9.2 0M1190.4 615.0a4.6 4.6 0 1 0 9.2 0a4.6 4.6 0 1 0-9.2 0M1190.4 618.5a4.6 4.6 0 1 0 9.2 0a4.6 4.6 0 1 0-9.2 0M1190.4 622.0a4.6 4.6 0 1 0 9.2 0a4.6 4.6 0 1 0-9.2 0M1190.4 629.1a4.6 4.6 0 1 0 9.2 0a4.6 4.6 0 1 0-9.2 0M1190.4 632.6a4.6 4.6 0 1 0 9.2 0a4.6 4.6 0 1 0-9.2 0M1190.4 636.1a4.6 4.6 0 1 0 9.2 0a4.6 4.6 0 1 0-9.2 0M1190.4 643.1a4.6 4.6 0 1 0 9.2 0a4.6 4.6 0 1 0-9.2 0M1190.4 646.6a4.6 4.6 0 1 0 9.2 0a4.6 4.6 0 1 0-9.2 0M1190.4 650.1a4.6 4.6 0 1 0 9.2 0a4.6 4.6 0 1 0-9.2 0M1190.4 653.6a4.6 4.6 0 1 0 9.2 0a4.6 4.6 0 1 0-9.2 0M1190.4 657.1a4.6 4.6 0 1 0 9.2 0a4.6 4.6 0 1 0-9.2 0M1190.4 660.6a4.6 4.6 0 1 0 9.2 0a4.6 4.6 0 1 0-9.2 0M1190.4 664.2a4.6 4.6 0 1 0 9.2 0a4.6 4.6 0 1 0-9.2 0M1190.4 671.2a4.6 4.6 0 1 0 9.2 0a4.6 4.6 0 1 0-9.2 0M1190.4 674.7a4.6 4.6 0 1 0 9.2 0a4.6 4.6 0 1 0-9.2 0M1190.4 678.2a4.6 4.6 0 1 0 9.2 0a4.6 4.6 0 1 0-9.2 0M1190.4 681.7a4.6 4.6 0 1 0 9.2 0a4.6 4.6 0 1 0-9.2 0M1190.4 685.2a4.6 4.6 0 1 0 9.2 0a4.6 4.6 0 1 0-9.2 0M1190.4 692.2a4.6 4.6 0 1 0 9.2 0a4.6 4.6 0 1 0-9.2 0M1190.4 699.3a4.6 4.6 0 1 0 9.2 0a4.6 4.6 0 1 0-9.2 0M1190.4 709.8a4.6 4.6 0 1 0 9.2 0a4.6 4.6 0 1 0-9.2 0M1192.1 507.6a4.6 4.6 0 1 0 9.2 0a4.6 4.6 0 1 0-9.2 0M1192.1 536.7a4.6 4.6 0 1 0 9.2 0a4.6 4.6 0 1 0-9.2 0M1193.7 484.4a4.6 4.6 0 1 0 9.2 0a4.6 4.6 0 1 0-9.2 0M1197.1 500.9a4.6 4.6 0 1 0 9.2 0a4.6 4.6 0 1 0-9.2 0M1197.1 515.3a4.6 4.6 0 1 0 9.2 0a4.6 4.6 0 1 0-9.2 0M1197.1 530.1a4.6 4.6 0 1 0 9.2 0a4.6 4.6 0 1 0-9.2 0M1197.1 543.4a4.6 4.6 0 1 0 9.2 0a4.6 4.6 0 1 0-9.2 0M1197.1 558.2a4.6 4.6 0 1 0 9.2 0a4.6 4.6 0 1 0-9.2 0M1197.1 572.2a4.6 4.6 0 1 0 9.2 0a4.6 4.6 0 1 0-9.2 0M1197.1 585.9a4.6 4.6 0 1 0 9.2 0a4.6 4.6 0 1 0-9.2 0M1197.1 595.7a4.6 4.6 0 1 0 9.2 0a4.6 4.6 0 1 0-9.2 0M1197.1 601.0a4.6 4.6 0 1 0 9.2 0a4.6 4.6 0 1 0-9.2 0M1197.1 604.5a4.6 4.6 0 1 0 9.2 0a4.6 4.6 0 1 0-9.2 0M1197.1 608.0a4.6 4.6 0 1 0 9.2 0a4.6 4.6 0 1 0-9.2 0M1197.1 611.5a4.6 4.6 0 1 0 9.2 0a4.6 4.6 0 1 0-9.2 0M1197.1 615.0a4.6 4.6 0 1 0 9.2 0a4.6 4.6 0 1 0-9.2 0M1197.1 618.5a4.6 4.6 0 1 0 9.2 0a4.6 4.6 0 1 0-9.2 0M1197.1 622.0a4.6 4.6 0 1 0 9.2 0a4.6 4.6 0 1 0-9.2 0M1197.1 625.5a4.6 4.6 0 1 0 9.2 0a4.6 4.6 0 1 0-9.2 0M1197.1 629.1a4.6 4.6 0 1 0 9.2 0a4.6 4.6 0 1 0-9.2 0M1197.1 632.6a4.6 4.6 0 1 0 9.2 0a4.6 4.6 0 1 0-9.2 0M1197.1 636.1a4.6 4.6 0 1 0 9.2 0a4.6 4.6 0 1 0-9.2 0M1197.1 643.1a4.6 4.6 0 1 0 9.2 0a4.6 4.6 0 1 0-9.2 0M1197.1 646.6a4.6 4.6 0 1 0 9.2 0a4.6 4.6 0 1 0-9.2 0M1197.1 653.6a4.6 4.6 0 1 0 9.2 0a4.6 4.6 0 1 0-9.2 0M1197.1 660.6a4.6 4.6 0 1 0 9.2 0a4.6 4.6 0 1 0-9.2 0M1197.1 664.2a4.6 4.6 0 1 0 9.2 0a4.6 4.6 0 1 0-9.2 0M1197.1 671.2a4.6 4.6 0 1 0 9.2 0a4.6 4.6 0 1 0-9.2 0M1197.1 678.2a4.6 4.6 0 1 0 9.2 0a4.6 4.6 0 1 0-9.2 0M1197.1 681.7a4.6 4.6 0 1 0 9.2 0a4.6 4.6 0 1 0-9.2 0M1197.1 685.2a4.6 4.6 0 1 0 9.2 0a4.6 4.6 0 1 0-9.2 0M1197.1 688.7a4.6 4.6 0 1 0 9.2 0a4.6 4.6 0 1 0-9.2 0M1197.1 692.2a4.6 4.6 0 1 0 9.2 0a4.6 4.6 0 1 0-9.2 0M1197.1 706.3a4.6 4.6 0 1 0 9.2 0a4.6 4.6 0 1 0-9.2 0M1198.8 522.7a4.6 4.6 0 1 0 9.2 0a4.6 4.6 0 1 0-9.2 0M1198.8 550.8a4.6 4.6 0 1 0 9.2 0a4.6 4.6 0 1 0-9.2 0M1198.8 565.2a4.6 4.6 0 1 0 9.2 0a4.6 4.6 0 1 0-9.2 0M1200.5 484.4a4.6 4.6 0 1 0 9.2 0a4.6 4.6 0 1 0-9.2 0M1203.8 500.9a4.6 4.6 0 1 0 9.2 0a4.6 4.6 0 1 0-9.2 0M1203.8 515.3a4.6 4.6 0 1 0 9.2 0a4.6 4.6 0 1 0-9.2 0M1203.8 530.1a4.6 4.6 0 1 0 9.2 0a4.6 4.6 0 1 0-9.2 0M1203.8 543.4a4.6 4.6 0 1 0 9.2 0a4.6 4.6 0 1 0-9.2 0M1203.8 558.2a4.6 4.6 0 1 0 9.2 0a4.6 4.6 0 1 0-9.2 0M1203.8 572.2a4.6 4.6 0 1 0 9.2 0a4.6 4.6 0 1 0-9.2 0M1203.8 585.9a4.6 4.6 0 1 0 9.2 0a4.6 4.6 0 1 0-9.2 0M1203.8 595.7a4.6 4.6 0 1 0 9.2 0a4.6 4.6 0 1 0-9.2 0M1203.8 597.5a4.6 4.6 0 1 0 9.2 0a4.6 4.6 0 1 0-9.2 0M1203.8 601.0a4.6 4.6 0 1 0 9.2 0a4.6 4.6 0 1 0-9.2 0M1203.8 604.5a4.6 4.6 0 1 0 9.2 0a4.6 4.6 0 1 0-9.2 0M1203.8 608.0a4.6 4.6 0 1 0 9.2 0a4.6 4.6 0 1 0-9.2 0M1203.8 611.5a4.6 4.6 0 1 0 9.2 0a4.6 4.6 0 1 0-9.2 0M1203.8 615.0a4.6 4.6 0 1 0 9.2 0a4.6 4.6 0 1 0-9.2 0M1203.8 618.5a4.6 4.6 0 1 0 9.2 0a4.6 4.6 0 1 0-9.2 0M1203.8 622.0a4.6 4.6 0 1 0 9.2 0a4.6 4.6 0 1 0-9.2 0M1203.8 625.5a4.6 4.6 0 1 0 9.2 0a4.6 4.6 0 1 0-9.2 0M1203.8 629.1a4.6 4.6 0 1 0 9.2 0a4.6 4.6 0 1 0-9.2 0M1203.8 632.6a4.6 4.6 0 1 0 9.2 0a4.6 4.6 0 1 0-9.2 0M1203.8 636.1a4.6 4.6 0 1 0 9.2 0a4.6 4.6 0 1 0-9.2 0M1203.8 639.6a4.6 4.6 0 1 0 9.2 0a4.6 4.6 0 1 0-9.2 0M1203.8 643.1a4.6 4.6 0 1 0 9.2 0a4.6 4.6 0 1 0-9.2 0M1203.8 650.1a4.6 4.6 0 1 0 9.2 0a4.6 4.6 0 1 0-9.2 0M1203.8 657.1a4.6 4.6 0 1 0 9.2 0a4.6 4.6 0 1 0-9.2 0M1203.8 664.2a4.6 4.6 0 1 0 9.2 0a4.6 4.6 0 1 0-9.2 0M1203.8 667.7a4.6 4.6 0 1 0 9.2 0a4.6 4.6 0 1 0-9.2 0M1203.8 671.2a4.6 4.6 0 1 0 9.2 0a4.6 4.6 0 1 0-9.2 0M1203.8 678.2a4.6 4.6 0 1 0 9.2 0a4.6 4.6 0 1 0-9.2 0M1203.8 681.7a4.6 4.6 0 1 0 9.2 0a4.6 4.6 0 1 0-9.2 0M1203.8 685.2a4.6 4.6 0 1 0 9.2 0a4.6 4.6 0 1 0-9.2 0M1203.8 688.7a4.6 4.6 0 1 0 9.2 0a4.6 4.6 0 1 0-9.2 0M1203.8 692.2a4.6 4.6 0 1 0 9.2 0a4.6 4.6 0 1 0-9.2 0M1203.8 699.3a4.6 4.6 0 1 0 9.2 0a4.6 4.6 0 1 0-9.2 0M1203.8 702.8a4.6 4.6 0 1 0 9.2 0a4.6 4.6 0 1 0-9.2 0M1205.5 522.7a4.6 4.6 0 1 0 9.2 0a4.6 4.6 0 1 0-9.2 0M1205.5 536.7a4.6 4.6 0 1 0 9.2 0a4.6 4.6 0 1 0-9.2 0M1210.5 500.9a4.6 4.6 0 1 0 9.2 0a4.6 4.6 0 1 0-9.2 0M1210.5 515.3a4.6 4.6 0 1 0 9.2 0a4.6 4.6 0 1 0-9.2 0M1210.5 530.1a4.6 4.6 0 1 0 9.2 0a4.6 4.6 0 1 0-9.2 0M1210.5 543.4a4.6 4.6 0 1 0 9.2 0a4.6 4.6 0 1 0-9.2 0M1210.5 558.2a4.6 4.6 0 1 0 9.2 0a4.6 4.6 0 1 0-9.2 0M1210.5 572.2a4.6 4.6 0 1 0 9.2 0a4.6 4.6 0 1 0-9.2 0M1210.5 585.9a4.6 4.6 0 1 0 9.2 0a4.6 4.6 0 1 0-9.2 0M1210.5 595.7a4.6 4.6 0 1 0 9.2 0a4.6 4.6 0 1 0-9.2 0M1210.5 601.0a4.6 4.6 0 1 0 9.2 0a4.6 4.6 0 1 0-9.2 0M1210.5 604.5a4.6 4.6 0 1 0 9.2 0a4.6 4.6 0 1 0-9.2 0M1210.5 608.0a4.6 4.6 0 1 0 9.2 0a4.6 4.6 0 1 0-9.2 0M1210.5 615.0a4.6 4.6 0 1 0 9.2 0a4.6 4.6 0 1 0-9.2 0M1210.5 618.5a4.6 4.6 0 1 0 9.2 0a4.6 4.6 0 1 0-9.2 0M1210.5 622.0a4.6 4.6 0 1 0 9.2 0a4.6 4.6 0 1 0-9.2 0M1210.5 625.5a4.6 4.6 0 1 0 9.2 0a4.6 4.6 0 1 0-9.2 0M1210.5 629.1a4.6 4.6 0 1 0 9.2 0a4.6 4.6 0 1 0-9.2 0M1210.5 632.6a4.6 4.6 0 1 0 9.2 0a4.6 4.6 0 1 0-9.2 0M1210.5 636.1a4.6 4.6 0 1 0 9.2 0a4.6 4.6 0 1 0-9.2 0M1210.5 639.6a4.6 4.6 0 1 0 9.2 0a4.6 4.6 0 1 0-9.2 0M1210.5 650.1a4.6 4.6 0 1 0 9.2 0a4.6 4.6 0 1 0-9.2 0M1210.5 657.1a4.6 4.6 0 1 0 9.2 0a4.6 4.6 0 1 0-9.2 0M1210.5 664.2a4.6 4.6 0 1 0 9.2 0a4.6 4.6 0 1 0-9.2 0M1210.5 667.7a4.6 4.6 0 1 0 9.2 0a4.6 4.6 0 1 0-9.2 0M1210.5 671.2a4.6 4.6 0 1 0 9.2 0a4.6 4.6 0 1 0-9.2 0M1210.5 678.2a4.6 4.6 0 1 0 9.2 0a4.6 4.6 0 1 0-9.2 0M1210.5 685.2a4.6 4.6 0 1 0 9.2 0a4.6 4.6 0 1 0-9.2 0M1210.5 688.7a4.6 4.6 0 1 0 9.2 0a4.6 4.6 0 1 0-9.2 0M1210.5 692.2a4.6 4.6 0 1 0 9.2 0a4.6 4.6 0 1 0-9.2 0M1210.5 695.8a4.6 4.6 0 1 0 9.2 0a4.6 4.6 0 1 0-9.2 0M1210.5 699.3a4.6 4.6 0 1 0 9.2 0a4.6 4.6 0 1 0-9.2 0M1210.5 702.8a4.6 4.6 0 1 0 9.2 0a4.6 4.6 0 1 0-9.2 0M1210.5 706.3a4.6 4.6 0 1 0 9.2 0a4.6 4.6 0 1 0-9.2 0M1210.5 713.3a4.6 4.6 0 1 0 9.2 0a4.6 4.6 0 1 0-9.2 0M1212.2 522.7a4.6 4.6 0 1 0 9.2 0a4.6 4.6 0 1 0-9.2 0M1212.2 565.2a4.6 4.6 0 1 0 9.2 0a4.6 4.6 0 1 0-9.2 0M1217.2 515.3a4.6 4.6 0 1 0 9.2 0a4.6 4.6 0 1 0-9.2 0M1217.2 530.1a4.6 4.6 0 1 0 9.2 0a4.6 4.6 0 1 0-9.2 0M1217.2 543.4a4.6 4.6 0 1 0 9.2 0a4.6 4.6 0 1 0-9.2 0M1217.2 558.2a4.6 4.6 0 1 0 9.2 0a4.6 4.6 0 1 0-9.2 0M1217.2 572.2a4.6 4.6 0 1 0 9.2 0a4.6 4.6 0 1 0-9.2 0M1217.2 579.2a4.6 4.6 0 1 0 9.2 0a4.6 4.6 0 1 0-9.2 0M1217.2 585.9a4.6 4.6 0 1 0 9.2 0a4.6 4.6 0 1 0-9.2 0M1217.2 595.7a4.6 4.6 0 1 0 9.2 0a4.6 4.6 0 1 0-9.2 0M1217.2 597.5a4.6 4.6 0 1 0 9.2 0a4.6 4.6 0 1 0-9.2 0M1217.2 601.0a4.6 4.6 0 1 0 9.2 0a4.6 4.6 0 1 0-9.2 0M1217.2 604.5a4.6 4.6 0 1 0 9.2 0a4.6 4.6 0 1 0-9.2 0M1217.2 608.0a4.6 4.6 0 1 0 9.2 0a4.6 4.6 0 1 0-9.2 0M1217.2 611.5a4.6 4.6 0 1 0 9.2 0a4.6 4.6 0 1 0-9.2 0M1217.2 615.0a4.6 4.6 0 1 0 9.2 0a4.6 4.6 0 1 0-9.2 0M1217.2 618.5a4.6 4.6 0 1 0 9.2 0a4.6 4.6 0 1 0-9.2 0M1217.2 622.0a4.6 4.6 0 1 0 9.2 0a4.6 4.6 0 1 0-9.2 0M1217.2 625.5a4.6 4.6 0 1 0 9.2 0a4.6 4.6 0 1 0-9.2 0M1217.2 629.1a4.6 4.6 0 1 0 9.2 0a4.6 4.6 0 1 0-9.2 0M1217.2 632.6a4.6 4.6 0 1 0 9.2 0a4.6 4.6 0 1 0-9.2 0M1217.2 636.1a4.6 4.6 0 1 0 9.2 0a4.6 4.6 0 1 0-9.2 0M1217.2 639.6a4.6 4.6 0 1 0 9.2 0a4.6 4.6 0 1 0-9.2 0M1217.2 643.1a4.6 4.6 0 1 0 9.2 0a4.6 4.6 0 1 0-9.2 0M1217.2 646.6a4.6 4.6 0 1 0 9.2 0a4.6 4.6 0 1 0-9.2 0M1217.2 650.1a4.6 4.6 0 1 0 9.2 0a4.6 4.6 0 1 0-9.2 0M1217.2 653.6a4.6 4.6 0 1 0 9.2 0a4.6 4.6 0 1 0-9.2 0M1217.2 657.1a4.6 4.6 0 1 0 9.2 0a4.6 4.6 0 1 0-9.2 0M1217.2 660.6a4.6 4.6 0 1 0 9.2 0a4.6 4.6 0 1 0-9.2 0M1217.2 664.2a4.6 4.6 0 1 0 9.2 0a4.6 4.6 0 1 0-9.2 0M1217.2 667.7a4.6 4.6 0 1 0 9.2 0a4.6 4.6 0 1 0-9.2 0M1217.2 671.2a4.6 4.6 0 1 0 9.2 0a4.6 4.6 0 1 0-9.2 0M1217.2 674.7a4.6 4.6 0 1 0 9.2 0a4.6 4.6 0 1 0-9.2 0M1217.2 678.2a4.6 4.6 0 1 0 9.2 0a4.6 4.6 0 1 0-9.2 0M1217.2 681.7a4.6 4.6 0 1 0 9.2 0a4.6 4.6 0 1 0-9.2 0M1217.2 685.2a4.6 4.6 0 1 0 9.2 0a4.6 4.6 0 1 0-9.2 0M1217.2 688.7a4.6 4.6 0 1 0 9.2 0a4.6 4.6 0 1 0-9.2 0M1217.2 692.2a4.6 4.6 0 1 0 9.2 0a4.6 4.6 0 1 0-9.2 0M1217.2 699.3a4.6 4.6 0 1 0 9.2 0a4.6 4.6 0 1 0-9.2 0M1217.2 702.8a4.6 4.6 0 1 0 9.2 0a4.6 4.6 0 1 0-9.2 0M1217.2 706.3a4.6 4.6 0 1 0 9.2 0a4.6 4.6 0 1 0-9.2 0M1217.2 716.8a4.6 4.6 0 1 0 9.2 0a4.6 4.6 0 1 0-9.2 0M1218.9 550.8a4.6 4.6 0 1 0 9.2 0a4.6 4.6 0 1 0-9.2 0M1218.9 565.2a4.6 4.6 0 1 0 9.2 0a4.6 4.6 0 1 0-9.2 0M1224.0 515.3a4.6 4.6 0 1 0 9.2 0a4.6 4.6 0 1 0-9.2 0M1224.0 530.1a4.6 4.6 0 1 0 9.2 0a4.6 4.6 0 1 0-9.2 0M1224.0 543.4a4.6 4.6 0 1 0 9.2 0a4.6 4.6 0 1 0-9.2 0M1224.0 558.2a4.6 4.6 0 1 0 9.2 0a4.6 4.6 0 1 0-9.2 0M1224.0 572.2a4.6 4.6 0 1 0 9.2 0a4.6 4.6 0 1 0-9.2 0M1224.0 585.9a4.6 4.6 0 1 0 9.2 0a4.6 4.6 0 1 0-9.2 0M1224.0 595.7a4.6 4.6 0 1 0 9.2 0a4.6 4.6 0 1 0-9.2 0M1224.0 597.5a4.6 4.6 0 1 0 9.2 0a4.6 4.6 0 1 0-9.2 0M1224.0 601.0a4.6 4.6 0 1 0 9.2 0a4.6 4.6 0 1 0-9.2 0M1224.0 608.0a4.6 4.6 0 1 0 9.2 0a4.6 4.6 0 1 0-9.2 0M1224.0 615.0a4.6 4.6 0 1 0 9.2 0a4.6 4.6 0 1 0-9.2 0M1224.0 622.0a4.6 4.6 0 1 0 9.2 0a4.6 4.6 0 1 0-9.2 0M1224.0 625.5a4.6 4.6 0 1 0 9.2 0a4.6 4.6 0 1 0-9.2 0M1224.0 629.1a4.6 4.6 0 1 0 9.2 0a4.6 4.6 0 1 0-9.2 0M1224.0 632.6a4.6 4.6 0 1 0 9.2 0a4.6 4.6 0 1 0-9.2 0M1224.0 636.1a4.6 4.6 0 1 0 9.2 0a4.6 4.6 0 1 0-9.2 0M1224.0 643.1a4.6 4.6 0 1 0 9.2 0a4.6 4.6 0 1 0-9.2 0M1224.0 650.1a4.6 4.6 0 1 0 9.2 0a4.6 4.6 0 1 0-9.2 0M1224.0 657.1a4.6 4.6 0 1 0 9.2 0a4.6 4.6 0 1 0-9.2 0M1224.0 660.6a4.6 4.6 0 1 0 9.2 0a4.6 4.6 0 1 0-9.2 0M1224.0 664.2a4.6 4.6 0 1 0 9.2 0a4.6 4.6 0 1 0-9.2 0M1224.0 678.2a4.6 4.6 0 1 0 9.2 0a4.6 4.6 0 1 0-9.2 0M1224.0 681.7a4.6 4.6 0 1 0 9.2 0a4.6 4.6 0 1 0-9.2 0M1224.0 685.2a4.6 4.6 0 1 0 9.2 0a4.6 4.6 0 1 0-9.2 0M1224.0 688.7a4.6 4.6 0 1 0 9.2 0a4.6 4.6 0 1 0-9.2 0M1224.0 692.2a4.6 4.6 0 1 0 9.2 0a4.6 4.6 0 1 0-9.2 0M1224.0 695.8a4.6 4.6 0 1 0 9.2 0a4.6 4.6 0 1 0-9.2 0M1224.0 699.3a4.6 4.6 0 1 0 9.2 0a4.6 4.6 0 1 0-9.2 0M1224.0 702.8a4.6 4.6 0 1 0 9.2 0a4.6 4.6 0 1 0-9.2 0M1224.0 706.3a4.6 4.6 0 1 0 9.2 0a4.6 4.6 0 1 0-9.2 0M1225.6 536.7a4.6 4.6 0 1 0 9.2 0a4.6 4.6 0 1 0-9.2 0M1225.6 565.2a4.6 4.6 0 1 0 9.2 0a4.6 4.6 0 1 0-9.2 0M1230.7 530.1a4.6 4.6 0 1 0 9.2 0a4.6 4.6 0 1 0-9.2 0M1230.7 543.4a4.6 4.6 0 1 0 9.2 0a4.6 4.6 0 1 0-9.2 0M1230.7 558.2a4.6 4.6 0 1 0 9.2 0a4.6 4.6 0 1 0-9.2 0M1230.7 572.2a4.6 4.6 0 1 0 9.2 0a4.6 4.6 0 1 0-9.2 0M1230.7 585.9a4.6 4.6 0 1 0 9.2 0a4.6 4.6 0 1 0-9.2 0M1230.7 595.7a4.6 4.6 0 1 0 9.2 0a4.6 4.6 0 1 0-9.2 0M1230.7 597.5a4.6 4.6 0 1 0 9.2 0a4.6 4.6 0 1 0-9.2 0M1230.7 601.0a4.6 4.6 0 1 0 9.2 0a4.6 4.6 0 1 0-9.2 0M1230.7 608.0a4.6 4.6 0 1 0 9.2 0a4.6 4.6 0 1 0-9.2 0M1230.7 611.5a4.6 4.6 0 1 0 9.2 0a4.6 4.6 0 1 0-9.2 0M1230.7 615.0a4.6 4.6 0 1 0 9.2 0a4.6 4.6 0 1 0-9.2 0M1230.7 618.5a4.6 4.6 0 1 0 9.2 0a4.6 4.6 0 1 0-9.2 0M1230.7 622.0a4.6 4.6 0 1 0 9.2 0a4.6 4.6 0 1 0-9.2 0M1230.7 625.5a4.6 4.6 0 1 0 9.2 0a4.6 4.6 0 1 0-9.2 0M1230.7 629.1a4.6 4.6 0 1 0 9.2 0a4.6 4.6 0 1 0-9.2 0M1230.7 632.6a4.6 4.6 0 1 0 9.2 0a4.6 4.6 0 1 0-9.2 0M1230.7 636.1a4.6 4.6 0 1 0 9.2 0a4.6 4.6 0 1 0-9.2 0M1230.7 643.1a4.6 4.6 0 1 0 9.2 0a4.6 4.6 0 1 0-9.2 0M1230.7 646.6a4.6 4.6 0 1 0 9.2 0a4.6 4.6 0 1 0-9.2 0M1230.7 650.1a4.6 4.6 0 1 0 9.2 0a4.6 4.6 0 1 0-9.2 0M1230.7 653.6a4.6 4.6 0 1 0 9.2 0a4.6 4.6 0 1 0-9.2 0M1230.7 657.1a4.6 4.6 0 1 0 9.2 0a4.6 4.6 0 1 0-9.2 0M1230.7 660.6a4.6 4.6 0 1 0 9.2 0a4.6 4.6 0 1 0-9.2 0M1230.7 664.2a4.6 4.6 0 1 0 9.2 0a4.6 4.6 0 1 0-9.2 0M1230.7 671.2a4.6 4.6 0 1 0 9.2 0a4.6 4.6 0 1 0-9.2 0M1230.7 685.2a4.6 4.6 0 1 0 9.2 0a4.6 4.6 0 1 0-9.2 0M1230.7 688.7a4.6 4.6 0 1 0 9.2 0a4.6 4.6 0 1 0-9.2 0M1230.7 692.2a4.6 4.6 0 1 0 9.2 0a4.6 4.6 0 1 0-9.2 0M1230.7 695.8a4.6 4.6 0 1 0 9.2 0a4.6 4.6 0 1 0-9.2 0M1230.7 699.3a4.6 4.6 0 1 0 9.2 0a4.6 4.6 0 1 0-9.2 0M1230.7 702.8a4.6 4.6 0 1 0 9.2 0a4.6 4.6 0 1 0-9.2 0M1230.7 706.3a4.6 4.6 0 1 0 9.2 0a4.6 4.6 0 1 0-9.2 0M1230.7 709.8a4.6 4.6 0 1 0 9.2 0a4.6 4.6 0 1 0-9.2 0M1230.7 713.3a4.6 4.6 0 1 0 9.2 0a4.6 4.6 0 1 0-9.2 0M1232.3 550.8a4.6 4.6 0 1 0 9.2 0a4.6 4.6 0 1 0-9.2 0M1237.4 543.4a4.6 4.6 0 1 0 9.2 0a4.6 4.6 0 1 0-9.2 0M1237.4 558.2a4.6 4.6 0 1 0 9.2 0a4.6 4.6 0 1 0-9.2 0M1237.4 585.9a4.6 4.6 0 1 0 9.2 0a4.6 4.6 0 1 0-9.2 0M1237.4 595.7a4.6 4.6 0 1 0 9.2 0a4.6 4.6 0 1 0-9.2 0M1237.4 597.5a4.6 4.6 0 1 0 9.2 0a4.6 4.6 0 1 0-9.2 0M1237.4 601.0a4.6 4.6 0 1 0 9.2 0a4.6 4.6 0 1 0-9.2 0M1237.4 604.5a4.6 4.6 0 1 0 9.2 0a4.6 4.6 0 1 0-9.2 0M1237.4 608.0a4.6 4.6 0 1 0 9.2 0a4.6 4.6 0 1 0-9.2 0M1237.4 611.5a4.6 4.6 0 1 0 9.2 0a4.6 4.6 0 1 0-9.2 0M1237.4 615.0a4.6 4.6 0 1 0 9.2 0a4.6 4.6 0 1 0-9.2 0M1237.4 622.0a4.6 4.6 0 1 0 9.2 0a4.6 4.6 0 1 0-9.2 0M1237.4 629.1a4.6 4.6 0 1 0 9.2 0a4.6 4.6 0 1 0-9.2 0M1237.4 636.1a4.6 4.6 0 1 0 9.2 0a4.6 4.6 0 1 0-9.2 0M1237.4 643.1a4.6 4.6 0 1 0 9.2 0a4.6 4.6 0 1 0-9.2 0M1237.4 650.1a4.6 4.6 0 1 0 9.2 0a4.6 4.6 0 1 0-9.2 0M1237.4 657.1a4.6 4.6 0 1 0 9.2 0a4.6 4.6 0 1 0-9.2 0M1237.4 660.6a4.6 4.6 0 1 0 9.2 0a4.6 4.6 0 1 0-9.2 0M1237.4 664.2a4.6 4.6 0 1 0 9.2 0a4.6 4.6 0 1 0-9.2 0M1237.4 671.2a4.6 4.6 0 1 0 9.2 0a4.6 4.6 0 1 0-9.2 0M1237.4 678.2a4.6 4.6 0 1 0 9.2 0a4.6 4.6 0 1 0-9.2 0M1237.4 681.7a4.6 4.6 0 1 0 9.2 0a4.6 4.6 0 1 0-9.2 0M1237.4 685.2a4.6 4.6 0 1 0 9.2 0a4.6 4.6 0 1 0-9.2 0M1237.4 688.7a4.6 4.6 0 1 0 9.2 0a4.6 4.6 0 1 0-9.2 0M1237.4 692.2a4.6 4.6 0 1 0 9.2 0a4.6 4.6 0 1 0-9.2 0M1237.4 699.3a4.6 4.6 0 1 0 9.2 0a4.6 4.6 0 1 0-9.2 0M1237.4 702.8a4.6 4.6 0 1 0 9.2 0a4.6 4.6 0 1 0-9.2 0M1237.4 706.3a4.6 4.6 0 1 0 9.2 0a4.6 4.6 0 1 0-9.2 0M1237.4 713.3a4.6 4.6 0 1 0 9.2 0a4.6 4.6 0 1 0-9.2 0M1244.1 585.9a4.6 4.6 0 1 0 9.2 0a4.6 4.6 0 1 0-9.2 0M1244.1 595.7a4.6 4.6 0 1 0 9.2 0a4.6 4.6 0 1 0-9.2 0M1244.1 601.0a4.6 4.6 0 1 0 9.2 0a4.6 4.6 0 1 0-9.2 0M1244.1 608.0a4.6 4.6 0 1 0 9.2 0a4.6 4.6 0 1 0-9.2 0M1244.1 611.5a4.6 4.6 0 1 0 9.2 0a4.6 4.6 0 1 0-9.2 0M1244.1 622.0a4.6 4.6 0 1 0 9.2 0a4.6 4.6 0 1 0-9.2 0M1244.1 629.1a4.6 4.6 0 1 0 9.2 0a4.6 4.6 0 1 0-9.2 0M1244.1 632.6a4.6 4.6 0 1 0 9.2 0a4.6 4.6 0 1 0-9.2 0M1244.1 636.1a4.6 4.6 0 1 0 9.2 0a4.6 4.6 0 1 0-9.2 0M1244.1 639.6a4.6 4.6 0 1 0 9.2 0a4.6 4.6 0 1 0-9.2 0M1244.1 643.1a4.6 4.6 0 1 0 9.2 0a4.6 4.6 0 1 0-9.2 0M1244.1 646.6a4.6 4.6 0 1 0 9.2 0a4.6 4.6 0 1 0-9.2 0M1244.1 650.1a4.6 4.6 0 1 0 9.2 0a4.6 4.6 0 1 0-9.2 0M1244.1 657.1a4.6 4.6 0 1 0 9.2 0a4.6 4.6 0 1 0-9.2 0M1244.1 664.2a4.6 4.6 0 1 0 9.2 0a4.6 4.6 0 1 0-9.2 0M1244.1 667.7a4.6 4.6 0 1 0 9.2 0a4.6 4.6 0 1 0-9.2 0M1244.1 671.2a4.6 4.6 0 1 0 9.2 0a4.6 4.6 0 1 0-9.2 0M1244.1 674.7a4.6 4.6 0 1 0 9.2 0a4.6 4.6 0 1 0-9.2 0M1244.1 678.2a4.6 4.6 0 1 0 9.2 0a4.6 4.6 0 1 0-9.2 0M1244.1 681.7a4.6 4.6 0 1 0 9.2 0a4.6 4.6 0 1 0-9.2 0M1244.1 685.2a4.6 4.6 0 1 0 9.2 0a4.6 4.6 0 1 0-9.2 0M1244.1 692.2a4.6 4.6 0 1 0 9.2 0a4.6 4.6 0 1 0-9.2 0M1244.1 699.3a4.6 4.6 0 1 0 9.2 0a4.6 4.6 0 1 0-9.2 0M1244.1 706.3a4.6 4.6 0 1 0 9.2 0a4.6 4.6 0 1 0-9.2 0M1250.8 595.7a4.6 4.6 0 1 0 9.2 0a4.6 4.6 0 1 0-9.2 0M1250.8 601.0a4.6 4.6 0 1 0 9.2 0a4.6 4.6 0 1 0-9.2 0M1250.8 604.5a4.6 4.6 0 1 0 9.2 0a4.6 4.6 0 1 0-9.2 0M1250.8 608.0a4.6 4.6 0 1 0 9.2 0a4.6 4.6 0 1 0-9.2 0M1250.8 611.5a4.6 4.6 0 1 0 9.2 0a4.6 4.6 0 1 0-9.2 0M1250.8 615.0a4.6 4.6 0 1 0 9.2 0a4.6 4.6 0 1 0-9.2 0M1250.8 618.5a4.6 4.6 0 1 0 9.2 0a4.6 4.6 0 1 0-9.2 0M1250.8 622.0a4.6 4.6 0 1 0 9.2 0a4.6 4.6 0 1 0-9.2 0M1250.8 629.1a4.6 4.6 0 1 0 9.2 0a4.6 4.6 0 1 0-9.2 0M1250.8 636.1a4.6 4.6 0 1 0 9.2 0a4.6 4.6 0 1 0-9.2 0M1250.8 639.6a4.6 4.6 0 1 0 9.2 0a4.6 4.6 0 1 0-9.2 0M1250.8 643.1a4.6 4.6 0 1 0 9.2 0a4.6 4.6 0 1 0-9.2 0M1250.8 650.1a4.6 4.6 0 1 0 9.2 0a4.6 4.6 0 1 0-9.2 0M1250.8 657.1a4.6 4.6 0 1 0 9.2 0a4.6 4.6 0 1 0-9.2 0M1250.8 660.6a4.6 4.6 0 1 0 9.2 0a4.6 4.6 0 1 0-9.2 0M1250.8 664.2a4.6 4.6 0 1 0 9.2 0a4.6 4.6 0 1 0-9.2 0M1250.8 667.7a4.6 4.6 0 1 0 9.2 0a4.6 4.6 0 1 0-9.2 0M1250.8 671.2a4.6 4.6 0 1 0 9.2 0a4.6 4.6 0 1 0-9.2 0M1250.8 674.7a4.6 4.6 0 1 0 9.2 0a4.6 4.6 0 1 0-9.2 0M1250.8 678.2a4.6 4.6 0 1 0 9.2 0a4.6 4.6 0 1 0-9.2 0M1250.8 681.7a4.6 4.6 0 1 0 9.2 0a4.6 4.6 0 1 0-9.2 0M1250.8 685.2a4.6 4.6 0 1 0 9.2 0a4.6 4.6 0 1 0-9.2 0M1250.8 692.2a4.6 4.6 0 1 0 9.2 0a4.6 4.6 0 1 0-9.2 0M1250.8 695.8a4.6 4.6 0 1 0 9.2 0a4.6 4.6 0 1 0-9.2 0M1257.5 601.0a4.6 4.6 0 1 0 9.2 0a4.6 4.6 0 1 0-9.2 0M1257.5 608.0a4.6 4.6 0 1 0 9.2 0a4.6 4.6 0 1 0-9.2 0M1257.5 611.5a4.6 4.6 0 1 0 9.2 0a4.6 4.6 0 1 0-9.2 0M1257.5 618.5a4.6 4.6 0 1 0 9.2 0a4.6 4.6 0 1 0-9.2 0M1257.5 622.0a4.6 4.6 0 1 0 9.2 0a4.6 4.6 0 1 0-9.2 0M1257.5 625.5a4.6 4.6 0 1 0 9.2 0a4.6 4.6 0 1 0-9.2 0M1257.5 629.1a4.6 4.6 0 1 0 9.2 0a4.6 4.6 0 1 0-9.2 0M1257.5 636.1a4.6 4.6 0 1 0 9.2 0a4.6 4.6 0 1 0-9.2 0M1257.5 643.1a4.6 4.6 0 1 0 9.2 0a4.6 4.6 0 1 0-9.2 0M1257.5 646.6a4.6 4.6 0 1 0 9.2 0a4.6 4.6 0 1 0-9.2 0M1257.5 650.1a4.6 4.6 0 1 0 9.2 0a4.6 4.6 0 1 0-9.2 0M1257.5 657.1a4.6 4.6 0 1 0 9.2 0a4.6 4.6 0 1 0-9.2 0M1257.5 664.2a4.6 4.6 0 1 0 9.2 0a4.6 4.6 0 1 0-9.2 0M1257.5 671.2a4.6 4.6 0 1 0 9.2 0a4.6 4.6 0 1 0-9.2 0M1257.5 674.7a4.6 4.6 0 1 0 9.2 0a4.6 4.6 0 1 0-9.2 0M1257.5 678.2a4.6 4.6 0 1 0 9.2 0a4.6 4.6 0 1 0-9.2 0M1257.5 681.7a4.6 4.6 0 1 0 9.2 0a4.6 4.6 0 1 0-9.2 0M1257.5 685.2a4.6 4.6 0 1 0 9.2 0a4.6 4.6 0 1 0-9.2 0M1257.5 692.2a4.6 4.6 0 1 0 9.2 0a4.6 4.6 0 1 0-9.2 0M1257.5 699.3a4.6 4.6 0 1 0 9.2 0a4.6 4.6 0 1 0-9.2 0M1261.4 718.6a4.6 4.6 0 1 0 9.2 0a4.6 4.6 0 1 0-9.2 0M1261.4 722.1a4.6 4.6 0 1 0 9.2 0a4.6 4.6 0 1 0-9.2 0M1261.4 723.8a4.6 4.6 0 1 0 9.2 0a4.6 4.6 0 1 0-9.2 0M1261.4 725.6a4.6 4.6 0 1 0 9.2 0a4.6 4.6 0 1 0-9.2 0M1264.2 615.0a4.6 4.6 0 1 0 9.2 0a4.6 4.6 0 1 0-9.2 0M1264.2 618.5a4.6 4.6 0 1 0 9.2 0a4.6 4.6 0 1 0-9.2 0M1264.2 622.0a4.6 4.6 0 1 0 9.2 0a4.6 4.6 0 1 0-9.2 0M1264.2 625.5a4.6 4.6 0 1 0 9.2 0a4.6 4.6 0 1 0-9.2 0M1264.2 632.6a4.6 4.6 0 1 0 9.2 0a4.6 4.6 0 1 0-9.2 0M1264.2 636.1a4.6 4.6 0 1 0 9.2 0a4.6 4.6 0 1 0-9.2 0M1264.2 643.1a4.6 4.6 0 1 0 9.2 0a4.6 4.6 0 1 0-9.2 0M1264.2 646.6a4.6 4.6 0 1 0 9.2 0a4.6 4.6 0 1 0-9.2 0M1264.2 650.1a4.6 4.6 0 1 0 9.2 0a4.6 4.6 0 1 0-9.2 0M1264.2 657.1a4.6 4.6 0 1 0 9.2 0a4.6 4.6 0 1 0-9.2 0M1264.2 664.2a4.6 4.6 0 1 0 9.2 0a4.6 4.6 0 1 0-9.2 0M1264.2 667.7a4.6 4.6 0 1 0 9.2 0a4.6 4.6 0 1 0-9.2 0M1264.2 671.2a4.6 4.6 0 1 0 9.2 0a4.6 4.6 0 1 0-9.2 0M1264.2 674.7a4.6 4.6 0 1 0 9.2 0a4.6 4.6 0 1 0-9.2 0M1264.2 678.2a4.6 4.6 0 1 0 9.2 0a4.6 4.6 0 1 0-9.2 0M1264.2 685.2a4.6 4.6 0 1 0 9.2 0a4.6 4.6 0 1 0-9.2 0M1264.2 688.7a4.6 4.6 0 1 0 9.2 0a4.6 4.6 0 1 0-9.2 0M1264.2 692.2a4.6 4.6 0 1 0 9.2 0a4.6 4.6 0 1 0-9.2 0M1270.9 608.0a4.6 4.6 0 1 0 9.2 0a4.6 4.6 0 1 0-9.2 0M1270.9 622.0a4.6 4.6 0 1 0 9.2 0a4.6 4.6 0 1 0-9.2 0M1270.9 629.1a4.6 4.6 0 1 0 9.2 0a4.6 4.6 0 1 0-9.2 0M1270.9 643.1a4.6 4.6 0 1 0 9.2 0a4.6 4.6 0 1 0-9.2 0M1270.9 646.6a4.6 4.6 0 1 0 9.2 0a4.6 4.6 0 1 0-9.2 0M1270.9 650.1a4.6 4.6 0 1 0 9.2 0a4.6 4.6 0 1 0-9.2 0M1270.9 653.6a4.6 4.6 0 1 0 9.2 0a4.6 4.6 0 1 0-9.2 0M1270.9 660.6a4.6 4.6 0 1 0 9.2 0a4.6 4.6 0 1 0-9.2 0M1270.9 664.2a4.6 4.6 0 1 0 9.2 0a4.6 4.6 0 1 0-9.2 0M1270.9 667.7a4.6 4.6 0 1 0 9.2 0a4.6 4.6 0 1 0-9.2 0M1270.9 671.2a4.6 4.6 0 1 0 9.2 0a4.6 4.6 0 1 0-9.2 0M1270.9 678.2a4.6 4.6 0 1 0 9.2 0a4.6 4.6 0 1 0-9.2 0M1270.9 685.2a4.6 4.6 0 1 0 9.2 0a4.6 4.6 0 1 0-9.2 0M1277.6 625.5a4.6 4.6 0 1 0 9.2 0a4.6 4.6 0 1 0-9.2 0M1277.6 636.1a4.6 4.6 0 1 0 9.2 0a4.6 4.6 0 1 0-9.2 0M1277.6 657.1a4.6 4.6 0 1 0 9.2 0a4.6 4.6 0 1 0-9.2 0M1277.6 681.7a4.6 4.6 0 1 0 9.2 0a4.6 4.6 0 1 0-9.2 0M1277.6 685.2a4.6 4.6 0 1 0 9.2 0a4.6 4.6 0 1 0-9.2 0M1277.6 688.7a4.6 4.6 0 1 0 9.2 0a4.6 4.6 0 1 0-9.2 0M1284.3 664.2a4.6 4.6 0 1 0 9.2 0a4.6 4.6 0 1 0-9.2 0M1288.2 715.1a4.6 4.6 0 1 0 9.2 0a4.6 4.6 0 1 0-9.2 0" fill="none" stroke="#5c90f6" stroke-width="3.2"/><line x1="948.5" y1="431.5" x2="948.5" y2="784.5" stroke="#d9d9d9" stroke-width="2"/><line x1="947.5" y1="783.5" x2="1301.5" y2="783.5" stroke="#d9d9d9" stroke-width="2"/><line x1="940.0" y1="783.5" x2="948.5" y2="783.5" stroke="#d9d9d9" stroke-width="2"/><line x1="940.0" y1="713.3" x2="948.5" y2="713.3" stroke="#d9d9d9" stroke-width="2"/><line x1="940.0" y1="643.1" x2="948.5" y2="643.1" stroke="#d9d9d9" stroke-width="2"/><line x1="940.0" y1="572.9" x2="948.5" y2="572.9" stroke="#d9d9d9" stroke-width="2"/><line x1="940.0" y1="502.70000000000005" x2="948.5" y2="502.70000000000005" stroke="#d9d9d9" stroke-width="2"/><line x1="940.0" y1="432.5" x2="948.5" y2="432.5" stroke="#d9d9d9" stroke-width="2"/><line x1="948.5" y1="783.5" x2="948.5" y2="792.0" stroke="#d9d9d9" stroke-width="2"/><line x1="1018.9" y1="783.5" x2="1018.9" y2="792.0" stroke="#d9d9d9" stroke-width="2"/><line x1="1089.3" y1="783.5" x2="1089.3" y2="792.0" stroke="#d9d9d9" stroke-width="2"/><line x1="1159.7" y1="783.5" x2="1159.7" y2="792.0" stroke="#d9d9d9" stroke-width="2"/><line x1="1230.1" y1="783.5" x2="1230.1" y2="792.0" stroke="#d9d9d9" stroke-width="2"/><line x1="1300.5" y1="783.5" x2="1300.5" y2="792.0" stroke="#d9d9d9" stroke-width="2"/></svg><div class="t" style="left:835.6px;top:775.1px;width:100px;text-align:right;font-size:16.5px;color:#e2e2e2">0</div><div class="t" style="left:835.6px;top:704.9px;width:100px;text-align:right;font-size:16.5px;color:#e2e2e2">20</div><div class="t" style="left:835.6px;top:634.7px;width:100px;text-align:right;font-size:16.5px;color:#e2e2e2">40</div><div class="t" style="left:835.6px;top:564.5px;width:100px;text-align:right;font-size:16.5px;color:#e2e2e2">60</div><div class="t" style="left:835.6px;top:494.30000000000007px;width:100px;text-align:right;font-size:16.5px;color:#e2e2e2">80</div><div class="t" style="left:835.6px;top:424.1px;width:100px;text-align:right;font-size:16.5px;color:#e2e2e2">100</div><div class="t" style="left:949.0px;top:796px;font-size:16.5px;color:#e2e2e2">−10</div><div class="t" style="left:968.9px;top:796px;width:100px;text-align:center;font-size:16.5px;color:#e2e2e2">0</div><div class="t" style="left:1039.3px;top:796px;width:100px;text-align:center;font-size:16.5px;color:#e2e2e2">10</div><div class="t" style="left:1109.7px;top:796px;width:100px;text-align:center;font-size:16.5px;color:#e2e2e2">20</div><div class="t" style="left:1180.1px;top:796px;width:100px;text-align:center;font-size:16.5px;color:#e2e2e2">30</div><div class="t" style="left:1200.5px;top:796px;width:100px;text-align:right;font-size:16.5px;color:#e2e2e2">40</div><div class="t" style="left:1024.6px;top:820.9px;width:200px;text-align:center;font-size:19px;font-weight:bold;color:#e2e2e2">temperature</div><div class="t" style="left:790px;top:598.2px;width:200px;text-align:center;font-size:19px;font-weight:bold;color:#e2e2e2;transform:rotate(-90deg)">humidity</div></body></html>
